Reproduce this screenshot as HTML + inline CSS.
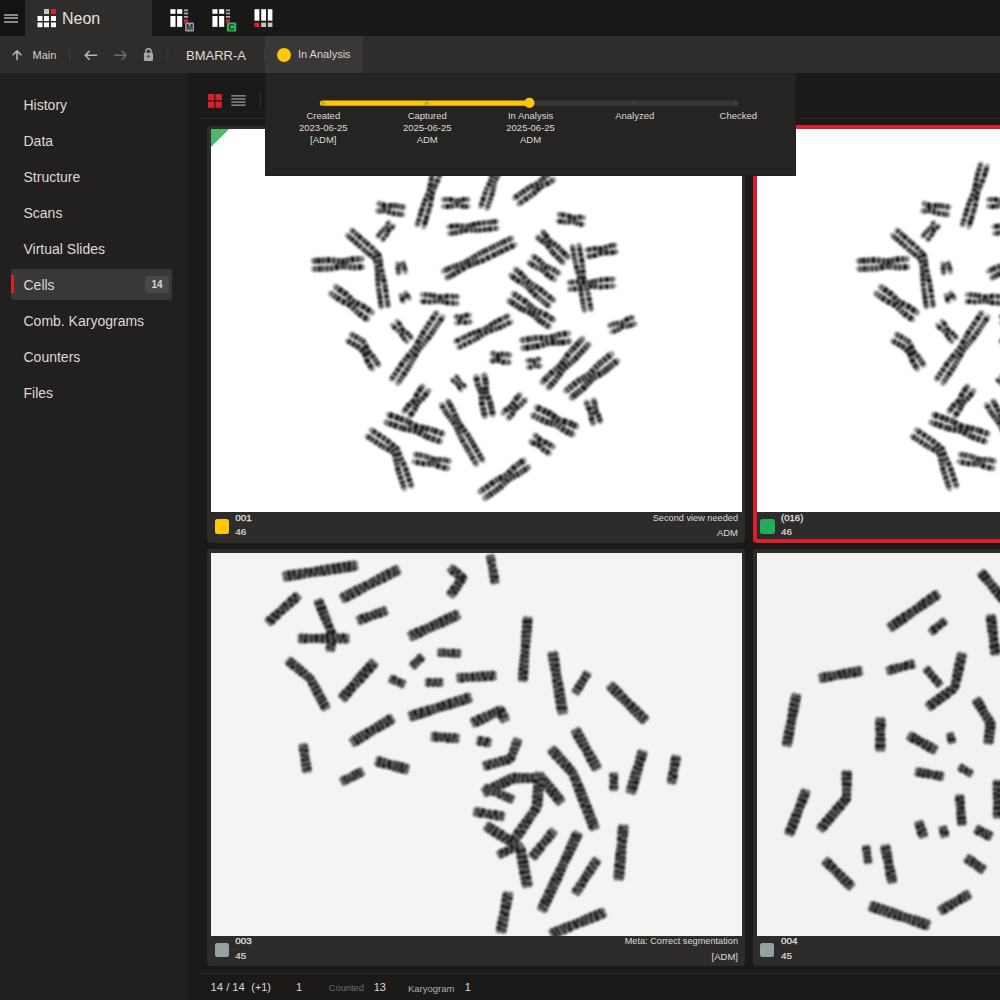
<!DOCTYPE html>
<html><head><meta charset="utf-8">
<style>
*{margin:0;padding:0;box-sizing:border-box}
html,body{width:1000px;height:1000px;overflow:hidden;background:#1b1a19;font-family:"Liberation Sans",sans-serif;color:#dedad6}
.a{position:absolute}
.t{position:absolute;white-space:nowrap;line-height:1}
</style></head><body>
<!-- top bar -->
<div class="a" style="left:0;top:0;width:1000px;height:36px;background:#1a1817"></div>
<div class="a" style="left:0;top:0;width:25px;height:36px;background:#151312"></div>
<div class="a" style="left:4px;top:13.6px;width:13.6px;height:2px;background:#8a8886"></div>
<div class="a" style="left:4px;top:17.4px;width:13.6px;height:2px;background:#8a8886"></div>
<div class="a" style="left:4px;top:21.1px;width:13.6px;height:2px;background:#8a8886"></div>
<div class="a" style="left:25px;top:0;width:127px;height:36px;background:#2e2d2c"></div>
<svg class="a" style="left:0;top:0" width="160" height="36">
<rect x="44" y="9" width="5" height="5" fill="#c8c6c4"/><rect x="51" y="9" width="5" height="5" fill="#d9202e"/>
<rect x="37.5" y="16" width="5" height="5" fill="#fff"/><rect x="44" y="16" width="5" height="5" fill="#fff"/><rect x="51" y="16" width="5" height="5" fill="#fff"/>
<rect x="37.5" y="22.5" width="5" height="4.7" fill="#fff"/><rect x="44" y="22.5" width="5" height="4.7" fill="#fff"/><rect x="51" y="22.5" width="5" height="4.7" fill="#fff"/>
</svg>
<div class="t" style="left:62px;top:10.9px;font-size:16px;color:#e6e2de">Neon</div>
<!-- app icons -->
<svg class="a" style="left:160px;top:0" width="130" height="36">
<g transform="translate(10,0)">
<rect x="0.4" y="9.2" width="5.1" height="4.6" fill="#fff"/><rect x="7.1" y="9.2" width="5.1" height="4.6" fill="#fff"/>
<rect x="0.4" y="16" width="5.1" height="10.9" fill="#fff"/><rect x="7.1" y="16" width="5.1" height="10.9" fill="#fff"/>
<rect x="13.9" y="9.4" width="4.2" height="1.8" fill="#aaa8a6"/><rect x="13.9" y="12.5" width="4.2" height="1.8" fill="#aaa8a6"/><rect x="13.9" y="16" width="4.2" height="1.8" fill="#aaa8a6"/>
<rect x="13.9" y="19.2" width="4.2" height="4.3" fill="#d9202e"/>
<rect x="14.6" y="22" width="10.4" height="10.4" rx="1.5" fill="#1a1817"/>
<rect x="15.1" y="22.5" width="8.9" height="8.9" rx="1.2" fill="#8ea3a6"/>
<text x="19.55" y="30" font-size="8.5" font-weight="bold" text-anchor="middle" fill="#1d2a30" font-family="Liberation Sans">M</text>
</g>
<g transform="translate(52,0)">
<rect x="0.4" y="9.2" width="5.1" height="4.6" fill="#fff"/><rect x="7.1" y="9.2" width="5.1" height="4.6" fill="#fff"/>
<rect x="0.4" y="16" width="5.1" height="10.9" fill="#fff"/><rect x="7.1" y="16" width="5.1" height="10.9" fill="#fff"/>
<rect x="13.9" y="9.4" width="4.2" height="1.8" fill="#aaa8a6"/><rect x="13.9" y="12.5" width="4.2" height="1.8" fill="#aaa8a6"/><rect x="13.9" y="16" width="4.2" height="1.8" fill="#aaa8a6"/>
<rect x="13.9" y="19.2" width="4.2" height="4.3" fill="#d9202e"/>
<rect x="14.4" y="22" width="10.4" height="10.4" rx="1.5" fill="#1a1817"/>
<rect x="14.9" y="22.5" width="9.4" height="9.1" rx="1.2" fill="#36b15a"/>
<text x="19.6" y="30" font-size="8.5" font-weight="bold" text-anchor="middle" fill="#12301d" font-family="Liberation Sans">C</text>
</g>
<g transform="translate(94,0)">
<rect x="0.5" y="9.2" width="4.9" height="11.5" fill="#fff"/><rect x="7.2" y="9.2" width="4.8" height="11.5" fill="#fff"/><rect x="13.8" y="9.2" width="4.6" height="11.5" fill="#fff"/>
<rect x="0.5" y="22.6" width="4.9" height="4.4" fill="#d9202e"/><rect x="7.2" y="22.6" width="4.8" height="4.4" fill="#c8c6c4"/><rect x="13.8" y="22.6" width="4.6" height="4.4" fill="#c8c6c4"/>
</g>
</svg>
<!-- sub bar -->
<div class="a" style="left:0;top:36px;width:1000px;height:37px;background:#2e2d2c"></div>
<div class="a" style="left:265px;top:36px;width:97.5px;height:37px;background:#393837"></div>
<svg class="a" style="left:0;top:36px" width="270" height="37">
<g stroke="#b8b5b2" stroke-width="1.6" fill="none" stroke-linecap="round" stroke-linejoin="round">
<path d="M17 23.6V14.9M13.1 18.8L17 14.9L20.9 18.8"/>
<path d="M85.2 19.3H96.6M89.1 15.4L85.2 19.3L89.1 23.2"/>
</g>
<g stroke="#6d6b69" stroke-width="1.6" fill="none" stroke-linecap="round" stroke-linejoin="round">
<path d="M114.8 19.3H126.2M122.3 15.4L126.2 19.3L122.3 23.2"/>
</g>
<path d="M145.9 17.5V15.2a2.55 2.55 0 0 1 5.1 0V17.5" stroke="#a9a6a3" stroke-width="1.5" fill="none"/>
<rect x="143.9" y="16.8" width="9.1" height="8.2" rx="0.9" fill="#a9a6a3"/>
<circle cx="148.45" cy="20.4" r="1.15" fill="#2e2d2c"/>
<rect x="69" y="11.5" width="1" height="14.5" fill="#3c3a39"/>
<rect x="167.2" y="11.5" width="1" height="14.5" fill="#3c3a39"/>
<rect x="264" y="11.5" width="1" height="14.5" fill="#3c3a39"/>
</svg>
<div class="t" style="left:32.6px;top:49.7px;font-size:11px;color:#d8d4d0">Main</div>
<div class="t" style="left:186px;top:48.7px;font-size:13px;color:#e0dcd8">BMARR-A</div>
<div class="a" style="left:276.8px;top:47.5px;width:14px;height:14px;border-radius:50%;background:#fcc609"></div>
<div class="t" style="left:298px;top:49.4px;font-size:11px;color:#d8d4d0">In Analysis</div>

<!-- sidebar -->
<div class="a" style="left:0;top:73px;width:188px;height:927px;background:#211f1f"></div>
<div class="a" style="left:11px;top:269px;width:161px;height:30.5px;border-radius:3px;background:#393837"></div>
<div class="a" style="left:11px;top:275px;width:3px;height:18px;background:#d9202e"></div>
<div class="a" style="left:145px;top:276px;width:24px;height:17px;border-radius:4px;background:#4a4948"></div>
<div class="t" style="left:145px;top:279.5px;width:24px;text-align:center;font-size:10px;font-weight:bold;color:#d8d4d0">14</div>
<div class="t" style="left:23.5px;top:97.85px;font-size:14px">History</div>
<div class="t" style="left:23.5px;top:133.85px;font-size:14px">Data</div>
<div class="t" style="left:23.5px;top:169.85px;font-size:14px">Structure</div>
<div class="t" style="left:23.5px;top:205.85px;font-size:14px">Scans</div>
<div class="t" style="left:23.5px;top:241.85px;font-size:14px">Virtual Slides</div>
<div class="t" style="left:23.5px;top:277.85px;font-size:14px">Cells</div>
<div class="t" style="left:23.5px;top:313.85px;font-size:14px">Comb. Karyograms</div>
<div class="t" style="left:23.5px;top:349.85px;font-size:14px">Counters</div>
<div class="t" style="left:23.5px;top:385.85px;font-size:14px">Files</div>

<!-- toolbar -->
<svg class="a" style="left:188px;top:73px" width="812" height="50">
<rect x="20" y="21" width="6.3" height="6.3" fill="#d9202e"/><rect x="27.5" y="21" width="6.3" height="6.3" fill="#d9202e"/>
<rect x="20" y="28.5" width="6.3" height="6.3" fill="#d9202e"/><rect x="27.5" y="28.5" width="6.3" height="6.3" fill="#d9202e"/>
<g fill="#9c9a98"><rect x="43.3" y="22.2" width="14.3" height="1.3"/><rect x="43.3" y="25.3" width="14.3" height="1.3"/><rect x="43.3" y="28.4" width="14.3" height="1.3"/><rect x="43.3" y="31.5" width="14.3" height="1.3"/></g>
<rect x="72" y="18" width="1" height="17.5" fill="#2e2c2b"/>
<rect x="12" y="45" width="800" height="1" fill="#2a2827"/>
</svg>

<!-- tiles -->
<div class="a" style="left:207px;top:125.5px;width:538px;height:417px;border-radius:4px;background:#2d2c2b"></div>
<div class="a" style="left:210.8px;top:129px;width:531px;height:383px;background:#fff;overflow:hidden" id="img1"></div>
<div class="a" style="left:752.8px;top:125.2px;width:300px;height:417.7px;border-radius:4px;background:#2d2c2b;border:4px solid #d9202e"></div>
<div class="a" style="left:756.7px;top:129px;width:300px;height:383px;background:#fff;overflow:hidden" id="img2"></div>
<div class="a" style="left:207px;top:549.2px;width:538px;height:417px;border-radius:4px;background:#2d2c2b"></div>
<div class="a" style="left:210.8px;top:552.5px;width:531px;height:383px;background:#f4f4f4;overflow:hidden" id="img3"></div>
<div class="a" style="left:753px;top:549.2px;width:300px;height:417px;border-radius:4px;background:#2d2c2b"></div>
<div class="a" style="left:756.7px;top:552.5px;width:300px;height:383px;background:#f2f2f2;overflow:hidden" id="img4"></div>

<!--CHROMO-->
<svg class="a" style="left:210.8px;top:129px" width="531" height="383" viewBox="210.8 129 531 383">
<defs><filter id="b1" x="-5%" y="-5%" width="110%" height="110%"><feGaussianBlur stdDeviation="0.8"/></filter>
<filter id="b2" x="-5%" y="-5%" width="110%" height="110%"><feGaussianBlur stdDeviation="0.9"/></filter>
<filter id="b3" x="-5%" y="-5%" width="110%" height="110%"><feGaussianBlur stdDeviation="0.85"/></filter></defs>
<path d="M210.8 129H229L210.8 147Z" fill="#4cb86c"/>
<g filter="url(#b1)"><g id="spA" stroke-linejoin="round">
<path d="M435.5 163.9 L435.0 165.5 L434.3 168.1 L433.5 170.6 L432.7 173.1 L432.0 175.6 L431.4 178.2 L430.9 180.8 L430.4 183.4 L429.9 186.0 L429.4 188.6 L428.8 191.2 L427.8 193.6 L426.8 196.1 L425.8 198.5 L424.7 200.9 L423.7 203.4 L422.9 205.9 L422.1 208.4 L421.3 210.9 L420.6 213.4 L419.8 215.9 L419.1 218.5 L418.3 221.0 L417.5 223.5 L417.0 225.1" fill="none" stroke="#9c9c9c" stroke-width="4.8" stroke-linecap="round"/>
<path d="M435.5 163.9 L435.0 165.5 L434.3 168.1 L433.5 170.6 L432.7 173.1 L432.0 175.6 L431.4 178.2 L430.9 180.8 L430.4 183.4 L429.9 186.0 L429.4 188.6 L428.8 191.2 L427.8 193.6 L426.8 196.1 L425.8 198.5 L424.7 200.9 L423.7 203.4 L422.9 205.9 L422.1 208.4 L421.3 210.9 L420.6 213.4 L419.8 215.9 L419.1 218.5 L418.3 221.0 L417.5 223.5 L417.0 225.1" fill="none" stroke="#121212" stroke-width="5.0" stroke-linecap="butt" stroke-dasharray="4.0 1.7 3.6 1.3 4.1 0.9 3.8 1.4 4.8 0.8" stroke-dashoffset="1.5"/>
<path d="M442.0 165.9 L441.5 167.5 L440.7 170.0 L439.9 172.5 L439.2 175.1 L438.4 177.6 L437.5 180.0 L436.5 182.5 L435.5 184.9 L434.4 187.4 L433.4 189.8 L432.4 192.3 L431.9 194.9 L431.4 197.5 L430.9 200.1 L430.5 202.7 L430.0 205.3 L429.3 207.8 L428.5 210.3 L427.8 212.9 L427.0 215.4 L426.3 217.9 L425.5 220.4 L424.7 222.9 L424.0 225.5 L423.5 227.1" fill="none" stroke="#9c9c9c" stroke-width="4.8" stroke-linecap="round"/>
<path d="M442.0 165.9 L441.5 167.5 L440.7 170.0 L439.9 172.5 L439.2 175.1 L438.4 177.6 L437.5 180.0 L436.5 182.5 L435.5 184.9 L434.4 187.4 L433.4 189.8 L432.4 192.3 L431.9 194.9 L431.4 197.5 L430.9 200.1 L430.5 202.7 L430.0 205.3 L429.3 207.8 L428.5 210.3 L427.8 212.9 L427.0 215.4 L426.3 217.9 L425.5 220.4 L424.7 222.9 L424.0 225.5 L423.5 227.1" fill="none" stroke="#121212" stroke-width="5.0" stroke-linecap="butt" stroke-dasharray="2.3 1.6 4.4 0.7 5.4 1.8 4.3 1.4 2.6 0.7" stroke-dashoffset="2.6"/>
<path d="M377.4 210.8 L379.2 211.0 L382.0 210.7 L384.8 210.3 L387.4 211.2 L390.0 212.4 L392.7 213.1 L395.4 213.5 L398.1 213.9 L400.8 214.3 L402.5 214.5" fill="none" stroke="#9c9c9c" stroke-width="5.3" stroke-linecap="round"/>
<path d="M377.4 210.8 L379.2 211.0 L382.0 210.7 L384.8 210.3 L387.4 211.2 L390.0 212.4 L392.7 213.1 L395.4 213.5 L398.1 213.9 L400.8 214.3 L402.5 214.5" fill="none" stroke="#121212" stroke-width="5.5" stroke-linecap="butt" stroke-dasharray="2.7 1.0 2.1 1.2 3.5 1.6 3.8 1.4 3.7 1.4" stroke-dashoffset="2.3"/>
<path d="M378.5 203.5 L380.2 203.8 L382.8 204.9 L385.4 206.1 L388.2 206.0 L391.0 205.6 L393.7 205.7 L396.4 206.1 L399.1 206.5 L401.8 206.9 L403.6 207.2" fill="none" stroke="#9c9c9c" stroke-width="5.3" stroke-linecap="round"/>
<path d="M378.5 203.5 L380.2 203.8 L382.8 204.9 L385.4 206.1 L388.2 206.0 L391.0 205.6 L393.7 205.7 L396.4 206.1 L399.1 206.5 L401.8 206.9 L403.6 207.2" fill="none" stroke="#121212" stroke-width="5.5" stroke-linecap="butt" stroke-dasharray="3.0 1.8 5.5 1.6 4.5 1.0 2.8 1.0 2.2 1.5" stroke-dashoffset="2.0"/>
<path d="M442.9 206.4 L444.7 206.4 L447.4 206.4 L450.1 206.4 L452.8 205.9 L455.5 205.2 L458.2 205.2 L460.9 205.9 L463.6 206.4 L466.3 206.4 L468.1 206.4" fill="none" stroke="#9c9c9c" stroke-width="4.8" stroke-linecap="round"/>
<path d="M442.9 206.4 L444.7 206.4 L447.4 206.4 L450.1 206.4 L452.8 205.9 L455.5 205.2 L458.2 205.2 L460.9 205.9 L463.6 206.4 L466.3 206.4 L468.1 206.4" fill="none" stroke="#121212" stroke-width="5.0" stroke-linecap="butt" stroke-dasharray="3.4 1.8 5.0 0.7 2.7 1.7 3.6 1.8 3.4 0.8" stroke-dashoffset="3.1"/>
<path d="M442.9 199.6 L444.7 199.6 L447.4 199.6 L450.1 199.6 L452.8 200.1 L455.5 200.8 L458.2 200.8 L460.9 200.1 L463.6 199.6 L466.3 199.6 L468.1 199.6" fill="none" stroke="#9c9c9c" stroke-width="4.8" stroke-linecap="round"/>
<path d="M442.9 199.6 L444.7 199.6 L447.4 199.6 L450.1 199.6 L452.8 200.1 L455.5 200.8 L458.2 200.8 L460.9 200.1 L463.6 199.6 L466.3 199.6 L468.1 199.6" fill="none" stroke="#121212" stroke-width="5.0" stroke-linecap="butt" stroke-dasharray="4.7 1.0 2.3 1.1 5.4 1.5 2.4 1.0 2.4 0.8" stroke-dashoffset="4.0"/>
<path d="M388.8 222.0 L387.7 223.5 L386.6 226.4 L384.7 228.6 L382.2 230.4 L380.4 232.7 L378.6 235.0 L377.4 236.5" fill="none" stroke="#9c9c9c" stroke-width="4.3" stroke-linecap="round"/>
<path d="M388.8 222.0 L387.7 223.5 L386.6 226.4 L384.7 228.6 L382.2 230.4 L380.4 232.7 L378.6 235.0 L377.4 236.5" fill="none" stroke="#121212" stroke-width="4.5" stroke-linecap="butt" stroke-dasharray="4.0 1.2 2.7 1.5 2.5 1.4 2.4 1.2 2.7 1.0" stroke-dashoffset="4.9"/>
<path d="M393.5 225.7 L392.3 227.1 L389.8 228.9 L388.1 231.2 L387.0 234.1 L385.2 236.4 L383.4 238.7 L382.2 240.2" fill="none" stroke="#9c9c9c" stroke-width="4.3" stroke-linecap="round"/>
<path d="M393.5 225.7 L392.3 227.1 L389.8 228.9 L388.1 231.2 L387.0 234.1 L385.2 236.4 L383.4 238.7 L382.2 240.2" fill="none" stroke="#121212" stroke-width="4.5" stroke-linecap="butt" stroke-dasharray="4.8 1.0 5.1 0.9 3.4 1.6 4.2 0.8 5.5 0.9" stroke-dashoffset="1.3"/>
<path d="M347.1 235.1 L348.4 236.3 L350.3 238.0 L352.3 239.7 L354.3 241.4 L356.3 243.2 L358.2 244.9 L360.2 246.6 L362.2 248.3 L364.2 250.1 L366.1 251.8 L368.2 253.5 L370.3 255.0 L372.4 256.6 L374.2 257.9 L375.2 259.1 L375.7 261.2 L376.2 263.8 L376.8 266.3 L377.0 268.9 L377.2 271.6 L377.4 274.2 L377.5 276.8 L377.7 279.4 L377.9 282.1 L378.0 284.7 L378.3 287.3 L378.7 289.9 L379.0 292.5 L379.4 295.1 L379.8 297.7 L380.2 300.3 L380.5 302.9 L380.9 305.5 L381.1 307.2" fill="none" stroke="#9c9c9c" stroke-width="4.8" stroke-linecap="round"/>
<path d="M347.1 235.1 L348.4 236.3 L350.3 238.0 L352.3 239.7 L354.3 241.4 L356.3 243.2 L358.2 244.9 L360.2 246.6 L362.2 248.3 L364.2 250.1 L366.1 251.8 L368.2 253.5 L370.3 255.0 L372.4 256.6 L374.2 257.9 L375.2 259.1 L375.7 261.2 L376.2 263.8 L376.8 266.3 L377.0 268.9 L377.2 271.6 L377.4 274.2 L377.5 276.8 L377.7 279.4 L377.9 282.1 L378.0 284.7 L378.3 287.3 L378.7 289.9 L379.0 292.5 L379.4 295.1 L379.8 297.7 L380.2 300.3 L380.5 302.9 L380.9 305.5 L381.1 307.2" fill="none" stroke="#121212" stroke-width="5.0" stroke-linecap="butt" stroke-dasharray="3.2 1.0 2.3 0.8 4.0 1.0 4.1 1.1 3.6 1.8" stroke-dashoffset="2.4"/>
<path d="M351.5 230.1 L352.8 231.2 L354.8 232.9 L356.7 234.7 L358.7 236.4 L360.7 238.1 L362.7 239.8 L364.6 241.6 L366.6 243.3 L368.6 245.0 L370.6 246.7 L372.5 248.5 L374.3 250.4 L376.2 252.3 L378.3 254.4 L379.9 257.4 L380.2 260.5 L380.3 263.2 L380.5 265.8 L381.0 268.4 L381.6 270.9 L382.2 273.5 L382.8 276.1 L383.3 278.6 L383.9 281.2 L384.5 283.8 L385.0 286.4 L385.3 288.9 L385.7 291.5 L386.1 294.1 L386.4 296.7 L386.8 299.3 L387.2 301.9 L387.6 304.5 L387.8 306.2" fill="none" stroke="#9c9c9c" stroke-width="4.8" stroke-linecap="round"/>
<path d="M351.5 230.1 L352.8 231.2 L354.8 232.9 L356.7 234.7 L358.7 236.4 L360.7 238.1 L362.7 239.8 L364.6 241.6 L366.6 243.3 L368.6 245.0 L370.6 246.7 L372.5 248.5 L374.3 250.4 L376.2 252.3 L378.3 254.4 L379.9 257.4 L380.2 260.5 L380.3 263.2 L380.5 265.8 L381.0 268.4 L381.6 270.9 L382.2 273.5 L382.8 276.1 L383.3 278.6 L383.9 281.2 L384.5 283.8 L385.0 286.4 L385.3 288.9 L385.7 291.5 L386.1 294.1 L386.4 296.7 L386.8 299.3 L387.2 301.9 L387.6 304.5 L387.8 306.2" fill="none" stroke="#121212" stroke-width="5.0" stroke-linecap="butt" stroke-dasharray="4.0 1.7 2.6 0.9 5.2 1.6 2.9 0.9 4.6 1.7" stroke-dashoffset="1.0"/>
<path d="M313.7 269.0 L315.4 268.9 L318.1 268.8 L320.7 268.7 L323.4 268.6 L326.0 268.5 L328.7 268.4 L331.3 268.3 L334.0 267.7 L336.6 267.2 L339.2 266.6 L341.9 266.1 L344.5 266.3 L347.2 266.7 L349.9 267.0 L352.5 267.3 L355.2 267.3 L357.9 267.2 L360.5 267.1 L362.2 267.1" fill="none" stroke="#9c9c9c" stroke-width="5.8" stroke-linecap="round"/>
<path d="M313.7 269.0 L315.4 268.9 L318.1 268.8 L320.7 268.7 L323.4 268.6 L326.0 268.5 L328.7 268.4 L331.3 268.3 L334.0 267.7 L336.6 267.2 L339.2 266.6 L341.9 266.1 L344.5 266.3 L347.2 266.7 L349.9 267.0 L352.5 267.3 L355.2 267.3 L357.9 267.2 L360.5 267.1 L362.2 267.1" fill="none" stroke="#121212" stroke-width="6.0" stroke-linecap="butt" stroke-dasharray="5.1 1.4 3.5 0.8 2.1 1.8 2.8 1.5 2.9 1.6" stroke-dashoffset="3.0"/>
<path d="M313.4 260.9 L315.1 260.9 L317.7 260.8 L320.4 260.7 L323.1 260.6 L325.7 260.4 L328.4 260.3 L331.0 260.3 L333.7 260.6 L336.3 260.9 L339.0 261.2 L341.7 261.6 L344.3 261.1 L347.0 260.6 L349.6 260.1 L352.2 259.5 L354.9 259.3 L357.5 259.2 L360.2 259.1 L361.9 259.0" fill="none" stroke="#9c9c9c" stroke-width="5.8" stroke-linecap="round"/>
<path d="M313.4 260.9 L315.1 260.9 L317.7 260.8 L320.4 260.7 L323.1 260.6 L325.7 260.4 L328.4 260.3 L331.0 260.3 L333.7 260.6 L336.3 260.9 L339.0 261.2 L341.7 261.6 L344.3 261.1 L347.0 260.6 L349.6 260.1 L352.2 259.5 L354.9 259.3 L357.5 259.2 L360.2 259.1 L361.9 259.0" fill="none" stroke="#121212" stroke-width="6.0" stroke-linecap="butt" stroke-dasharray="3.0 0.9 4.5 0.8 2.8 1.3 5.0 1.4 3.0 1.7" stroke-dashoffset="1.0"/>
<path d="M397.3 263.5 L398.3 265.4 L397.9 268.5 L398.2 271.6 L398.5 273.5" fill="none" stroke="#9c9c9c" stroke-width="4.8" stroke-linecap="round"/>
<path d="M397.3 263.5 L398.3 265.4 L397.9 268.5 L398.2 271.6 L398.5 273.5" fill="none" stroke="#121212" stroke-width="5.0" stroke-linecap="butt" stroke-dasharray="2.9 1.2 2.2 0.9 3.3 1.3 2.5 1.1 5.1 1.8" stroke-dashoffset="3.3"/>
<path d="M403.1 262.6 L402.7 264.6 L404.1 267.5 L404.8 270.4 L405.1 272.4" fill="none" stroke="#9c9c9c" stroke-width="4.8" stroke-linecap="round"/>
<path d="M403.1 262.6 L402.7 264.6 L404.1 267.5 L404.8 270.4 L405.1 272.4" fill="none" stroke="#121212" stroke-width="5.0" stroke-linecap="butt" stroke-dasharray="4.4 1.3 2.5 0.7 2.1 1.7 4.5 1.8 2.1 1.4" stroke-dashoffset="2.4"/>
<path d="M330.8 293.4 L332.3 294.5 L334.5 296.1 L336.7 297.6 L339.0 299.2 L341.2 300.8 L343.7 302.0 L346.2 303.2 L348.7 304.4 L351.1 305.8 L353.0 307.8 L355.0 309.7 L356.9 311.7 L359.0 313.5 L361.2 315.1 L363.4 316.7 L365.6 318.3 L367.1 319.3" fill="none" stroke="#9c9c9c" stroke-width="5.8" stroke-linecap="round"/>
<path d="M330.8 293.4 L332.3 294.5 L334.5 296.1 L336.7 297.6 L339.0 299.2 L341.2 300.8 L343.7 302.0 L346.2 303.2 L348.7 304.4 L351.1 305.8 L353.0 307.8 L355.0 309.7 L356.9 311.7 L359.0 313.5 L361.2 315.1 L363.4 316.7 L365.6 318.3 L367.1 319.3" fill="none" stroke="#121212" stroke-width="6.0" stroke-linecap="butt" stroke-dasharray="3.1 1.8 2.3 1.3 4.6 1.7 4.6 1.5 4.8 1.7" stroke-dashoffset="1.8"/>
<path d="M335.5 286.9 L337.0 287.9 L339.2 289.5 L341.4 291.1 L343.6 292.7 L345.9 294.3 L347.8 296.2 L349.8 298.2 L351.7 300.2 L353.7 302.0 L356.3 303.2 L358.8 304.4 L361.3 305.6 L363.6 307.0 L365.9 308.6 L368.1 310.1 L370.3 311.7 L371.8 312.8" fill="none" stroke="#9c9c9c" stroke-width="5.8" stroke-linecap="round"/>
<path d="M335.5 286.9 L337.0 287.9 L339.2 289.5 L341.4 291.1 L343.6 292.7 L345.9 294.3 L347.8 296.2 L349.8 298.2 L351.7 300.2 L353.7 302.0 L356.3 303.2 L358.8 304.4 L361.3 305.6 L363.6 307.0 L365.9 308.6 L368.1 310.1 L370.3 311.7 L371.8 312.8" fill="none" stroke="#121212" stroke-width="6.0" stroke-linecap="butt" stroke-dasharray="4.4 1.7 5.0 1.2 4.8 1.6 4.0 1.4 3.3 1.3" stroke-dashoffset="3.0"/>
<path d="M400.4 295.2 L402.1 296.5 L402.2 299.8 L403.0 301.6" fill="none" stroke="#9c9c9c" stroke-width="4.8" stroke-linecap="round"/>
<path d="M400.4 295.2 L402.1 296.5 L402.2 299.8 L403.0 301.6" fill="none" stroke="#121212" stroke-width="5.0" stroke-linecap="butt" stroke-dasharray="4.2 1.8 5.1 1.5 3.4 1.5 4.0 1.2 4.9 0.8" stroke-dashoffset="3.8"/>
<path d="M405.5 292.7 L405.5 294.8 L408.2 296.8 L409.0 298.6" fill="none" stroke="#9c9c9c" stroke-width="4.8" stroke-linecap="round"/>
<path d="M405.5 292.7 L405.5 294.8 L408.2 296.8 L409.0 298.6" fill="none" stroke="#121212" stroke-width="5.0" stroke-linecap="butt" stroke-dasharray="2.1 1.4 3.7 1.0 4.4 1.2 4.2 1.7 2.9 0.7" stroke-dashoffset="1.5"/>
<path d="M421.4 301.4 L423.1 301.5 L425.8 301.6 L428.5 301.8 L431.2 301.9 L433.9 301.6 L436.7 301.2 L439.4 300.9 L442.1 301.5 L444.8 302.1 L447.4 302.7 L450.1 302.9 L452.8 303.1 L455.5 303.2 L457.3 303.3" fill="none" stroke="#9c9c9c" stroke-width="4.8" stroke-linecap="round"/>
<path d="M421.4 301.4 L423.1 301.5 L425.8 301.6 L428.5 301.8 L431.2 301.9 L433.9 301.6 L436.7 301.2 L439.4 300.9 L442.1 301.5 L444.8 302.1 L447.4 302.7 L450.1 302.9 L452.8 303.1 L455.5 303.2 L457.3 303.3" fill="none" stroke="#121212" stroke-width="5.0" stroke-linecap="butt" stroke-dasharray="2.7 0.9 5.2 1.4 3.5 1.7 3.1 1.4 2.7 1.2" stroke-dashoffset="4.0"/>
<path d="M421.7 294.7 L423.5 294.8 L426.2 294.9 L428.9 295.1 L431.6 295.2 L434.3 295.9 L436.9 296.5 L439.6 297.1 L442.3 296.8 L445.0 296.5 L447.8 296.1 L450.5 296.2 L453.2 296.4 L455.9 296.5 L457.6 296.6" fill="none" stroke="#9c9c9c" stroke-width="4.8" stroke-linecap="round"/>
<path d="M421.7 294.7 L423.5 294.8 L426.2 294.9 L428.9 295.1 L431.6 295.2 L434.3 295.9 L436.9 296.5 L439.6 297.1 L442.3 296.8 L445.0 296.5 L447.8 296.1 L450.5 296.2 L453.2 296.4 L455.9 296.5 L457.6 296.6" fill="none" stroke="#121212" stroke-width="5.0" stroke-linecap="butt" stroke-dasharray="5.2 1.7 3.3 1.3 3.1 0.8 3.7 1.6 5.0 1.5" stroke-dashoffset="4.8"/>
<path d="M448.9 233.4 L450.6 233.3 L453.2 233.0 L455.9 232.7 L458.5 232.1 L461.1 231.4 L463.7 230.8 L466.3 230.1 L469.0 230.0 L471.6 230.1 L474.3 230.2 L477.0 230.2 L479.7 230.1 L482.3 229.8 L484.9 229.6 L487.6 229.3 L490.2 229.0 L492.9 228.7 L495.5 228.4 L497.2 228.2" fill="none" stroke="#9c9c9c" stroke-width="4.8" stroke-linecap="round"/>
<path d="M448.9 233.4 L450.6 233.3 L453.2 233.0 L455.9 232.7 L458.5 232.1 L461.1 231.4 L463.7 230.8 L466.3 230.1 L469.0 230.0 L471.6 230.1 L474.3 230.2 L477.0 230.2 L479.7 230.1 L482.3 229.8 L484.9 229.6 L487.6 229.3 L490.2 229.0 L492.9 228.7 L495.5 228.4 L497.2 228.2" fill="none" stroke="#121212" stroke-width="5.0" stroke-linecap="butt" stroke-dasharray="2.6 1.2 3.0 0.9 3.4 1.4 3.7 1.0 4.9 1.8" stroke-dashoffset="2.3"/>
<path d="M448.2 226.8 L449.9 226.6 L452.5 226.3 L455.2 226.0 L457.8 226.0 L460.5 226.1 L463.2 226.2 L465.9 226.3 L468.5 225.8 L471.1 225.2 L473.7 224.5 L476.3 223.9 L478.9 223.4 L481.6 223.2 L484.2 222.9 L486.9 222.6 L489.5 222.3 L492.2 222.0 L494.8 221.7 L496.5 221.6" fill="none" stroke="#9c9c9c" stroke-width="4.8" stroke-linecap="round"/>
<path d="M448.2 226.8 L449.9 226.6 L452.5 226.3 L455.2 226.0 L457.8 226.0 L460.5 226.1 L463.2 226.2 L465.9 226.3 L468.5 225.8 L471.1 225.2 L473.7 224.5 L476.3 223.9 L478.9 223.4 L481.6 223.2 L484.2 222.9 L486.9 222.6 L489.5 222.3 L492.2 222.0 L494.8 221.7 L496.5 221.6" fill="none" stroke="#121212" stroke-width="5.0" stroke-linecap="butt" stroke-dasharray="2.3 0.7 5.1 0.7 4.5 1.3 3.1 1.6 2.1 0.8" stroke-dashoffset="2.3"/>
<path d="M446.5 277.9 L448.0 277.2 L450.4 276.0 L452.8 274.7 L455.1 273.3 L457.4 271.9 L459.7 270.5 L462.0 269.1 L464.3 267.7 L466.6 266.3 L469.1 265.4 L471.7 264.4 L474.2 263.5 L476.7 262.5 L479.3 261.6 L481.8 260.7 L484.2 259.6 L486.6 258.4 L489.1 257.2 L491.5 256.0 L493.9 254.9 L496.3 253.7 L498.7 252.5 L501.1 251.4 L503.5 250.2 L506.0 249.0 L508.4 247.8 L510.8 246.7 L513.2 245.5 L514.8 244.7" fill="none" stroke="#9c9c9c" stroke-width="5.3" stroke-linecap="round"/>
<path d="M446.5 277.9 L448.0 277.2 L450.4 276.0 L452.8 274.7 L455.1 273.3 L457.4 271.9 L459.7 270.5 L462.0 269.1 L464.3 267.7 L466.6 266.3 L469.1 265.4 L471.7 264.4 L474.2 263.5 L476.7 262.5 L479.3 261.6 L481.8 260.7 L484.2 259.6 L486.6 258.4 L489.1 257.2 L491.5 256.0 L493.9 254.9 L496.3 253.7 L498.7 252.5 L501.1 251.4 L503.5 250.2 L506.0 249.0 L508.4 247.8 L510.8 246.7 L513.2 245.5 L514.8 244.7" fill="none" stroke="#121212" stroke-width="5.5" stroke-linecap="butt" stroke-dasharray="4.9 1.0 2.5 0.8 4.2 1.2 4.2 1.4 4.8 1.8" stroke-dashoffset="3.4"/>
<path d="M443.2 271.3 L444.8 270.5 L447.2 269.3 L449.7 268.3 L452.2 267.3 L454.7 266.4 L457.3 265.5 L459.8 264.5 L462.3 263.6 L464.8 262.6 L467.1 261.2 L469.4 259.8 L471.7 258.4 L474.0 257.0 L476.3 255.6 L478.6 254.2 L481.0 252.9 L483.4 251.7 L485.8 250.6 L488.2 249.4 L490.7 248.2 L493.1 247.1 L495.5 245.9 L497.9 244.7 L500.3 243.5 L502.7 242.4 L505.1 241.2 L507.6 240.0 L510.0 238.8 L511.5 238.1" fill="none" stroke="#9c9c9c" stroke-width="5.3" stroke-linecap="round"/>
<path d="M443.2 271.3 L444.8 270.5 L447.2 269.3 L449.7 268.3 L452.2 267.3 L454.7 266.4 L457.3 265.5 L459.8 264.5 L462.3 263.6 L464.8 262.6 L467.1 261.2 L469.4 259.8 L471.7 258.4 L474.0 257.0 L476.3 255.6 L478.6 254.2 L481.0 252.9 L483.4 251.7 L485.8 250.6 L488.2 249.4 L490.7 248.2 L493.1 247.1 L495.5 245.9 L497.9 244.7 L500.3 243.5 L502.7 242.4 L505.1 241.2 L507.6 240.0 L510.0 238.8 L511.5 238.1" fill="none" stroke="#121212" stroke-width="5.5" stroke-linecap="butt" stroke-dasharray="2.7 1.2 2.6 0.7 3.7 1.5 2.6 1.0 3.2 1.5" stroke-dashoffset="2.6"/>
<path d="M391.9 324.7 L393.1 326.1 L394.9 328.2 L397.0 330.0 L399.4 331.6 L401.0 333.8 L402.3 336.4 L403.9 338.6 L405.7 340.7 L406.9 342.0" fill="none" stroke="#9c9c9c" stroke-width="4.3" stroke-linecap="round"/>
<path d="M391.9 324.7 L393.1 326.1 L394.9 328.2 L397.0 330.0 L399.4 331.6 L401.0 333.8 L402.3 336.4 L403.9 338.6 L405.7 340.7 L406.9 342.0" fill="none" stroke="#121212" stroke-width="4.5" stroke-linecap="butt" stroke-dasharray="4.6 1.1 4.8 1.7 2.3 1.7 4.5 0.8 3.6 1.4" stroke-dashoffset="4.5"/>
<path d="M396.5 320.8 L397.7 322.1 L399.5 324.2 L401.0 326.6 L402.2 329.1 L404.2 331.1 L406.5 332.7 L408.5 334.6 L410.3 336.7 L411.5 338.1" fill="none" stroke="#9c9c9c" stroke-width="4.3" stroke-linecap="round"/>
<path d="M396.5 320.8 L397.7 322.1 L399.5 324.2 L401.0 326.6 L402.2 329.1 L404.2 331.1 L406.5 332.7 L408.5 334.6 L410.3 336.7 L411.5 338.1" fill="none" stroke="#121212" stroke-width="4.5" stroke-linecap="butt" stroke-dasharray="3.3 1.3 5.1 1.6 5.3 1.2 4.3 0.9 4.5 1.6" stroke-dashoffset="3.2"/>
<path d="M436.4 312.7 L435.5 314.1 L434.0 316.3 L432.5 318.5 L431.0 320.7 L429.5 322.9 L428.0 325.1 L426.6 327.3 L425.1 329.5 L423.6 331.7 L422.3 334.0 L421.0 336.3 L419.7 338.6 L418.4 341.0 L417.1 343.3 L415.9 345.6 L414.6 348.0 L412.9 350.0 L411.2 352.1 L409.5 354.1 L407.8 356.2 L406.1 358.2 L404.5 360.3 L402.8 362.4 L401.3 364.6 L399.8 366.8 L398.4 369.0 L396.9 371.2 L395.4 373.3 L393.9 375.5 L392.4 377.7 L391.5 379.2" fill="none" stroke="#9c9c9c" stroke-width="5.3" stroke-linecap="round"/>
<path d="M436.4 312.7 L435.5 314.1 L434.0 316.3 L432.5 318.5 L431.0 320.7 L429.5 322.9 L428.0 325.1 L426.6 327.3 L425.1 329.5 L423.6 331.7 L422.3 334.0 L421.0 336.3 L419.7 338.6 L418.4 341.0 L417.1 343.3 L415.9 345.6 L414.6 348.0 L412.9 350.0 L411.2 352.1 L409.5 354.1 L407.8 356.2 L406.1 358.2 L404.5 360.3 L402.8 362.4 L401.3 364.6 L399.8 366.8 L398.4 369.0 L396.9 371.2 L395.4 373.3 L393.9 375.5 L392.4 377.7 L391.5 379.2" fill="none" stroke="#121212" stroke-width="5.5" stroke-linecap="butt" stroke-dasharray="2.7 1.7 5.4 1.8 3.9 1.6 3.1 1.7 5.0 1.1" stroke-dashoffset="0.4"/>
<path d="M442.5 316.8 L441.6 318.3 L440.1 320.5 L438.6 322.7 L437.1 324.8 L435.6 327.0 L434.2 329.2 L432.7 331.4 L431.2 333.6 L429.7 335.8 L428.1 337.9 L426.4 339.9 L424.7 342.0 L423.0 344.1 L421.3 346.1 L419.6 348.2 L417.9 350.2 L416.7 352.6 L415.4 354.9 L414.1 357.2 L412.8 359.6 L411.5 361.9 L410.3 364.2 L408.9 366.5 L407.4 368.7 L406.0 370.9 L404.5 373.1 L403.0 375.3 L401.5 377.5 L400.0 379.7 L398.5 381.9 L397.6 383.3" fill="none" stroke="#9c9c9c" stroke-width="5.3" stroke-linecap="round"/>
<path d="M442.5 316.8 L441.6 318.3 L440.1 320.5 L438.6 322.7 L437.1 324.8 L435.6 327.0 L434.2 329.2 L432.7 331.4 L431.2 333.6 L429.7 335.8 L428.1 337.9 L426.4 339.9 L424.7 342.0 L423.0 344.1 L421.3 346.1 L419.6 348.2 L417.9 350.2 L416.7 352.6 L415.4 354.9 L414.1 357.2 L412.8 359.6 L411.5 361.9 L410.3 364.2 L408.9 366.5 L407.4 368.7 L406.0 370.9 L404.5 373.1 L403.0 375.3 L401.5 377.5 L400.0 379.7 L398.5 381.9 L397.6 383.3" fill="none" stroke="#121212" stroke-width="5.5" stroke-linecap="butt" stroke-dasharray="3.5 1.3 4.7 1.2 2.1 1.6 2.2 1.6 2.6 1.1" stroke-dashoffset="3.9"/>
<path d="M456.1 323.1 L457.8 322.8 L460.4 321.4 L463.2 322.1 L465.9 322.3 L468.6 322.0 L470.4 321.8" fill="none" stroke="#9c9c9c" stroke-width="4.8" stroke-linecap="round"/>
<path d="M456.1 323.1 L457.8 322.8 L460.4 321.4 L463.2 322.1 L465.9 322.3 L468.6 322.0 L470.4 321.8" fill="none" stroke="#121212" stroke-width="5.0" stroke-linecap="butt" stroke-dasharray="2.5 1.3 4.5 1.6 4.4 1.7 3.7 1.7 2.3 0.9" stroke-dashoffset="2.6"/>
<path d="M455.4 316.7 L457.2 316.7 L460.0 317.6 L462.6 316.3 L465.3 315.6 L468.0 315.3 L469.7 315.1" fill="none" stroke="#9c9c9c" stroke-width="4.8" stroke-linecap="round"/>
<path d="M455.4 316.7 L457.2 316.7 L460.0 317.6 L462.6 316.3 L465.3 315.6 L468.0 315.3 L469.7 315.1" fill="none" stroke="#121212" stroke-width="5.0" stroke-linecap="butt" stroke-dasharray="3.0 1.5 4.2 1.3 5.0 1.3 3.1 1.1 5.0 1.7" stroke-dashoffset="1.0"/>
<path d="M347.6 340.9 L349.0 341.7 L351.3 343.0 L353.6 344.3 L355.9 345.6 L357.8 346.7 L359.2 347.6 L360.7 349.2 L362.5 351.2 L364.2 353.2 L365.2 355.7 L366.1 358.2 L367.1 360.7 L368.3 363.0 L369.7 365.3 L371.1 367.5 L372.0 369.0" fill="none" stroke="#9c9c9c" stroke-width="5.3" stroke-linecap="round"/>
<path d="M347.6 340.9 L349.0 341.7 L351.3 343.0 L353.6 344.3 L355.9 345.6 L357.8 346.7 L359.2 347.6 L360.7 349.2 L362.5 351.2 L364.2 353.2 L365.2 355.7 L366.1 358.2 L367.1 360.7 L368.3 363.0 L369.7 365.3 L371.1 367.5 L372.0 369.0" fill="none" stroke="#121212" stroke-width="5.5" stroke-linecap="butt" stroke-dasharray="5.4 1.3 4.0 0.9 3.9 1.3 4.1 0.7 5.4 1.3" stroke-dashoffset="2.0"/>
<path d="M351.2 334.4 L352.7 335.3 L355.0 336.6 L357.3 337.9 L359.5 339.2 L362.2 340.7 L364.5 343.3 L365.7 346.2 L366.7 348.6 L367.8 351.1 L369.5 353.0 L371.3 355.0 L373.1 357.0 L374.6 359.2 L376.0 361.4 L377.4 363.6 L378.3 365.1" fill="none" stroke="#9c9c9c" stroke-width="5.3" stroke-linecap="round"/>
<path d="M351.2 334.4 L352.7 335.3 L355.0 336.6 L357.3 337.9 L359.5 339.2 L362.2 340.7 L364.5 343.3 L365.7 346.2 L366.7 348.6 L367.8 351.1 L369.5 353.0 L371.3 355.0 L373.1 357.0 L374.6 359.2 L376.0 361.4 L377.4 363.6 L378.3 365.1" fill="none" stroke="#121212" stroke-width="5.5" stroke-linecap="butt" stroke-dasharray="4.8 1.3 3.7 1.5 2.2 1.3 3.4 1.8 5.2 1.0" stroke-dashoffset="2.4"/>
<path d="M493.5 167.8 L493.0 169.5 L492.2 172.0 L491.7 174.7 L491.3 177.4 L490.8 180.0 L489.9 182.6 L488.6 185.0 L487.4 187.4 L486.2 189.8 L485.3 192.3 L484.5 194.8 L483.6 197.4 L482.8 199.9 L481.9 202.5 L481.1 205.0 L480.5 206.6" fill="none" stroke="#9c9c9c" stroke-width="4.8" stroke-linecap="round"/>
<path d="M493.5 167.8 L493.0 169.5 L492.2 172.0 L491.7 174.7 L491.3 177.4 L490.8 180.0 L489.9 182.6 L488.6 185.0 L487.4 187.4 L486.2 189.8 L485.3 192.3 L484.5 194.8 L483.6 197.4 L482.8 199.9 L481.9 202.5 L481.1 205.0 L480.5 206.6" fill="none" stroke="#121212" stroke-width="5.0" stroke-linecap="butt" stroke-dasharray="3.5 1.6 5.2 1.2 3.1 0.9 4.2 1.7 2.5 1.6" stroke-dashoffset="0.1"/>
<path d="M499.9 170.0 L499.3 171.6 L498.4 174.1 L497.2 176.5 L495.9 178.9 L494.7 181.3 L493.9 183.9 L493.5 186.6 L493.0 189.2 L492.5 191.9 L491.7 194.4 L490.8 197.0 L490.0 199.5 L489.1 202.1 L488.3 204.6 L487.4 207.1 L486.9 208.8" fill="none" stroke="#9c9c9c" stroke-width="4.8" stroke-linecap="round"/>
<path d="M499.9 170.0 L499.3 171.6 L498.4 174.1 L497.2 176.5 L495.9 178.9 L494.7 181.3 L493.9 183.9 L493.5 186.6 L493.0 189.2 L492.5 191.9 L491.7 194.4 L490.8 197.0 L490.0 199.5 L489.1 202.1 L488.3 204.6 L487.4 207.1 L486.9 208.8" fill="none" stroke="#121212" stroke-width="5.0" stroke-linecap="butt" stroke-dasharray="2.7 0.9 4.4 1.1 3.2 1.4 2.4 1.5 2.4 1.3" stroke-dashoffset="1.3"/>
<path d="M549.1 173.5 L547.7 174.5 L545.6 176.0 L543.7 177.7 L541.8 179.5 L539.9 181.4 L538.0 183.3 L535.7 184.5 L533.3 185.6 L530.9 186.7 L528.6 187.9 L526.5 189.4 L524.3 190.9 L522.2 192.4 L520.1 193.9 L517.9 195.4 L515.8 196.9 L514.4 197.9" fill="none" stroke="#9c9c9c" stroke-width="5.3" stroke-linecap="round"/>
<path d="M549.1 173.5 L547.7 174.5 L545.6 176.0 L543.7 177.7 L541.8 179.5 L539.9 181.4 L538.0 183.3 L535.7 184.5 L533.3 185.6 L530.9 186.7 L528.6 187.9 L526.5 189.4 L524.3 190.9 L522.2 192.4 L520.1 193.9 L517.9 195.4 L515.8 196.9 L514.4 197.9" fill="none" stroke="#121212" stroke-width="5.5" stroke-linecap="butt" stroke-dasharray="3.9 1.2 3.3 1.2 3.9 0.9 2.7 1.4 4.2 1.3" stroke-dashoffset="4.3"/>
<path d="M553.4 179.5 L552.0 180.5 L549.9 182.0 L547.6 183.3 L545.2 184.4 L542.8 185.5 L540.4 186.7 L538.5 188.4 L536.6 190.3 L534.7 192.2 L532.8 194.0 L530.7 195.5 L528.6 197.0 L526.4 198.4 L524.3 199.9 L522.2 201.4 L520.1 202.9 L518.7 203.9" fill="none" stroke="#9c9c9c" stroke-width="5.3" stroke-linecap="round"/>
<path d="M553.4 179.5 L552.0 180.5 L549.9 182.0 L547.6 183.3 L545.2 184.4 L542.8 185.5 L540.4 186.7 L538.5 188.4 L536.6 190.3 L534.7 192.2 L532.8 194.0 L530.7 195.5 L528.6 197.0 L526.4 198.4 L524.3 199.9 L522.2 201.4 L520.1 202.9 L518.7 203.9" fill="none" stroke="#121212" stroke-width="5.5" stroke-linecap="butt" stroke-dasharray="4.1 1.6 2.8 1.5 4.8 1.7 3.1 1.0 5.2 0.9" stroke-dashoffset="5.0"/>
<path d="M557.7 221.1 L559.5 221.3 L562.2 221.7 L564.9 222.0 L567.6 222.0 L570.4 221.7 L573.1 221.8 L575.7 222.9 L578.4 223.8 L581.1 224.2 L582.8 224.4" fill="none" stroke="#9c9c9c" stroke-width="4.8" stroke-linecap="round"/>
<path d="M557.7 221.1 L559.5 221.3 L562.2 221.7 L564.9 222.0 L567.6 222.0 L570.4 221.7 L573.1 221.8 L575.7 222.9 L578.4 223.8 L581.1 224.2 L582.8 224.4" fill="none" stroke="#121212" stroke-width="5.0" stroke-linecap="butt" stroke-dasharray="2.5 1.0 4.5 1.0 2.3 1.6 3.5 1.6 2.4 1.1" stroke-dashoffset="3.4"/>
<path d="M558.6 214.4 L560.3 214.6 L563.0 215.0 L565.7 215.3 L568.4 216.1 L571.0 217.1 L573.7 217.7 L576.5 217.4 L579.2 217.1 L581.9 217.5 L583.7 217.7" fill="none" stroke="#9c9c9c" stroke-width="4.8" stroke-linecap="round"/>
<path d="M558.6 214.4 L560.3 214.6 L563.0 215.0 L565.7 215.3 L568.4 216.1 L571.0 217.1 L573.7 217.7 L576.5 217.4 L579.2 217.1 L581.9 217.5 L583.7 217.7" fill="none" stroke="#121212" stroke-width="5.0" stroke-linecap="butt" stroke-dasharray="2.1 0.9 4.4 1.7 5.4 0.8 3.8 1.5 3.8 1.5" stroke-dashoffset="0.9"/>
<path d="M537.3 237.1 L538.5 238.3 L540.7 240.0 L543.0 241.6 L545.3 243.1 L547.2 245.1 L548.8 247.4 L550.3 249.7 L552.0 251.8 L553.9 253.8 L555.9 255.7 L557.8 257.6 L559.7 259.6 L561.7 261.5 L562.9 262.7" fill="none" stroke="#9c9c9c" stroke-width="5.3" stroke-linecap="round"/>
<path d="M537.3 237.1 L538.5 238.3 L540.7 240.0 L543.0 241.6 L545.3 243.1 L547.2 245.1 L548.8 247.4 L550.3 249.7 L552.0 251.8 L553.9 253.8 L555.9 255.7 L557.8 257.6 L559.7 259.6 L561.7 261.5 L562.9 262.7" fill="none" stroke="#121212" stroke-width="5.5" stroke-linecap="butt" stroke-dasharray="2.4 0.7 3.9 1.3 4.0 0.9 2.6 0.9 4.9 1.8" stroke-dashoffset="4.6"/>
<path d="M542.5 231.9 L543.7 233.1 L545.4 235.3 L547.0 237.6 L548.5 239.9 L550.5 241.8 L552.8 243.4 L555.1 244.9 L557.2 246.6 L559.2 248.5 L561.1 250.5 L563.0 252.4 L565.0 254.3 L566.9 256.3 L568.1 257.5" fill="none" stroke="#9c9c9c" stroke-width="5.3" stroke-linecap="round"/>
<path d="M542.5 231.9 L543.7 233.1 L545.4 235.3 L547.0 237.6 L548.5 239.9 L550.5 241.8 L552.8 243.4 L555.1 244.9 L557.2 246.6 L559.2 248.5 L561.1 250.5 L563.0 252.4 L565.0 254.3 L566.9 256.3 L568.1 257.5" fill="none" stroke="#121212" stroke-width="5.5" stroke-linecap="butt" stroke-dasharray="2.3 0.8 5.3 1.2 4.7 1.1 3.6 1.3 3.5 1.4" stroke-dashoffset="0.1"/>
<path d="M572.1 246.1 L572.4 247.8 L572.9 250.3 L573.4 252.9 L573.8 255.5 L574.3 258.0 L574.8 260.6 L575.3 263.2 L575.9 265.7 L576.6 268.2 L577.4 270.7 L578.1 273.2 L578.9 275.7 L579.6 278.3 L580.0 280.8 L580.2 283.5 L580.4 286.1 L580.7 288.7 L580.9 291.3 L581.1 293.9 L581.6 296.5 L582.1 299.0 L582.6 301.6 L583.0 304.1 L583.5 306.7 L584.0 309.3 L584.3 310.9" fill="none" stroke="#9c9c9c" stroke-width="4.8" stroke-linecap="round"/>
<path d="M572.1 246.1 L572.4 247.8 L572.9 250.3 L573.4 252.9 L573.8 255.5 L574.3 258.0 L574.8 260.6 L575.3 263.2 L575.9 265.7 L576.6 268.2 L577.4 270.7 L578.1 273.2 L578.9 275.7 L579.6 278.3 L580.0 280.8 L580.2 283.5 L580.4 286.1 L580.7 288.7 L580.9 291.3 L581.1 293.9 L581.6 296.5 L582.1 299.0 L582.6 301.6 L583.0 304.1 L583.5 306.7 L584.0 309.3 L584.3 310.9" fill="none" stroke="#121212" stroke-width="5.0" stroke-linecap="butt" stroke-dasharray="5.0 0.9 3.6 1.5 3.4 0.9 2.6 1.3 2.1 1.7" stroke-dashoffset="4.0"/>
<path d="M578.7 244.9 L579.0 246.5 L579.5 249.1 L580.0 251.7 L580.4 254.2 L580.9 256.8 L581.4 259.3 L581.9 261.9 L582.3 264.5 L582.5 267.1 L582.7 269.7 L582.9 272.3 L583.2 274.9 L583.4 277.5 L584.0 280.1 L584.7 282.6 L585.5 285.1 L586.2 287.6 L587.0 290.1 L587.7 292.6 L588.2 295.2 L588.7 297.8 L589.2 300.3 L589.6 302.9 L590.1 305.5 L590.6 308.0 L590.9 309.7" fill="none" stroke="#9c9c9c" stroke-width="4.8" stroke-linecap="round"/>
<path d="M578.7 244.9 L579.0 246.5 L579.5 249.1 L580.0 251.7 L580.4 254.2 L580.9 256.8 L581.4 259.3 L581.9 261.9 L582.3 264.5 L582.5 267.1 L582.7 269.7 L582.9 272.3 L583.2 274.9 L583.4 277.5 L584.0 280.1 L584.7 282.6 L585.5 285.1 L586.2 287.6 L587.0 290.1 L587.7 292.6 L588.2 295.2 L588.7 297.8 L589.2 300.3 L589.6 302.9 L590.1 305.5 L590.6 308.0 L590.9 309.7" fill="none" stroke="#121212" stroke-width="5.0" stroke-linecap="butt" stroke-dasharray="4.5 1.6 4.2 1.1 4.1 1.3 5.4 1.6 2.9 1.7" stroke-dashoffset="3.7"/>
<path d="M587.6 256.7 L589.4 256.4 L592.1 255.9 L594.9 255.4 L597.7 254.6 L600.3 253.5 L603.0 252.6 L605.9 252.7 L608.8 252.8 L611.6 252.5 L614.4 252.0 L616.2 251.7" fill="none" stroke="#9c9c9c" stroke-width="4.8" stroke-linecap="round"/>
<path d="M587.6 256.7 L589.4 256.4 L592.1 255.9 L594.9 255.4 L597.7 254.6 L600.3 253.5 L603.0 252.6 L605.9 252.7 L608.8 252.8 L611.6 252.5 L614.4 252.0 L616.2 251.7" fill="none" stroke="#121212" stroke-width="5.0" stroke-linecap="butt" stroke-dasharray="4.9 1.1 5.1 1.7 4.4 1.5 4.7 1.1 4.5 0.8" stroke-dashoffset="1.7"/>
<path d="M586.4 250.1 L588.2 249.8 L591.0 249.3 L593.8 248.8 L596.6 248.7 L599.5 248.8 L602.4 248.8 L605.0 247.6 L607.7 246.5 L610.5 245.9 L613.2 245.4 L615.0 245.1" fill="none" stroke="#9c9c9c" stroke-width="4.8" stroke-linecap="round"/>
<path d="M586.4 250.1 L588.2 249.8 L591.0 249.3 L593.8 248.8 L596.6 248.7 L599.5 248.8 L602.4 248.8 L605.0 247.6 L607.7 246.5 L610.5 245.9 L613.2 245.4 L615.0 245.1" fill="none" stroke="#121212" stroke-width="5.0" stroke-linecap="butt" stroke-dasharray="3.6 0.7 3.2 1.4 4.2 1.0 5.3 1.4 3.2 1.4" stroke-dashoffset="2.8"/>
<path d="M569.2 289.3 L570.9 289.2 L573.5 289.0 L576.1 288.8 L578.7 288.6 L581.2 288.1 L583.8 287.5 L586.4 286.9 L588.9 286.3 L591.6 286.3 L594.2 286.5 L596.8 286.7 L599.5 286.9 L602.1 286.8 L604.7 286.6 L607.3 286.4 L609.9 286.2 L612.5 286.0 L614.1 285.8" fill="none" stroke="#9c9c9c" stroke-width="4.8" stroke-linecap="round"/>
<path d="M569.2 289.3 L570.9 289.2 L573.5 289.0 L576.1 288.8 L578.7 288.6 L581.2 288.1 L583.8 287.5 L586.4 286.9 L588.9 286.3 L591.6 286.3 L594.2 286.5 L596.8 286.7 L599.5 286.9 L602.1 286.8 L604.7 286.6 L607.3 286.4 L609.9 286.2 L612.5 286.0 L614.1 285.8" fill="none" stroke="#121212" stroke-width="5.0" stroke-linecap="butt" stroke-dasharray="3.4 1.8 4.2 1.5 4.7 1.8 2.1 1.4 4.6 1.0" stroke-dashoffset="2.0"/>
<path d="M568.7 282.6 L570.3 282.4 L572.9 282.2 L575.5 282.0 L578.1 281.8 L580.8 281.9 L583.4 282.1 L586.0 282.3 L588.7 282.5 L591.2 282.1 L593.8 281.5 L596.4 280.9 L598.9 280.3 L601.5 280.0 L604.1 279.8 L606.7 279.6 L609.3 279.4 L611.9 279.2 L613.6 279.1" fill="none" stroke="#9c9c9c" stroke-width="4.8" stroke-linecap="round"/>
<path d="M568.7 282.6 L570.3 282.4 L572.9 282.2 L575.5 282.0 L578.1 281.8 L580.8 281.9 L583.4 282.1 L586.0 282.3 L588.7 282.5 L591.2 282.1 L593.8 281.5 L596.4 280.9 L598.9 280.3 L601.5 280.0 L604.1 279.8 L606.7 279.6 L609.3 279.4 L611.9 279.2 L613.6 279.1" fill="none" stroke="#121212" stroke-width="5.0" stroke-linecap="butt" stroke-dasharray="2.2 0.9 3.3 0.8 2.9 1.7 3.9 1.3 5.4 1.3" stroke-dashoffset="5.0"/>
<path d="M528.9 262.6 L530.4 263.6 L532.6 265.1 L534.9 266.6 L537.4 267.7 L540.0 268.7 L542.5 269.7 L544.4 271.8 L546.3 273.8 L548.4 275.6 L550.6 277.1 L552.9 278.6 L554.4 279.6" fill="none" stroke="#9c9c9c" stroke-width="5.3" stroke-linecap="round"/>
<path d="M528.9 262.6 L530.4 263.6 L532.6 265.1 L534.9 266.6 L537.4 267.7 L540.0 268.7 L542.5 269.7 L544.4 271.8 L546.3 273.8 L548.4 275.6 L550.6 277.1 L552.9 278.6 L554.4 279.6" fill="none" stroke="#121212" stroke-width="5.5" stroke-linecap="butt" stroke-dasharray="4.8 0.8 4.1 1.5 2.2 1.7 2.6 1.2 2.6 1.2" stroke-dashoffset="3.1"/>
<path d="M533.0 256.4 L534.5 257.4 L536.8 258.9 L539.0 260.4 L541.0 262.3 L542.9 264.3 L544.9 266.3 L547.5 267.2 L550.1 268.2 L552.5 269.4 L554.8 270.9 L557.0 272.4 L558.5 273.4" fill="none" stroke="#9c9c9c" stroke-width="5.3" stroke-linecap="round"/>
<path d="M533.0 256.4 L534.5 257.4 L536.8 258.9 L539.0 260.4 L541.0 262.3 L542.9 264.3 L544.9 266.3 L547.5 267.2 L550.1 268.2 L552.5 269.4 L554.8 270.9 L557.0 272.4 L558.5 273.4" fill="none" stroke="#121212" stroke-width="5.5" stroke-linecap="butt" stroke-dasharray="2.2 1.7 3.5 1.3 4.1 1.1 3.0 1.4 4.0 1.0" stroke-dashoffset="3.6"/>
<path d="M510.6 275.1 L511.9 276.2 L514.0 277.9 L516.1 279.6 L518.4 281.0 L520.7 282.4 L523.1 283.8 L525.4 285.2 L527.4 287.0 L529.3 289.0 L531.1 291.0 L532.9 293.0 L534.9 294.9 L537.0 296.6 L539.0 298.3 L541.1 300.0 L543.2 301.7 L545.3 303.5 L547.4 305.2 L548.7 306.3" fill="none" stroke="#9c9c9c" stroke-width="5.3" stroke-linecap="round"/>
<path d="M510.6 275.1 L511.9 276.2 L514.0 277.9 L516.1 279.6 L518.4 281.0 L520.7 282.4 L523.1 283.8 L525.4 285.2 L527.4 287.0 L529.3 289.0 L531.1 291.0 L532.9 293.0 L534.9 294.9 L537.0 296.6 L539.0 298.3 L541.1 300.0 L543.2 301.7 L545.3 303.5 L547.4 305.2 L548.7 306.3" fill="none" stroke="#121212" stroke-width="5.5" stroke-linecap="butt" stroke-dasharray="2.0 1.0 2.1 0.9 4.6 1.1 5.1 1.5 2.2 1.8" stroke-dashoffset="4.7"/>
<path d="M515.3 269.3 L516.6 270.4 L518.7 272.1 L520.8 273.9 L522.7 275.8 L524.5 277.8 L526.3 279.8 L528.2 281.8 L530.3 283.5 L532.7 284.9 L535.0 286.3 L537.3 287.7 L539.6 289.2 L541.6 290.9 L543.7 292.6 L545.8 294.3 L547.9 296.0 L550.0 297.7 L552.1 299.4 L553.4 300.5" fill="none" stroke="#9c9c9c" stroke-width="5.3" stroke-linecap="round"/>
<path d="M515.3 269.3 L516.6 270.4 L518.7 272.1 L520.8 273.9 L522.7 275.8 L524.5 277.8 L526.3 279.8 L528.2 281.8 L530.3 283.5 L532.7 284.9 L535.0 286.3 L537.3 287.7 L539.6 289.2 L541.6 290.9 L543.7 292.6 L545.8 294.3 L547.9 296.0 L550.0 297.7 L552.1 299.4 L553.4 300.5" fill="none" stroke="#121212" stroke-width="5.5" stroke-linecap="butt" stroke-dasharray="2.3 1.7 3.5 1.2 5.4 1.0 3.8 1.7 4.5 1.2" stroke-dashoffset="4.9"/>
<path d="M509.0 300.7 L510.4 301.6 L512.6 303.0 L514.7 304.4 L516.9 305.9 L519.1 307.3 L521.3 308.7 L523.6 309.8 L526.1 310.9 L528.5 311.9 L530.9 313.0 L533.0 314.5 L534.9 316.3 L536.9 318.1 L538.8 319.9 L540.9 321.5 L543.1 322.9 L545.2 324.3 L547.4 325.8 L548.8 326.7" fill="none" stroke="#9c9c9c" stroke-width="5.8" stroke-linecap="round"/>
<path d="M509.0 300.7 L510.4 301.6 L512.6 303.0 L514.7 304.4 L516.9 305.9 L519.1 307.3 L521.3 308.7 L523.6 309.8 L526.1 310.9 L528.5 311.9 L530.9 313.0 L533.0 314.5 L534.9 316.3 L536.9 318.1 L538.8 319.9 L540.9 321.5 L543.1 322.9 L545.2 324.3 L547.4 325.8 L548.8 326.7" fill="none" stroke="#121212" stroke-width="6.0" stroke-linecap="butt" stroke-dasharray="4.1 0.8 4.2 1.2 2.7 0.8 3.8 0.8 3.6 1.4" stroke-dashoffset="2.3"/>
<path d="M513.4 293.9 L514.8 294.8 L517.0 296.3 L519.1 297.7 L521.3 299.1 L523.5 300.5 L525.7 301.9 L527.7 303.7 L529.6 305.5 L531.5 307.2 L533.5 309.0 L535.7 310.3 L538.1 311.4 L540.6 312.5 L543.0 313.5 L545.3 314.7 L547.5 316.2 L549.6 317.6 L551.8 319.0 L553.2 319.9" fill="none" stroke="#9c9c9c" stroke-width="5.8" stroke-linecap="round"/>
<path d="M513.4 293.9 L514.8 294.8 L517.0 296.3 L519.1 297.7 L521.3 299.1 L523.5 300.5 L525.7 301.9 L527.7 303.7 L529.6 305.5 L531.5 307.2 L533.5 309.0 L535.7 310.3 L538.1 311.4 L540.6 312.5 L543.0 313.5 L545.3 314.7 L547.5 316.2 L549.6 317.6 L551.8 319.0 L553.2 319.9" fill="none" stroke="#121212" stroke-width="6.0" stroke-linecap="butt" stroke-dasharray="2.9 1.3 3.5 1.6 3.9 1.8 5.3 1.5 2.8 0.8" stroke-dashoffset="4.5"/>
<path d="M458.3 347.6 L459.8 346.9 L462.2 345.7 L464.6 344.5 L466.9 343.4 L469.3 342.2 L471.7 341.1 L474.0 339.9 L476.3 338.6 L478.5 337.1 L480.8 335.7 L483.0 334.3 L485.2 332.9 L487.6 331.8 L490.1 330.9 L492.6 330.0 L495.1 329.1 L497.6 328.3 L500.0 327.2 L502.4 326.0 L504.8 324.9 L507.1 323.7 L509.5 322.6 L511.0 321.8" fill="none" stroke="#9c9c9c" stroke-width="4.8" stroke-linecap="round"/>
<path d="M458.3 347.6 L459.8 346.9 L462.2 345.7 L464.6 344.5 L466.9 343.4 L469.3 342.2 L471.7 341.1 L474.0 339.9 L476.3 338.6 L478.5 337.1 L480.8 335.7 L483.0 334.3 L485.2 332.9 L487.6 331.8 L490.1 330.9 L492.6 330.0 L495.1 329.1 L497.6 328.3 L500.0 327.2 L502.4 326.0 L504.8 324.9 L507.1 323.7 L509.5 322.6 L511.0 321.8" fill="none" stroke="#121212" stroke-width="5.0" stroke-linecap="butt" stroke-dasharray="4.2 1.1 3.0 1.5 4.0 1.4 4.2 1.5 2.7 1.0" stroke-dashoffset="4.9"/>
<path d="M455.4 341.6 L456.9 340.8 L459.3 339.7 L461.6 338.5 L464.0 337.4 L466.4 336.2 L468.7 335.0 L471.1 333.9 L473.5 332.9 L476.0 332.0 L478.5 331.2 L481.0 330.3 L483.5 329.4 L485.8 328.1 L488.1 326.7 L490.3 325.3 L492.5 323.8 L494.8 322.4 L497.1 321.2 L499.5 320.0 L501.8 318.9 L504.2 317.7 L506.6 316.5 L508.1 315.8" fill="none" stroke="#9c9c9c" stroke-width="4.8" stroke-linecap="round"/>
<path d="M455.4 341.6 L456.9 340.8 L459.3 339.7 L461.6 338.5 L464.0 337.4 L466.4 336.2 L468.7 335.0 L471.1 333.9 L473.5 332.9 L476.0 332.0 L478.5 331.2 L481.0 330.3 L483.5 329.4 L485.8 328.1 L488.1 326.7 L490.3 325.3 L492.5 323.8 L494.8 322.4 L497.1 321.2 L499.5 320.0 L501.8 318.9 L504.2 317.7 L506.6 316.5 L508.1 315.8" fill="none" stroke="#121212" stroke-width="5.0" stroke-linecap="butt" stroke-dasharray="5.2 1.7 2.1 0.8 2.9 1.2 4.2 0.8 3.9 0.8" stroke-dashoffset="0.4"/>
<path d="M611.4 332.0 L613.1 331.5 L615.6 330.6 L618.1 329.6 L620.3 328.0 L622.6 326.5 L625.4 326.2 L628.1 325.9 L630.7 325.2 L633.2 324.3 L634.8 323.7" fill="none" stroke="#9c9c9c" stroke-width="4.8" stroke-linecap="round"/>
<path d="M611.4 332.0 L613.1 331.5 L615.6 330.6 L618.1 329.6 L620.3 328.0 L622.6 326.5 L625.4 326.2 L628.1 325.9 L630.7 325.2 L633.2 324.3 L634.8 323.7" fill="none" stroke="#121212" stroke-width="5.0" stroke-linecap="butt" stroke-dasharray="3.9 1.4 3.3 1.2 2.7 1.1 4.6 1.6 2.3 0.8" stroke-dashoffset="4.0"/>
<path d="M609.2 325.7 L610.8 325.1 L613.3 324.2 L615.9 323.4 L618.6 323.2 L621.4 322.9 L623.7 321.4 L626.0 319.9 L628.4 318.8 L630.9 317.9 L632.6 317.4" fill="none" stroke="#9c9c9c" stroke-width="4.8" stroke-linecap="round"/>
<path d="M609.2 325.7 L610.8 325.1 L613.3 324.2 L615.9 323.4 L618.6 323.2 L621.4 322.9 L623.7 321.4 L626.0 319.9 L628.4 318.8 L630.9 317.9 L632.6 317.4" fill="none" stroke="#121212" stroke-width="5.0" stroke-linecap="butt" stroke-dasharray="4.2 1.5 2.7 1.2 2.9 1.6 3.3 1.4 5.5 1.1" stroke-dashoffset="2.7"/>
<path d="M451.6 379.3 L452.8 380.6 L454.7 382.6 L457.2 384.1 L458.5 386.7 L460.0 389.0 L461.1 390.4" fill="none" stroke="#9c9c9c" stroke-width="3.8" stroke-linecap="round"/>
<path d="M451.6 379.3 L452.8 380.6 L454.7 382.6 L457.2 384.1 L458.5 386.7 L460.0 389.0 L461.1 390.4" fill="none" stroke="#121212" stroke-width="4.0" stroke-linecap="butt" stroke-dasharray="5.2 1.2 3.3 0.8 5.1 0.8 2.3 1.3 3.7 1.5" stroke-dashoffset="1.5"/>
<path d="M455.7 375.8 L456.8 377.2 L458.5 379.4 L459.6 382.1 L461.9 383.7 L464.0 385.6 L465.2 386.9" fill="none" stroke="#9c9c9c" stroke-width="3.8" stroke-linecap="round"/>
<path d="M455.7 375.8 L456.8 377.2 L458.5 379.4 L459.6 382.1 L461.9 383.7 L464.0 385.6 L465.2 386.9" fill="none" stroke="#121212" stroke-width="4.0" stroke-linecap="butt" stroke-dasharray="4.7 0.8 2.7 1.4 2.3 1.0 4.5 1.5 3.0 0.9" stroke-dashoffset="1.8"/>
<path d="M422.4 386.2 L421.4 387.7 L419.7 389.9 L418.1 392.2 L416.6 394.6 L415.5 397.2 L414.4 399.8 L412.4 401.9 L410.3 403.7 L408.2 405.7 L406.5 407.9 L404.9 410.2 L403.8 411.6" fill="none" stroke="#9c9c9c" stroke-width="5.3" stroke-linecap="round"/>
<path d="M422.4 386.2 L421.4 387.7 L419.7 389.9 L418.1 392.2 L416.6 394.6 L415.5 397.2 L414.4 399.8 L412.4 401.9 L410.3 403.7 L408.2 405.7 L406.5 407.9 L404.9 410.2 L403.8 411.6" fill="none" stroke="#121212" stroke-width="5.5" stroke-linecap="butt" stroke-dasharray="3.3 0.8 4.5 1.3 5.2 1.7 5.2 1.2 4.8 1.0" stroke-dashoffset="1.6"/>
<path d="M428.4 390.6 L427.3 392.0 L425.7 394.3 L424.0 396.5 L422.2 398.6 L420.0 400.5 L417.8 402.4 L416.5 404.8 L415.3 407.5 L414.1 410.0 L412.5 412.3 L410.8 414.5 L409.8 416.0" fill="none" stroke="#9c9c9c" stroke-width="5.3" stroke-linecap="round"/>
<path d="M428.4 390.6 L427.3 392.0 L425.7 394.3 L424.0 396.5 L422.2 398.6 L420.0 400.5 L417.8 402.4 L416.5 404.8 L415.3 407.5 L414.1 410.0 L412.5 412.3 L410.8 414.5 L409.8 416.0" fill="none" stroke="#121212" stroke-width="5.5" stroke-linecap="butt" stroke-dasharray="3.4 1.7 5.1 1.0 3.3 1.1 3.3 1.1 3.4 0.9" stroke-dashoffset="2.8"/>
<path d="M385.9 422.3 L387.6 422.9 L390.1 423.8 L392.7 424.7 L395.2 425.6 L397.7 426.5 L400.3 427.4 L402.8 428.3 L405.5 428.9 L408.1 429.4 L410.8 429.9 L413.5 430.5 L416.1 431.1 L418.5 432.4 L420.9 433.6 L423.3 434.9 L425.7 436.2 L428.2 437.3 L430.7 438.2 L433.2 439.1 L435.8 440.0 L438.3 440.9 L440.0 441.5" fill="none" stroke="#9c9c9c" stroke-width="5.8" stroke-linecap="round"/>
<path d="M385.9 422.3 L387.6 422.9 L390.1 423.8 L392.7 424.7 L395.2 425.6 L397.7 426.5 L400.3 427.4 L402.8 428.3 L405.5 428.9 L408.1 429.4 L410.8 429.9 L413.5 430.5 L416.1 431.1 L418.5 432.4 L420.9 433.6 L423.3 434.9 L425.7 436.2 L428.2 437.3 L430.7 438.2 L433.2 439.1 L435.8 440.0 L438.3 440.9 L440.0 441.5" fill="none" stroke="#121212" stroke-width="6.0" stroke-linecap="butt" stroke-dasharray="3.9 1.6 4.0 0.9 4.7 1.7 3.0 0.7 3.8 1.3" stroke-dashoffset="2.8"/>
<path d="M388.6 414.7 L390.3 415.3 L392.8 416.2 L395.4 417.1 L397.9 418.0 L400.4 418.9 L403.0 419.8 L405.5 420.7 L407.9 421.9 L410.3 423.2 L412.7 424.5 L415.1 425.7 L417.6 426.9 L420.3 427.4 L422.9 428.0 L425.6 428.5 L428.2 429.0 L430.9 429.7 L433.4 430.6 L435.9 431.5 L438.5 432.4 L441.0 433.3 L442.7 433.9" fill="none" stroke="#9c9c9c" stroke-width="5.8" stroke-linecap="round"/>
<path d="M388.6 414.7 L390.3 415.3 L392.8 416.2 L395.4 417.1 L397.9 418.0 L400.4 418.9 L403.0 419.8 L405.5 420.7 L407.9 421.9 L410.3 423.2 L412.7 424.5 L415.1 425.7 L417.6 426.9 L420.3 427.4 L422.9 428.0 L425.6 428.5 L428.2 429.0 L430.9 429.7 L433.4 430.6 L435.9 431.5 L438.5 432.4 L441.0 433.3 L442.7 433.9" fill="none" stroke="#121212" stroke-width="6.0" stroke-linecap="butt" stroke-dasharray="5.4 1.4 4.8 0.8 3.9 1.6 2.3 0.8 4.6 1.7" stroke-dashoffset="0.4"/>
<path d="M367.1 436.2 L368.6 437.2 L370.8 438.6 L373.0 440.1 L375.3 441.6 L377.5 443.1 L379.7 444.6 L381.9 446.1 L384.3 447.4 L386.7 448.6 L389.0 449.9 L391.4 451.2 L393.3 451.9 L394.2 453.6 L394.9 456.1 L395.4 458.7 L396.0 461.3 L396.6 464.0 L397.2 466.6 L397.8 469.2 L398.6 471.8 L399.4 474.3 L400.3 476.9 L401.1 479.4 L402.0 481.9 L402.8 484.5 L403.6 487.0 L404.2 488.7" fill="none" stroke="#9c9c9c" stroke-width="5.3" stroke-linecap="round"/>
<path d="M367.1 436.2 L368.6 437.2 L370.8 438.6 L373.0 440.1 L375.3 441.6 L377.5 443.1 L379.7 444.6 L381.9 446.1 L384.3 447.4 L386.7 448.6 L389.0 449.9 L391.4 451.2 L393.3 451.9 L394.2 453.6 L394.9 456.1 L395.4 458.7 L396.0 461.3 L396.6 464.0 L397.2 466.6 L397.8 469.2 L398.6 471.8 L399.4 474.3 L400.3 476.9 L401.1 479.4 L402.0 481.9 L402.8 484.5 L403.6 487.0 L404.2 488.7" fill="none" stroke="#121212" stroke-width="5.5" stroke-linecap="butt" stroke-dasharray="2.5 1.5 4.3 1.0 2.8 1.5 3.8 1.5 3.4 1.1" stroke-dashoffset="4.8"/>
<path d="M371.2 430.0 L372.7 431.0 L374.9 432.5 L377.1 434.0 L379.4 435.5 L381.6 437.0 L383.8 438.4 L386.0 439.9 L388.2 441.6 L390.2 443.3 L392.3 445.0 L394.4 446.7 L397.0 448.9 L398.1 452.1 L399.1 454.7 L400.2 457.1 L401.3 459.6 L402.5 462.0 L403.6 464.5 L404.7 466.9 L405.6 469.4 L406.4 472.0 L407.3 474.5 L408.1 477.1 L409.0 479.6 L409.8 482.2 L410.7 484.7 L411.2 486.3" fill="none" stroke="#9c9c9c" stroke-width="5.3" stroke-linecap="round"/>
<path d="M371.2 430.0 L372.7 431.0 L374.9 432.5 L377.1 434.0 L379.4 435.5 L381.6 437.0 L383.8 438.4 L386.0 439.9 L388.2 441.6 L390.2 443.3 L392.3 445.0 L394.4 446.7 L397.0 448.9 L398.1 452.1 L399.1 454.7 L400.2 457.1 L401.3 459.6 L402.5 462.0 L403.6 464.5 L404.7 466.9 L405.6 469.4 L406.4 472.0 L407.3 474.5 L408.1 477.1 L409.0 479.6 L409.8 482.2 L410.7 484.7 L411.2 486.3" fill="none" stroke="#121212" stroke-width="5.5" stroke-linecap="butt" stroke-dasharray="4.4 1.2 3.9 1.5 4.5 1.7 3.4 1.6 4.3 1.6" stroke-dashoffset="4.0"/>
<path d="M413.6 461.6 L415.2 461.9 L417.8 462.5 L420.4 463.0 L423.0 463.5 L425.6 463.8 L428.2 463.8 L430.9 463.8 L433.5 464.1 L436.0 465.1 L438.5 466.2 L441.0 467.1 L443.5 467.6 L446.1 468.1 L447.8 468.4" fill="none" stroke="#9c9c9c" stroke-width="5.3" stroke-linecap="round"/>
<path d="M413.6 461.6 L415.2 461.9 L417.8 462.5 L420.4 463.0 L423.0 463.5 L425.6 463.8 L428.2 463.8 L430.9 463.8 L433.5 464.1 L436.0 465.1 L438.5 466.2 L441.0 467.1 L443.5 467.6 L446.1 468.1 L447.8 468.4" fill="none" stroke="#121212" stroke-width="5.5" stroke-linecap="butt" stroke-dasharray="5.1 1.8 4.2 1.3 4.5 1.6 3.5 1.2 2.5 1.5" stroke-dashoffset="5.0"/>
<path d="M415.0 454.4 L416.7 454.7 L419.3 455.2 L421.8 455.7 L424.4 456.2 L426.9 456.9 L429.4 458.0 L431.9 459.0 L434.4 459.8 L437.1 459.7 L439.8 459.7 L442.4 459.8 L445.0 460.3 L447.6 460.9 L449.2 461.2" fill="none" stroke="#9c9c9c" stroke-width="5.3" stroke-linecap="round"/>
<path d="M415.0 454.4 L416.7 454.7 L419.3 455.2 L421.8 455.7 L424.4 456.2 L426.9 456.9 L429.4 458.0 L431.9 459.0 L434.4 459.8 L437.1 459.7 L439.8 459.7 L442.4 459.8 L445.0 460.3 L447.6 460.9 L449.2 461.2" fill="none" stroke="#121212" stroke-width="5.5" stroke-linecap="butt" stroke-dasharray="3.3 0.9 2.7 1.2 3.0 1.8 2.2 1.0 2.4 1.4" stroke-dashoffset="3.9"/>
<path d="M441.3 404.7 L442.1 406.1 L443.5 408.4 L444.8 410.7 L446.2 412.9 L447.8 415.0 L449.3 417.1 L450.9 419.3 L452.5 421.4 L454.0 423.5 L455.4 425.8 L456.5 428.2 L457.6 430.6 L458.6 433.0 L459.7 435.4 L460.8 437.8 L462.0 440.1 L463.4 442.4 L464.7 444.7 L466.0 446.9 L467.3 449.2 L468.7 451.5 L470.0 453.7 L471.3 456.0 L472.6 458.3 L474.0 460.5 L475.3 462.8 L476.1 464.3" fill="none" stroke="#9c9c9c" stroke-width="5.3" stroke-linecap="round"/>
<path d="M441.3 404.7 L442.1 406.1 L443.5 408.4 L444.8 410.7 L446.2 412.9 L447.8 415.0 L449.3 417.1 L450.9 419.3 L452.5 421.4 L454.0 423.5 L455.4 425.8 L456.5 428.2 L457.6 430.6 L458.6 433.0 L459.7 435.4 L460.8 437.8 L462.0 440.1 L463.4 442.4 L464.7 444.7 L466.0 446.9 L467.3 449.2 L468.7 451.5 L470.0 453.7 L471.3 456.0 L472.6 458.3 L474.0 460.5 L475.3 462.8 L476.1 464.3" fill="none" stroke="#121212" stroke-width="5.5" stroke-linecap="butt" stroke-dasharray="2.2 1.2 4.0 1.7 2.1 0.8 2.6 0.9 2.8 1.5" stroke-dashoffset="3.0"/>
<path d="M447.7 400.9 L448.5 402.4 L449.8 404.7 L451.2 406.9 L452.4 409.3 L453.5 411.7 L454.6 414.1 L455.7 416.5 L456.7 418.9 L457.8 421.3 L459.1 423.6 L460.7 425.7 L462.3 427.8 L463.8 430.0 L465.4 432.1 L467.0 434.2 L468.4 436.4 L469.7 438.7 L471.1 440.9 L472.4 443.2 L473.7 445.5 L475.0 447.7 L476.4 450.0 L477.7 452.3 L479.0 454.5 L480.3 456.8 L481.7 459.1 L482.5 460.5" fill="none" stroke="#9c9c9c" stroke-width="5.3" stroke-linecap="round"/>
<path d="M447.7 400.9 L448.5 402.4 L449.8 404.7 L451.2 406.9 L452.4 409.3 L453.5 411.7 L454.6 414.1 L455.7 416.5 L456.7 418.9 L457.8 421.3 L459.1 423.6 L460.7 425.7 L462.3 427.8 L463.8 430.0 L465.4 432.1 L467.0 434.2 L468.4 436.4 L469.7 438.7 L471.1 440.9 L472.4 443.2 L473.7 445.5 L475.0 447.7 L476.4 450.0 L477.7 452.3 L479.0 454.5 L480.3 456.8 L481.7 459.1 L482.5 460.5" fill="none" stroke="#121212" stroke-width="5.5" stroke-linecap="butt" stroke-dasharray="2.8 0.9 3.0 0.9 4.7 1.0 3.9 1.6 3.7 1.0" stroke-dashoffset="4.4"/>
<path d="M522.7 348.2 L524.5 348.0 L527.2 347.6 L529.9 347.2 L532.6 346.8 L535.3 346.4 L538.0 346.0 L540.6 345.3 L543.3 344.5 L545.9 343.6 L548.5 342.7 L551.3 342.5 L554.0 342.5 L556.8 342.6 L559.6 342.7 L562.3 342.4 L565.0 342.0 L567.7 341.6 L569.4 341.3" fill="none" stroke="#9c9c9c" stroke-width="5.8" stroke-linecap="round"/>
<path d="M522.7 348.2 L524.5 348.0 L527.2 347.6 L529.9 347.2 L532.6 346.8 L535.3 346.4 L538.0 346.0 L540.6 345.3 L543.3 344.5 L545.9 343.6 L548.5 342.7 L551.3 342.5 L554.0 342.5 L556.8 342.6 L559.6 342.7 L562.3 342.4 L565.0 342.0 L567.7 341.6 L569.4 341.3" fill="none" stroke="#121212" stroke-width="6.0" stroke-linecap="butt" stroke-dasharray="3.2 1.3 5.3 1.2 2.8 0.8 5.3 1.6 3.3 1.3" stroke-dashoffset="2.6"/>
<path d="M521.6 340.3 L523.3 340.0 L526.0 339.6 L528.7 339.2 L531.4 338.8 L534.1 338.4 L536.8 338.0 L539.6 337.9 L542.3 337.9 L545.1 338.0 L547.9 338.1 L550.5 337.5 L553.2 336.7 L555.8 335.8 L558.4 334.9 L561.1 334.4 L563.8 334.0 L566.5 333.6 L568.3 333.4" fill="none" stroke="#9c9c9c" stroke-width="5.8" stroke-linecap="round"/>
<path d="M521.6 340.3 L523.3 340.0 L526.0 339.6 L528.7 339.2 L531.4 338.8 L534.1 338.4 L536.8 338.0 L539.6 337.9 L542.3 337.9 L545.1 338.0 L547.9 338.1 L550.5 337.5 L553.2 336.7 L555.8 335.8 L558.4 334.9 L561.1 334.4 L563.8 334.0 L566.5 333.6 L568.3 333.4" fill="none" stroke="#121212" stroke-width="6.0" stroke-linecap="butt" stroke-dasharray="3.0 1.8 4.3 1.0 2.0 1.2 3.3 1.6 4.5 1.4" stroke-dashoffset="0.8"/>
<path d="M491.3 360.7 L493.1 360.8 L496.0 360.0 L498.8 360.4 L501.6 361.7 L504.4 362.0 L507.2 362.2 L509.1 362.4" fill="none" stroke="#9c9c9c" stroke-width="5.3" stroke-linecap="round"/>
<path d="M491.3 360.7 L493.1 360.8 L496.0 360.0 L498.8 360.4 L501.6 361.7 L504.4 362.0 L507.2 362.2 L509.1 362.4" fill="none" stroke="#121212" stroke-width="5.5" stroke-linecap="butt" stroke-dasharray="3.1 1.0 5.0 1.3 4.2 1.8 2.9 1.3 2.5 1.5" stroke-dashoffset="0.0"/>
<path d="M491.9 353.5 L493.8 353.7 L496.5 355.0 L499.3 355.1 L502.2 354.3 L505.1 354.6 L507.9 354.9 L509.7 355.0" fill="none" stroke="#9c9c9c" stroke-width="5.3" stroke-linecap="round"/>
<path d="M491.9 353.5 L493.8 353.7 L496.5 355.0 L499.3 355.1 L502.2 354.3 L505.1 354.6 L507.9 354.9 L509.7 355.0" fill="none" stroke="#121212" stroke-width="5.5" stroke-linecap="butt" stroke-dasharray="4.9 1.6 4.9 0.8 2.9 1.5 2.3 1.2 3.6 1.8" stroke-dashoffset="2.9"/>
<path d="M528.0 367.4 L529.9 367.2 L532.7 366.4 L535.5 365.2 L538.5 366.1 L540.4 365.9" fill="none" stroke="#9c9c9c" stroke-width="4.8" stroke-linecap="round"/>
<path d="M528.0 367.4 L529.9 367.2 L532.7 366.4 L535.5 365.2 L538.5 366.1 L540.4 365.9" fill="none" stroke="#121212" stroke-width="5.0" stroke-linecap="butt" stroke-dasharray="3.1 1.6 3.5 1.7 2.3 1.6 2.7 1.3 3.8 0.9" stroke-dashoffset="4.2"/>
<path d="M527.2 360.7 L529.1 360.5 L532.0 360.6 L535.0 361.0 L537.7 359.4 L539.6 359.2" fill="none" stroke="#9c9c9c" stroke-width="4.8" stroke-linecap="round"/>
<path d="M527.2 360.7 L529.1 360.5 L532.0 360.6 L535.0 361.0 L537.7 359.4 L539.6 359.2" fill="none" stroke="#121212" stroke-width="5.0" stroke-linecap="butt" stroke-dasharray="3.1 1.0 2.3 1.0 3.6 1.5 3.3 1.5 2.4 1.1" stroke-dashoffset="2.3"/>
<path d="M582.4 338.8 L581.2 340.0 L579.4 342.0 L577.6 343.9 L575.8 345.9 L574.0 347.9 L572.2 349.8 L570.4 351.8 L568.6 353.7 L567.0 355.8 L565.4 358.0 L563.9 360.2 L562.4 362.4 L560.8 364.6 L559.1 366.6 L557.0 368.3 L554.9 370.0 L552.9 371.7 L550.8 373.4 L548.8 375.2 L547.0 377.2 L545.2 379.2 L543.4 381.1 L542.3 382.4" fill="none" stroke="#9c9c9c" stroke-width="5.8" stroke-linecap="round"/>
<path d="M582.4 338.8 L581.2 340.0 L579.4 342.0 L577.6 343.9 L575.8 345.9 L574.0 347.9 L572.2 349.8 L570.4 351.8 L568.6 353.7 L567.0 355.8 L565.4 358.0 L563.9 360.2 L562.4 362.4 L560.8 364.6 L559.1 366.6 L557.0 368.3 L554.9 370.0 L552.9 371.7 L550.8 373.4 L548.8 375.2 L547.0 377.2 L545.2 379.2 L543.4 381.1 L542.3 382.4" fill="none" stroke="#121212" stroke-width="6.0" stroke-linecap="butt" stroke-dasharray="4.9 1.4 2.0 1.1 4.5 1.0 4.0 1.2 2.0 1.8" stroke-dashoffset="4.0"/>
<path d="M588.3 344.2 L587.2 345.5 L585.4 347.4 L583.6 349.4 L581.8 351.4 L580.0 353.3 L578.2 355.3 L576.4 357.2 L574.6 359.2 L572.6 361.0 L570.6 362.7 L568.5 364.4 L566.4 366.2 L564.4 367.9 L562.5 369.8 L561.0 372.0 L559.5 374.2 L557.9 376.4 L556.4 378.6 L554.8 380.7 L553.0 382.7 L551.2 384.6 L549.4 386.6 L548.2 387.8" fill="none" stroke="#9c9c9c" stroke-width="5.8" stroke-linecap="round"/>
<path d="M588.3 344.2 L587.2 345.5 L585.4 347.4 L583.6 349.4 L581.8 351.4 L580.0 353.3 L578.2 355.3 L576.4 357.2 L574.6 359.2 L572.6 361.0 L570.6 362.7 L568.5 364.4 L566.4 366.2 L564.4 367.9 L562.5 369.8 L561.0 372.0 L559.5 374.2 L557.9 376.4 L556.4 378.6 L554.8 380.7 L553.0 382.7 L551.2 384.6 L549.4 386.6 L548.2 387.8" fill="none" stroke="#121212" stroke-width="6.0" stroke-linecap="butt" stroke-dasharray="2.7 1.4 3.0 1.1 3.9 1.0 3.2 1.1 4.3 1.0" stroke-dashoffset="1.0"/>
<path d="M611.3 354.2 L610.0 355.2 L608.0 356.9 L606.0 358.5 L603.9 360.2 L601.9 361.8 L599.8 363.5 L597.8 365.1 L596.0 367.1 L594.3 369.0 L592.5 371.0 L590.7 372.9 L588.9 374.8 L586.6 376.2 L584.3 377.5 L582.0 378.9 L579.7 380.2 L577.5 381.5 L575.4 383.2 L573.4 384.8 L571.4 386.5 L569.3 388.1 L567.3 389.8 L566.0 390.8" fill="none" stroke="#9c9c9c" stroke-width="6.2" stroke-linecap="round"/>
<path d="M611.3 354.2 L610.0 355.2 L608.0 356.9 L606.0 358.5 L603.9 360.2 L601.9 361.8 L599.8 363.5 L597.8 365.1 L596.0 367.1 L594.3 369.0 L592.5 371.0 L590.7 372.9 L588.9 374.8 L586.6 376.2 L584.3 377.5 L582.0 378.9 L579.7 380.2 L577.5 381.5 L575.4 383.2 L573.4 384.8 L571.4 386.5 L569.3 388.1 L567.3 389.8 L566.0 390.8" fill="none" stroke="#121212" stroke-width="6.6" stroke-linecap="butt" stroke-dasharray="3.2 1.7 4.0 1.5 3.2 1.6 2.3 0.9 2.3 1.4" stroke-dashoffset="3.5"/>
<path d="M616.8 361.0 L615.5 362.0 L613.5 363.7 L611.4 365.3 L609.4 367.0 L607.4 368.6 L605.3 370.3 L603.3 371.9 L601.0 373.2 L598.7 374.6 L596.4 375.9 L594.2 377.2 L591.9 378.6 L590.1 380.6 L588.3 382.5 L586.5 384.4 L584.7 386.4 L583.0 388.3 L580.9 390.0 L578.9 391.6 L576.8 393.3 L574.8 394.9 L572.8 396.6 L571.5 397.6" fill="none" stroke="#9c9c9c" stroke-width="6.2" stroke-linecap="round"/>
<path d="M616.8 361.0 L615.5 362.0 L613.5 363.7 L611.4 365.3 L609.4 367.0 L607.4 368.6 L605.3 370.3 L603.3 371.9 L601.0 373.2 L598.7 374.6 L596.4 375.9 L594.2 377.2 L591.9 378.6 L590.1 380.6 L588.3 382.5 L586.5 384.4 L584.7 386.4 L583.0 388.3 L580.9 390.0 L578.9 391.6 L576.8 393.3 L574.8 394.9 L572.8 396.6 L571.5 397.6" fill="none" stroke="#121212" stroke-width="6.6" stroke-linecap="butt" stroke-dasharray="2.6 1.1 4.9 1.4 2.3 0.9 2.5 0.8 3.4 0.8" stroke-dashoffset="4.6"/>
<path d="M476.1 376.8 L476.4 378.4 L477.0 381.0 L477.5 383.6 L478.4 386.1 L479.5 388.6 L480.6 391.1 L481.5 393.6 L481.6 396.3 L481.6 399.0 L481.7 401.7 L482.0 404.3 L482.6 406.9 L483.2 409.5 L483.7 412.1 L484.3 414.7 L484.7 416.4" fill="none" stroke="#9c9c9c" stroke-width="5.8" stroke-linecap="round"/>
<path d="M476.1 376.8 L476.4 378.4 L477.0 381.0 L477.5 383.6 L478.4 386.1 L479.5 388.6 L480.6 391.1 L481.5 393.6 L481.6 396.3 L481.6 399.0 L481.7 401.7 L482.0 404.3 L482.6 406.9 L483.2 409.5 L483.7 412.1 L484.3 414.7 L484.7 416.4" fill="none" stroke="#121212" stroke-width="6.0" stroke-linecap="butt" stroke-dasharray="3.8 1.4 4.7 1.6 3.4 1.1 3.4 0.7 3.4 1.5" stroke-dashoffset="4.9"/>
<path d="M483.9 375.0 L484.3 376.7 L484.9 379.3 L485.4 381.9 L485.7 384.6 L485.7 387.3 L485.8 390.0 L486.0 392.6 L487.0 395.1 L488.1 397.6 L489.2 400.1 L489.9 402.6 L490.5 405.2 L491.1 407.8 L491.6 410.4 L492.2 413.0 L492.5 414.6" fill="none" stroke="#9c9c9c" stroke-width="5.8" stroke-linecap="round"/>
<path d="M483.9 375.0 L484.3 376.7 L484.9 379.3 L485.4 381.9 L485.7 384.6 L485.7 387.3 L485.8 390.0 L486.0 392.6 L487.0 395.1 L488.1 397.6 L489.2 400.1 L489.9 402.6 L490.5 405.2 L491.1 407.8 L491.6 410.4 L492.2 413.0 L492.5 414.6" fill="none" stroke="#121212" stroke-width="6.0" stroke-linecap="butt" stroke-dasharray="4.8 1.4 4.1 0.7 3.2 1.1 4.3 0.8 3.3 1.3" stroke-dashoffset="3.9"/>
<path d="M519.6 394.8 L518.5 396.1 L516.7 398.1 L514.9 400.1 L513.5 402.4 L512.2 404.9 L510.4 406.8 L508.0 408.3 L505.9 410.0 L504.1 411.9 L502.9 413.2" fill="none" stroke="#9c9c9c" stroke-width="5.3" stroke-linecap="round"/>
<path d="M519.6 394.8 L518.5 396.1 L516.7 398.1 L514.9 400.1 L513.5 402.4 L512.2 404.9 L510.4 406.8 L508.0 408.3 L505.9 410.0 L504.1 411.9 L502.9 413.2" fill="none" stroke="#121212" stroke-width="5.5" stroke-linecap="butt" stroke-dasharray="4.1 0.9 4.7 1.7 3.9 1.1 3.8 0.9 4.5 1.8" stroke-dashoffset="2.6"/>
<path d="M525.1 399.8 L523.9 401.1 L522.1 403.0 L520.3 405.0 L518.1 406.6 L515.8 408.1 L514.0 410.1 L512.8 412.6 L511.3 414.9 L509.5 416.9 L508.4 418.2" fill="none" stroke="#9c9c9c" stroke-width="5.3" stroke-linecap="round"/>
<path d="M525.1 399.8 L523.9 401.1 L522.1 403.0 L520.3 405.0 L518.1 406.6 L515.8 408.1 L514.0 410.1 L512.8 412.6 L511.3 414.9 L509.5 416.9 L508.4 418.2" fill="none" stroke="#121212" stroke-width="5.5" stroke-linecap="butt" stroke-dasharray="4.5 1.6 2.7 1.7 4.2 0.9 2.3 1.0 4.0 1.5" stroke-dashoffset="1.6"/>
<path d="M532.8 415.3 L534.4 416.1 L536.8 417.3 L539.2 418.4 L541.7 419.6 L544.1 420.8 L546.5 421.9 L549.2 422.7 L551.8 423.4 L554.5 424.0 L557.1 424.9 L559.3 426.5 L561.5 428.2 L563.7 429.8 L566.0 431.2 L568.4 432.4 L570.9 433.6 L572.5 434.3" fill="none" stroke="#9c9c9c" stroke-width="6.2" stroke-linecap="round"/>
<path d="M532.8 415.3 L534.4 416.1 L536.8 417.3 L539.2 418.4 L541.7 419.6 L544.1 420.8 L546.5 421.9 L549.2 422.7 L551.8 423.4 L554.5 424.0 L557.1 424.9 L559.3 426.5 L561.5 428.2 L563.7 429.8 L566.0 431.2 L568.4 432.4 L570.9 433.6 L572.5 434.3" fill="none" stroke="#121212" stroke-width="6.6" stroke-linecap="butt" stroke-dasharray="3.3 1.2 2.4 1.8 2.5 1.7 3.9 1.3 4.0 1.0" stroke-dashoffset="4.5"/>
<path d="M536.5 407.5 L538.1 408.2 L540.6 409.4 L543.0 410.6 L545.4 411.7 L547.9 412.9 L550.3 414.0 L552.5 415.6 L554.7 417.3 L556.9 418.9 L559.2 420.4 L561.9 421.1 L564.6 421.8 L567.2 422.5 L569.8 423.4 L572.2 424.5 L574.6 425.7 L576.2 426.5" fill="none" stroke="#9c9c9c" stroke-width="6.2" stroke-linecap="round"/>
<path d="M536.5 407.5 L538.1 408.2 L540.6 409.4 L543.0 410.6 L545.4 411.7 L547.9 412.9 L550.3 414.0 L552.5 415.6 L554.7 417.3 L556.9 418.9 L559.2 420.4 L561.9 421.1 L564.6 421.8 L567.2 422.5 L569.8 423.4 L572.2 424.5 L574.6 425.7 L576.2 426.5" fill="none" stroke="#121212" stroke-width="6.6" stroke-linecap="butt" stroke-dasharray="5.5 1.6 4.1 0.8 4.9 1.0 5.1 1.0 4.0 1.6" stroke-dashoffset="0.9"/>
<path d="M586.3 402.2 L586.9 403.9 L587.7 406.5 L589.1 408.9 L590.7 411.2 L591.0 414.0 L591.0 416.8 L591.7 419.5 L592.5 422.1 L593.0 423.8" fill="none" stroke="#9c9c9c" stroke-width="5.3" stroke-linecap="round"/>
<path d="M586.3 402.2 L586.9 403.9 L587.7 406.5 L589.1 408.9 L590.7 411.2 L591.0 414.0 L591.0 416.8 L591.7 419.5 L592.5 422.1 L593.0 423.8" fill="none" stroke="#121212" stroke-width="5.5" stroke-linecap="butt" stroke-dasharray="2.3 0.7 2.6 1.8 5.3 1.4 3.1 1.4 4.6 1.1" stroke-dashoffset="3.0"/>
<path d="M593.4 400.0 L593.9 401.7 L594.7 404.3 L594.9 407.1 L594.9 410.0 L596.2 412.4 L597.8 414.8 L598.7 417.3 L599.5 419.9 L600.1 421.6" fill="none" stroke="#9c9c9c" stroke-width="5.3" stroke-linecap="round"/>
<path d="M593.4 400.0 L593.9 401.7 L594.7 404.3 L594.9 407.1 L594.9 410.0 L596.2 412.4 L597.8 414.8 L598.7 417.3 L599.5 419.9 L600.1 421.6" fill="none" stroke="#121212" stroke-width="5.5" stroke-linecap="butt" stroke-dasharray="4.8 0.7 2.7 1.2 2.5 1.1 4.0 0.9 3.8 1.0" stroke-dashoffset="2.8"/>
<path d="M530.8 441.6 L532.2 442.5 L534.6 443.6 L537.2 444.3 L539.5 445.6 L541.3 447.7 L543.2 449.5 L545.4 450.9 L547.6 452.3 L549.0 453.2" fill="none" stroke="#9c9c9c" stroke-width="5.3" stroke-linecap="round"/>
<path d="M530.8 441.6 L532.2 442.5 L534.6 443.6 L537.2 444.3 L539.5 445.6 L541.3 447.7 L543.2 449.5 L545.4 450.9 L547.6 452.3 L549.0 453.2" fill="none" stroke="#121212" stroke-width="5.5" stroke-linecap="butt" stroke-dasharray="4.2 0.7 4.3 0.9 5.4 1.4 3.6 1.2 4.2 1.5" stroke-dashoffset="3.8"/>
<path d="M534.8 435.4 L536.2 436.3 L538.2 438.0 L540.0 440.1 L542.1 441.6 L544.7 442.3 L547.2 443.3 L549.4 444.7 L551.6 446.1 L553.0 447.0" fill="none" stroke="#9c9c9c" stroke-width="5.3" stroke-linecap="round"/>
<path d="M534.8 435.4 L536.2 436.3 L538.2 438.0 L540.0 440.1 L542.1 441.6 L544.7 442.3 L547.2 443.3 L549.4 444.7 L551.6 446.1 L553.0 447.0" fill="none" stroke="#121212" stroke-width="5.5" stroke-linecap="butt" stroke-dasharray="4.6 1.2 5.5 1.6 5.0 1.1 3.5 1.3 5.2 1.3" stroke-dashoffset="2.6"/>
<path d="M523.5 460.5 L522.1 461.5 L520.0 463.0 L517.8 464.6 L515.7 466.1 L513.7 467.8 L511.8 469.7 L509.8 471.6 L507.9 473.4 L506.0 475.3 L503.7 476.5 L501.3 477.7 L498.9 479.0 L496.5 480.2 L494.2 481.5 L492.1 483.1 L490.0 484.6 L487.8 486.2 L485.7 487.7 L483.5 489.2 L481.4 490.8 L480.0 491.8" fill="none" stroke="#9c9c9c" stroke-width="5.8" stroke-linecap="round"/>
<path d="M523.5 460.5 L522.1 461.5 L520.0 463.0 L517.8 464.6 L515.7 466.1 L513.7 467.8 L511.8 469.7 L509.8 471.6 L507.9 473.4 L506.0 475.3 L503.7 476.5 L501.3 477.7 L498.9 479.0 L496.5 480.2 L494.2 481.5 L492.1 483.1 L490.0 484.6 L487.8 486.2 L485.7 487.7 L483.5 489.2 L481.4 490.8 L480.0 491.8" fill="none" stroke="#121212" stroke-width="6.0" stroke-linecap="butt" stroke-dasharray="5.2 1.1 2.2 1.5 5.2 1.5 4.1 1.5 3.1 1.4" stroke-dashoffset="0.3"/>
<path d="M528.2 467.0 L526.8 468.0 L524.7 469.6 L522.5 471.1 L520.4 472.6 L518.1 474.0 L515.7 475.2 L513.4 476.4 L511.0 477.7 L508.6 478.9 L506.7 480.7 L504.8 482.6 L502.9 484.5 L501.0 486.3 L499.0 488.1 L496.8 489.6 L494.7 491.2 L492.5 492.7 L490.4 494.2 L488.2 495.8 L486.1 497.3 L484.7 498.3" fill="none" stroke="#9c9c9c" stroke-width="5.8" stroke-linecap="round"/>
<path d="M528.2 467.0 L526.8 468.0 L524.7 469.6 L522.5 471.1 L520.4 472.6 L518.1 474.0 L515.7 475.2 L513.4 476.4 L511.0 477.7 L508.6 478.9 L506.7 480.7 L504.8 482.6 L502.9 484.5 L501.0 486.3 L499.0 488.1 L496.8 489.6 L494.7 491.2 L492.5 492.7 L490.4 494.2 L488.2 495.8 L486.1 497.3 L484.7 498.3" fill="none" stroke="#121212" stroke-width="6.0" stroke-linecap="butt" stroke-dasharray="2.4 1.2 3.8 1.1 2.2 1.5 3.8 1.0 3.1 1.1" stroke-dashoffset="1.2"/>
</g></g>
</svg>
<svg class="a" style="left:756.7px;top:129px" width="243.3" height="383" viewBox="211.7 129 243.3 383">
<use href="#spA" filter="url(#b2)"/>
</svg>
<svg class="a" style="left:210.8px;top:552.5px" width="531" height="383" viewBox="210.8 552.5 531 383">
<g filter="url(#b3)"><g id="spC" stroke-linejoin="round">
<path d="M285.3 578.2 L286.9 578.0 L289.5 577.6 L292.1 577.2 L294.6 576.8 L297.2 576.3 L299.8 575.8 L302.3 575.3 L304.9 574.8 L307.4 574.3 L310.0 573.8 L312.5 573.4 L315.1 573.1 L317.7 572.8 L320.3 572.6 L322.9 572.3 L325.5 572.0 L328.1 571.7 L330.6 571.3 L333.2 570.9 L335.8 570.5 L338.4 570.1 L340.9 569.7 L343.5 569.3 L346.1 568.9 L348.6 568.5 L351.2 568.2 L353.8 567.8 L355.5 567.5" fill="none" stroke="#6a6a6a" stroke-width="5.7" stroke-linecap="round"/>
<path d="M285.3 578.2 L286.9 578.0 L289.5 577.6 L292.1 577.2 L294.6 576.8 L297.2 576.3 L299.8 575.8 L302.3 575.3 L304.9 574.8 L307.4 574.3 L310.0 573.8 L312.5 573.4 L315.1 573.1 L317.7 572.8 L320.3 572.6 L322.9 572.3 L325.5 572.0 L328.1 571.7 L330.6 571.3 L333.2 570.9 L335.8 570.5 L338.4 570.1 L340.9 569.7 L343.5 569.3 L346.1 568.9 L348.6 568.5 L351.2 568.2 L353.8 567.8 L355.5 567.5" fill="none" stroke="#161616" stroke-width="6.0" stroke-linecap="butt" stroke-dasharray="3.3 1.9 3.4 2.3 2.0 1.2 4.1 1.7 2.4 3.0" stroke-dashoffset="2.4"/>
<path d="M284.5 573.5 L286.2 573.2 L288.8 572.8 L291.4 572.5 L293.9 572.1 L296.5 571.8 L299.1 571.5 L301.7 571.2 L304.3 570.9 L306.9 570.6 L309.5 570.4 L312.0 570.0 L314.6 569.4 L317.1 568.9 L319.7 568.4 L322.2 567.9 L324.8 567.4 L327.4 567.0 L329.9 566.6 L332.5 566.2 L335.1 565.8 L337.6 565.4 L340.2 565.0 L342.8 564.6 L345.4 564.2 L347.9 563.8 L350.5 563.4 L353.1 563.0 L354.7 562.8" fill="none" stroke="#6a6a6a" stroke-width="5.7" stroke-linecap="round"/>
<path d="M284.5 573.5 L286.2 573.2 L288.8 572.8 L291.4 572.5 L293.9 572.1 L296.5 571.8 L299.1 571.5 L301.7 571.2 L304.3 570.9 L306.9 570.6 L309.5 570.4 L312.0 570.0 L314.6 569.4 L317.1 568.9 L319.7 568.4 L322.2 567.9 L324.8 567.4 L327.4 567.0 L329.9 566.6 L332.5 566.2 L335.1 565.8 L337.6 565.4 L340.2 565.0 L342.8 564.6 L345.4 564.2 L347.9 563.8 L350.5 563.4 L353.1 563.0 L354.7 562.8" fill="none" stroke="#161616" stroke-width="6.0" stroke-linecap="butt" stroke-dasharray="4.1 2.1 3.5 1.5 3.5 2.8 3.2 2.5 3.6 1.3" stroke-dashoffset="3.8"/>
<path d="M343.9 599.7 L345.4 598.9 L347.8 597.7 L350.1 596.5 L352.4 595.3 L354.8 594.1 L357.1 592.9 L359.4 591.6 L361.7 590.2 L363.9 588.9 L366.2 587.6 L368.5 586.3 L370.8 585.1 L373.2 584.0 L375.6 582.9 L378.0 581.8 L380.4 580.7 L382.8 579.6 L385.1 578.4 L387.4 577.2 L389.8 576.0 L392.1 574.8 L394.4 573.5 L396.8 572.3 L398.3 571.5" fill="none" stroke="#6a6a6a" stroke-width="5.7" stroke-linecap="round"/>
<path d="M343.9 599.7 L345.4 598.9 L347.8 597.7 L350.1 596.5 L352.4 595.3 L354.8 594.1 L357.1 592.9 L359.4 591.6 L361.7 590.2 L363.9 588.9 L366.2 587.6 L368.5 586.3 L370.8 585.1 L373.2 584.0 L375.6 582.9 L378.0 581.8 L380.4 580.7 L382.8 579.6 L385.1 578.4 L387.4 577.2 L389.8 576.0 L392.1 574.8 L394.4 573.5 L396.8 572.3 L398.3 571.5" fill="none" stroke="#161616" stroke-width="6.0" stroke-linecap="butt" stroke-dasharray="2.6 1.3 4.1 2.1 3.7 2.8 3.7 2.9 2.9 2.6" stroke-dashoffset="2.2"/>
<path d="M341.7 595.5 L343.2 594.7 L345.6 593.5 L347.9 592.2 L350.2 591.0 L352.6 589.8 L354.9 588.6 L357.3 587.5 L359.7 586.4 L362.1 585.3 L364.5 584.3 L366.9 583.2 L369.2 581.9 L371.5 580.6 L373.7 579.3 L376.0 578.0 L378.3 576.6 L380.6 575.3 L382.9 574.1 L385.2 572.9 L387.6 571.7 L389.9 570.5 L392.2 569.3 L394.6 568.1 L396.1 567.3" fill="none" stroke="#6a6a6a" stroke-width="5.7" stroke-linecap="round"/>
<path d="M341.7 595.5 L343.2 594.7 L345.6 593.5 L347.9 592.2 L350.2 591.0 L352.6 589.8 L354.9 588.6 L357.3 587.5 L359.7 586.4 L362.1 585.3 L364.5 584.3 L366.9 583.2 L369.2 581.9 L371.5 580.6 L373.7 579.3 L376.0 578.0 L378.3 576.6 L380.6 575.3 L382.9 574.1 L385.2 572.9 L387.6 571.7 L389.9 570.5 L392.2 569.3 L394.6 568.1 L396.1 567.3" fill="none" stroke="#161616" stroke-width="6.0" stroke-linecap="butt" stroke-dasharray="4.3 2.8 2.1 1.4 2.4 2.9 3.0 2.3 2.6 2.1" stroke-dashoffset="1.9"/>
<path d="M270.2 623.0 L271.5 621.8 L273.5 620.0 L275.4 618.2 L277.3 616.3 L279.2 614.3 L281.0 612.4 L283.2 610.7 L285.3 609.0 L287.4 607.4 L289.5 605.6 L291.5 603.8 L293.5 602.0 L295.5 600.2 L297.5 598.4 L298.8 597.3" fill="none" stroke="#6a6a6a" stroke-width="5.2" stroke-linecap="round"/>
<path d="M270.2 623.0 L271.5 621.8 L273.5 620.0 L275.4 618.2 L277.3 616.3 L279.2 614.3 L281.0 612.4 L283.2 610.7 L285.3 609.0 L287.4 607.4 L289.5 605.6 L291.5 603.8 L293.5 602.0 L295.5 600.2 L297.5 598.4 L298.8 597.3" fill="none" stroke="#161616" stroke-width="5.5" stroke-linecap="butt" stroke-dasharray="3.4 2.3 4.2 2.4 4.3 2.7 4.5 2.4 2.2 2.7" stroke-dashoffset="4.8"/>
<path d="M267.2 619.7 L268.5 618.6 L270.5 616.8 L272.6 615.0 L274.7 613.3 L276.8 611.7 L279.0 610.0 L280.8 608.1 L282.7 606.2 L284.6 604.2 L286.5 602.4 L288.5 600.6 L290.5 598.8 L292.5 597.0 L294.5 595.2 L295.8 594.0" fill="none" stroke="#6a6a6a" stroke-width="5.2" stroke-linecap="round"/>
<path d="M267.2 619.7 L268.5 618.6 L270.5 616.8 L272.6 615.0 L274.7 613.3 L276.8 611.7 L279.0 610.0 L280.8 608.1 L282.7 606.2 L284.6 604.2 L286.5 602.4 L288.5 600.6 L290.5 598.8 L292.5 597.0 L294.5 595.2 L295.8 594.0" fill="none" stroke="#161616" stroke-width="5.5" stroke-linecap="butt" stroke-dasharray="4.2 2.2 3.7 1.6 4.0 2.2 2.6 1.3 4.1 3.0" stroke-dashoffset="0.4"/>
<path d="M316.3 601.7 L317.0 603.3 L318.0 605.7 L319.0 608.2 L320.0 610.6 L321.0 613.1 L322.0 615.5 L323.1 617.9 L324.2 620.3 L325.4 622.7 L326.5 625.1 L327.6 627.5 L328.5 630.0 L329.3 632.5 L330.0 634.5 L329.5 636.6 L329.1 639.2 L328.8 641.9 L328.5 644.5 L328.2 647.1 L327.9 648.8" fill="none" stroke="#6a6a6a" stroke-width="5.2" stroke-linecap="round"/>
<path d="M316.3 601.7 L317.0 603.3 L318.0 605.7 L319.0 608.2 L320.0 610.6 L321.0 613.1 L322.0 615.5 L323.1 617.9 L324.2 620.3 L325.4 622.7 L326.5 625.1 L327.6 627.5 L328.5 630.0 L329.3 632.5 L330.0 634.5 L329.5 636.6 L329.1 639.2 L328.8 641.9 L328.5 644.5 L328.2 647.1 L327.9 648.8" fill="none" stroke="#161616" stroke-width="5.5" stroke-linecap="butt" stroke-dasharray="2.9 1.5 2.6 2.6 4.2 1.3 3.5 1.3 3.7 1.8" stroke-dashoffset="4.4"/>
<path d="M320.4 600.0 L321.0 601.6 L322.0 604.1 L323.1 606.5 L324.1 608.9 L325.1 611.4 L326.1 613.8 L327.0 616.3 L327.9 618.8 L328.7 621.3 L329.6 623.8 L330.5 626.3 L331.7 628.7 L332.8 631.1 L334.0 634.0 L333.8 637.1 L333.5 639.8 L333.2 642.4 L332.8 645.0 L332.5 647.6 L332.3 649.4" fill="none" stroke="#6a6a6a" stroke-width="5.2" stroke-linecap="round"/>
<path d="M320.4 600.0 L321.0 601.6 L322.0 604.1 L323.1 606.5 L324.1 608.9 L325.1 611.4 L326.1 613.8 L327.0 616.3 L327.9 618.8 L328.7 621.3 L329.6 623.8 L330.5 626.3 L331.7 628.7 L332.8 631.1 L334.0 634.0 L333.8 637.1 L333.5 639.8 L333.2 642.4 L332.8 645.0 L332.5 647.6 L332.3 649.4" fill="none" stroke="#161616" stroke-width="5.5" stroke-linecap="butt" stroke-dasharray="4.4 2.1 4.5 1.8 2.0 2.3 1.9 1.6 2.9 2.3" stroke-dashoffset="0.8"/>
<path d="M300.0 640.2 L301.7 640.2 L304.4 640.1 L307.2 640.0 L309.9 639.8 L312.6 639.6 L315.3 639.6 L318.1 639.8 L320.8 639.9 L323.5 640.1 L326.2 640.2 L328.9 640.2 L331.7 640.2 L334.4 640.2 L337.1 640.2 L339.8 640.2 L342.6 640.2 L345.3 640.2 L347.0 640.2" fill="none" stroke="#6a6a6a" stroke-width="5.2" stroke-linecap="round"/>
<path d="M300.0 640.2 L301.7 640.2 L304.4 640.1 L307.2 640.0 L309.9 639.8 L312.6 639.6 L315.3 639.6 L318.1 639.8 L320.8 639.9 L323.5 640.1 L326.2 640.2 L328.9 640.2 L331.7 640.2 L334.4 640.2 L337.1 640.2 L339.8 640.2 L342.6 640.2 L345.3 640.2 L347.0 640.2" fill="none" stroke="#161616" stroke-width="5.5" stroke-linecap="butt" stroke-dasharray="4.1 1.8 4.4 2.8 2.8 2.0 3.2 2.4 3.4 2.2" stroke-dashoffset="3.1"/>
<path d="M300.0 635.8 L301.7 635.8 L304.4 635.9 L307.2 636.0 L309.9 636.2 L312.6 636.4 L315.3 636.4 L318.1 636.2 L320.8 636.1 L323.5 635.9 L326.2 635.8 L328.9 635.8 L331.7 635.8 L334.4 635.8 L337.1 635.8 L339.8 635.8 L342.6 635.8 L345.3 635.8 L347.0 635.8" fill="none" stroke="#6a6a6a" stroke-width="5.2" stroke-linecap="round"/>
<path d="M300.0 635.8 L301.7 635.8 L304.4 635.9 L307.2 636.0 L309.9 636.2 L312.6 636.4 L315.3 636.4 L318.1 636.2 L320.8 636.1 L323.5 635.9 L326.2 635.8 L328.9 635.8 L331.7 635.8 L334.4 635.8 L337.1 635.8 L339.8 635.8 L342.6 635.8 L345.3 635.8 L347.0 635.8" fill="none" stroke="#161616" stroke-width="5.5" stroke-linecap="butt" stroke-dasharray="4.3 2.1 3.0 2.5 2.4 1.7 4.4 2.1 3.3 1.2" stroke-dashoffset="2.1"/>
<path d="M359.6 621.7 L361.3 621.2 L363.8 620.2 L366.4 619.3 L368.8 618.1 L371.3 617.0 L373.9 616.2 L376.5 615.5 L379.1 614.8 L381.6 613.9 L384.2 613.0 L385.8 612.4" fill="none" stroke="#6a6a6a" stroke-width="5.2" stroke-linecap="round"/>
<path d="M359.6 621.7 L361.3 621.2 L363.8 620.2 L366.4 619.3 L368.8 618.1 L371.3 617.0 L373.9 616.2 L376.5 615.5 L379.1 614.8 L381.6 613.9 L384.2 613.0 L385.8 612.4" fill="none" stroke="#161616" stroke-width="5.5" stroke-linecap="butt" stroke-dasharray="1.9 2.3 3.5 1.3 3.5 2.0 3.6 1.8 3.7 2.5" stroke-dashoffset="0.1"/>
<path d="M358.2 617.6 L359.8 617.0 L362.4 616.1 L364.9 615.3 L367.6 614.6 L370.2 614.0 L372.7 612.9 L375.1 611.7 L377.6 610.7 L380.2 609.8 L382.7 608.8 L384.4 608.3" fill="none" stroke="#6a6a6a" stroke-width="5.2" stroke-linecap="round"/>
<path d="M358.2 617.6 L359.8 617.0 L362.4 616.1 L364.9 615.3 L367.6 614.6 L370.2 614.0 L372.7 612.9 L375.1 611.7 L377.6 610.7 L380.2 609.8 L382.7 608.8 L384.4 608.3" fill="none" stroke="#161616" stroke-width="5.5" stroke-linecap="butt" stroke-dasharray="2.0 2.4 4.4 1.7 3.0 2.3 2.7 1.9 2.6 1.9" stroke-dashoffset="3.0"/>
<path d="M411.8 637.8 L413.4 637.1 L415.8 636.0 L418.2 634.9 L420.6 633.7 L422.9 632.4 L425.2 631.2 L427.6 629.9 L429.9 628.8 L432.4 627.8 L434.8 626.8 L437.3 625.9 L439.8 624.9 L442.2 623.9 L444.6 622.8 L447.0 621.7 L449.4 620.6 L451.8 619.5 L454.2 618.4 L456.6 617.3 L458.2 616.6" fill="none" stroke="#6a6a6a" stroke-width="5.7" stroke-linecap="round"/>
<path d="M411.8 637.8 L413.4 637.1 L415.8 636.0 L418.2 634.9 L420.6 633.7 L422.9 632.4 L425.2 631.2 L427.6 629.9 L429.9 628.8 L432.4 627.8 L434.8 626.8 L437.3 625.9 L439.8 624.9 L442.2 623.9 L444.6 622.8 L447.0 621.7 L449.4 620.6 L451.8 619.5 L454.2 618.4 L456.6 617.3 L458.2 616.6" fill="none" stroke="#161616" stroke-width="6.0" stroke-linecap="butt" stroke-dasharray="2.8 2.6 1.9 2.2 3.8 1.8 2.4 2.6 2.4 1.5" stroke-dashoffset="2.2"/>
<path d="M409.8 633.4 L411.4 632.7 L413.8 631.6 L416.2 630.5 L418.6 629.5 L421.1 628.6 L423.6 627.6 L426.0 626.7 L428.5 625.6 L430.8 624.4 L433.2 623.2 L435.5 621.9 L437.8 620.7 L440.2 619.5 L442.6 618.4 L445.0 617.3 L447.4 616.2 L449.8 615.1 L452.2 614.0 L454.6 612.9 L456.2 612.2" fill="none" stroke="#6a6a6a" stroke-width="5.7" stroke-linecap="round"/>
<path d="M409.8 633.4 L411.4 632.7 L413.8 631.6 L416.2 630.5 L418.6 629.5 L421.1 628.6 L423.6 627.6 L426.0 626.7 L428.5 625.6 L430.8 624.4 L433.2 623.2 L435.5 621.9 L437.8 620.7 L440.2 619.5 L442.6 618.4 L445.0 617.3 L447.4 616.2 L449.8 615.1 L452.2 614.0 L454.6 612.9 L456.2 612.2" fill="none" stroke="#161616" stroke-width="6.0" stroke-linecap="butt" stroke-dasharray="3.7 1.4 2.7 1.8 4.1 2.0 4.1 1.5 2.7 2.4" stroke-dashoffset="4.4"/>
<path d="M287.3 662.3 L288.6 663.3 L290.6 665.0 L292.6 666.6 L294.7 668.3 L296.7 669.9 L298.8 671.5 L300.8 673.1 L302.9 674.6 L305.0 676.2 L307.1 677.7 L308.8 679.2 L309.8 681.3 L310.9 683.6 L312.0 686.0 L313.1 688.3 L314.3 690.7 L315.5 693.0 L316.7 695.3 L317.9 697.6 L319.2 699.9 L320.4 702.1 L321.6 704.4 L322.8 706.7 L323.6 708.2" fill="none" stroke="#6a6a6a" stroke-width="5.2" stroke-linecap="round"/>
<path d="M287.3 662.3 L288.6 663.3 L290.6 665.0 L292.6 666.6 L294.7 668.3 L296.7 669.9 L298.8 671.5 L300.8 673.1 L302.9 674.6 L305.0 676.2 L307.1 677.7 L308.8 679.2 L309.8 681.3 L310.9 683.6 L312.0 686.0 L313.1 688.3 L314.3 690.7 L315.5 693.0 L316.7 695.3 L317.9 697.6 L319.2 699.9 L320.4 702.1 L321.6 704.4 L322.8 706.7 L323.6 708.2" fill="none" stroke="#161616" stroke-width="5.5" stroke-linecap="butt" stroke-dasharray="2.4 1.4 3.2 1.5 4.0 2.7 2.3 1.7 4.0 2.4" stroke-dashoffset="4.0"/>
<path d="M290.1 658.9 L291.4 659.9 L293.4 661.6 L295.4 663.2 L297.4 664.9 L299.5 666.5 L301.4 668.3 L303.3 670.0 L305.3 671.8 L307.2 673.5 L309.2 675.3 L311.3 677.2 L312.8 679.6 L314.2 681.9 L315.5 684.1 L316.8 686.4 L318.1 688.6 L319.4 690.9 L320.6 693.2 L321.8 695.5 L323.0 697.8 L324.3 700.1 L325.5 702.4 L326.7 704.7 L327.5 706.2" fill="none" stroke="#6a6a6a" stroke-width="5.2" stroke-linecap="round"/>
<path d="M290.1 658.9 L291.4 659.9 L293.4 661.6 L295.4 663.2 L297.4 664.9 L299.5 666.5 L301.4 668.3 L303.3 670.0 L305.3 671.8 L307.2 673.5 L309.2 675.3 L311.3 677.2 L312.8 679.6 L314.2 681.9 L315.5 684.1 L316.8 686.4 L318.1 688.6 L319.4 690.9 L320.6 693.2 L321.8 695.5 L323.0 697.8 L324.3 700.1 L325.5 702.4 L326.7 704.7 L327.5 706.2" fill="none" stroke="#161616" stroke-width="5.5" stroke-linecap="butt" stroke-dasharray="2.7 1.4 2.6 2.6 2.5 1.8 2.9 2.0 2.9 2.9" stroke-dashoffset="0.8"/>
<path d="M344.4 698.9 L345.6 697.6 L347.3 695.5 L348.9 693.4 L350.6 691.3 L352.2 689.2 L354.0 687.2 L355.9 685.3 L357.8 683.4 L359.7 681.5 L361.6 679.6 L363.3 677.6 L365.1 675.6 L366.9 673.6 L368.7 671.6 L370.5 669.6 L372.2 667.6 L374.0 665.6 L375.2 664.3" fill="none" stroke="#6a6a6a" stroke-width="5.7" stroke-linecap="round"/>
<path d="M344.4 698.9 L345.6 697.6 L347.3 695.5 L348.9 693.4 L350.6 691.3 L352.2 689.2 L354.0 687.2 L355.9 685.3 L357.8 683.4 L359.7 681.5 L361.6 679.6 L363.3 677.6 L365.1 675.6 L366.9 673.6 L368.7 671.6 L370.5 669.6 L372.2 667.6 L374.0 665.6 L375.2 664.3" fill="none" stroke="#161616" stroke-width="6.0" stroke-linecap="butt" stroke-dasharray="4.3 2.8 4.5 2.0 4.4 2.9 2.4 2.5 4.1 2.4" stroke-dashoffset="2.6"/>
<path d="M340.8 695.7 L342.0 694.4 L343.8 692.5 L345.8 690.6 L347.7 688.7 L349.6 686.8 L351.3 684.8 L353.0 682.7 L354.6 680.6 L356.3 678.5 L358.0 676.4 L359.8 674.4 L361.5 672.4 L363.3 670.4 L365.1 668.4 L366.9 666.4 L368.7 664.4 L370.4 662.4 L371.6 661.1" fill="none" stroke="#6a6a6a" stroke-width="5.7" stroke-linecap="round"/>
<path d="M340.8 695.7 L342.0 694.4 L343.8 692.5 L345.8 690.6 L347.7 688.7 L349.6 686.8 L351.3 684.8 L353.0 682.7 L354.6 680.6 L356.3 678.5 L358.0 676.4 L359.8 674.4 L361.5 672.4 L363.3 670.4 L365.1 668.4 L366.9 666.4 L368.7 664.4 L370.4 662.4 L371.6 661.1" fill="none" stroke="#161616" stroke-width="6.0" stroke-linecap="butt" stroke-dasharray="2.6 1.8 2.4 1.3 3.4 1.7 4.0 1.3 4.2 2.4" stroke-dashoffset="4.6"/>
<path d="M390.2 680.3 L392.0 681.0 L394.9 682.1 L397.8 683.0 L400.4 684.6 L402.2 685.4" fill="none" stroke="#6a6a6a" stroke-width="4.8" stroke-linecap="round"/>
<path d="M390.2 680.3 L392.0 681.0 L394.9 682.1 L397.8 683.0 L400.4 684.6 L402.2 685.4" fill="none" stroke="#161616" stroke-width="5.0" stroke-linecap="butt" stroke-dasharray="4.2 2.2 1.8 2.5 2.3 1.7 3.6 2.1 2.9 2.9" stroke-dashoffset="3.1"/>
<path d="M391.8 676.6 L393.6 677.4 L396.3 678.7 L399.0 680.2 L402.0 681.0 L403.8 681.7" fill="none" stroke="#6a6a6a" stroke-width="4.8" stroke-linecap="round"/>
<path d="M391.8 676.6 L393.6 677.4 L396.3 678.7 L399.0 680.2 L402.0 681.0 L403.8 681.7" fill="none" stroke="#161616" stroke-width="5.0" stroke-linecap="butt" stroke-dasharray="2.7 1.7 4.1 2.1 3.9 1.8 2.3 2.2 4.0 1.5" stroke-dashoffset="4.0"/>
<path d="M414.1 666.7 L415.4 665.4 L417.3 663.3 L419.0 661.0 L421.4 659.4 L422.7 658.1" fill="none" stroke="#6a6a6a" stroke-width="4.8" stroke-linecap="round"/>
<path d="M414.1 666.7 L415.4 665.4 L417.3 663.3 L419.0 661.0 L421.4 659.4 L422.7 658.1" fill="none" stroke="#161616" stroke-width="5.0" stroke-linecap="butt" stroke-dasharray="4.0 2.7 1.8 2.3 4.1 1.3 2.5 1.7 3.2 2.0" stroke-dashoffset="2.4"/>
<path d="M411.3 663.9 L412.6 662.6 L414.7 660.7 L417.0 659.0 L418.6 656.6 L419.9 655.3" fill="none" stroke="#6a6a6a" stroke-width="4.8" stroke-linecap="round"/>
<path d="M411.3 663.9 L412.6 662.6 L414.7 660.7 L417.0 659.0 L418.6 656.6 L419.9 655.3" fill="none" stroke="#161616" stroke-width="5.0" stroke-linecap="butt" stroke-dasharray="3.9 1.2 1.9 1.4 2.1 1.3 4.4 2.7 2.0 2.1" stroke-dashoffset="1.6"/>
<path d="M426.9 684.0 L428.7 684.0 L431.3 683.6 L434.0 683.7 L436.7 684.0 L439.3 684.0 L441.1 684.0" fill="none" stroke="#6a6a6a" stroke-width="4.8" stroke-linecap="round"/>
<path d="M426.9 684.0 L428.7 684.0 L431.3 683.6 L434.0 683.7 L436.7 684.0 L439.3 684.0 L441.1 684.0" fill="none" stroke="#161616" stroke-width="5.0" stroke-linecap="butt" stroke-dasharray="2.7 2.4 3.4 1.8 2.3 1.8 2.1 2.2 3.7 1.9" stroke-dashoffset="0.4"/>
<path d="M426.9 680.0 L428.7 680.0 L431.3 680.4 L434.0 680.3 L436.7 680.0 L439.3 680.0 L441.1 680.0" fill="none" stroke="#6a6a6a" stroke-width="4.8" stroke-linecap="round"/>
<path d="M426.9 680.0 L428.7 680.0 L431.3 680.4 L434.0 680.3 L436.7 680.0 L439.3 680.0 L441.1 680.0" fill="none" stroke="#161616" stroke-width="5.0" stroke-linecap="butt" stroke-dasharray="2.3 1.9 3.4 2.6 2.8 2.6 3.5 2.0 2.8 2.1" stroke-dashoffset="3.5"/>
<path d="M438.9 654.0 L440.7 654.1 L443.4 654.1 L446.2 653.9 L448.9 654.1 L451.7 654.6 L454.4 654.7 L457.2 654.9 L458.9 654.9" fill="none" stroke="#6a6a6a" stroke-width="4.8" stroke-linecap="round"/>
<path d="M438.9 654.0 L440.7 654.1 L443.4 654.1 L446.2 653.9 L448.9 654.1 L451.7 654.6 L454.4 654.7 L457.2 654.9 L458.9 654.9" fill="none" stroke="#161616" stroke-width="5.0" stroke-linecap="butt" stroke-dasharray="3.7 2.0 2.5 2.2 3.7 1.3 2.9 2.0 4.2 2.9" stroke-dashoffset="1.9"/>
<path d="M439.1 650.1 L440.8 650.1 L443.6 650.4 L446.3 650.8 L449.1 650.9 L451.8 650.7 L454.6 650.8 L457.3 650.9 L459.1 651.0" fill="none" stroke="#6a6a6a" stroke-width="4.8" stroke-linecap="round"/>
<path d="M439.1 650.1 L440.8 650.1 L443.6 650.4 L446.3 650.8 L449.1 650.9 L451.8 650.7 L454.6 650.8 L457.3 650.9 L459.1 651.0" fill="none" stroke="#161616" stroke-width="5.0" stroke-linecap="butt" stroke-dasharray="4.2 2.6 2.5 2.0 2.1 2.7 3.6 2.8 3.9 2.4" stroke-dashoffset="3.7"/>
<path d="M411.6 718.0 L413.2 717.5 L415.7 716.7 L418.2 715.9 L420.7 715.1 L423.2 714.3 L425.7 713.5 L428.2 712.6 L430.6 711.7 L433.1 710.8 L435.6 709.8 L438.0 708.9 L440.5 708.2 L443.1 707.5 L445.6 706.9 L448.2 706.2 L450.7 705.5 L453.2 704.8 L455.7 704.0 L458.2 703.2 L460.7 702.4 L463.2 701.7 L465.7 700.9 L468.2 700.1 L469.8 699.6" fill="none" stroke="#6a6a6a" stroke-width="5.7" stroke-linecap="round"/>
<path d="M411.6 718.0 L413.2 717.5 L415.7 716.7 L418.2 715.9 L420.7 715.1 L423.2 714.3 L425.7 713.5 L428.2 712.6 L430.6 711.7 L433.1 710.8 L435.6 709.8 L438.0 708.9 L440.5 708.2 L443.1 707.5 L445.6 706.9 L448.2 706.2 L450.7 705.5 L453.2 704.8 L455.7 704.0 L458.2 703.2 L460.7 702.4 L463.2 701.7 L465.7 700.9 L468.2 700.1 L469.8 699.6" fill="none" stroke="#161616" stroke-width="6.0" stroke-linecap="butt" stroke-dasharray="2.1 2.3 1.8 1.5 3.9 1.3 2.0 1.4 4.2 1.5" stroke-dashoffset="0.1"/>
<path d="M410.2 713.4 L411.8 712.9 L414.3 712.1 L416.8 711.3 L419.3 710.6 L421.8 709.8 L424.3 709.0 L426.8 708.3 L429.4 707.6 L431.9 707.0 L434.4 706.3 L437.0 705.7 L439.5 704.8 L441.9 703.9 L444.4 703.0 L446.8 702.0 L449.3 701.1 L451.8 700.3 L454.3 699.5 L456.8 698.7 L459.3 697.9 L461.8 697.1 L464.3 696.3 L466.8 695.5 L468.4 695.0" fill="none" stroke="#6a6a6a" stroke-width="5.7" stroke-linecap="round"/>
<path d="M410.2 713.4 L411.8 712.9 L414.3 712.1 L416.8 711.3 L419.3 710.6 L421.8 709.8 L424.3 709.0 L426.8 708.3 L429.4 707.6 L431.9 707.0 L434.4 706.3 L437.0 705.7 L439.5 704.8 L441.9 703.9 L444.4 703.0 L446.8 702.0 L449.3 701.1 L451.8 700.3 L454.3 699.5 L456.8 698.7 L459.3 697.9 L461.8 697.1 L464.3 696.3 L466.8 695.5 L468.4 695.0" fill="none" stroke="#161616" stroke-width="6.0" stroke-linecap="butt" stroke-dasharray="4.1 1.4 4.1 2.4 4.1 2.9 3.4 2.6 1.9 2.6" stroke-dashoffset="2.6"/>
<path d="M354.1 743.6 L355.6 742.6 L357.9 741.2 L360.3 739.8 L362.6 738.4 L365.0 737.0 L367.3 735.4 L369.5 733.8 L371.8 732.3 L374.1 730.8 L376.5 729.5 L379.0 728.3 L381.4 727.0 L383.8 725.7 L386.2 724.3 L388.5 722.9 L390.9 721.5 L392.4 720.5" fill="none" stroke="#6a6a6a" stroke-width="5.7" stroke-linecap="round"/>
<path d="M354.1 743.6 L355.6 742.6 L357.9 741.2 L360.3 739.8 L362.6 738.4 L365.0 737.0 L367.3 735.4 L369.5 733.8 L371.8 732.3 L374.1 730.8 L376.5 729.5 L379.0 728.3 L381.4 727.0 L383.8 725.7 L386.2 724.3 L388.5 722.9 L390.9 721.5 L392.4 720.5" fill="none" stroke="#161616" stroke-width="6.0" stroke-linecap="butt" stroke-dasharray="2.1 2.5 4.3 1.3 2.7 2.2 4.0 1.6 2.3 1.6" stroke-dashoffset="3.1"/>
<path d="M351.6 739.5 L353.1 738.5 L355.5 737.1 L357.8 735.7 L360.2 734.3 L362.5 732.9 L365.0 731.6 L367.4 730.4 L369.9 729.1 L372.3 727.8 L374.5 726.2 L376.8 724.7 L379.1 723.1 L381.4 721.6 L383.7 720.2 L386.1 718.8 L388.4 717.4 L389.9 716.4" fill="none" stroke="#6a6a6a" stroke-width="5.7" stroke-linecap="round"/>
<path d="M351.6 739.5 L353.1 738.5 L355.5 737.1 L357.8 735.7 L360.2 734.3 L362.5 732.9 L365.0 731.6 L367.4 730.4 L369.9 729.1 L372.3 727.8 L374.5 726.2 L376.8 724.7 L379.1 723.1 L381.4 721.6 L383.7 720.2 L386.1 718.8 L388.4 717.4 L389.9 716.4" fill="none" stroke="#161616" stroke-width="6.0" stroke-linecap="butt" stroke-dasharray="3.8 1.9 2.8 1.9 2.7 2.0 2.0 2.1 4.4 1.9" stroke-dashoffset="3.7"/>
<path d="M432.7 738.3 L434.4 738.4 L437.0 738.4 L439.7 738.3 L442.3 738.5 L444.8 739.0 L447.4 739.4 L450.0 739.6 L452.6 739.8 L455.2 740.0 L456.9 740.1" fill="none" stroke="#6a6a6a" stroke-width="5.2" stroke-linecap="round"/>
<path d="M432.7 738.3 L434.4 738.4 L437.0 738.4 L439.7 738.3 L442.3 738.5 L444.8 739.0 L447.4 739.4 L450.0 739.6 L452.6 739.8 L455.2 740.0 L456.9 740.1" fill="none" stroke="#161616" stroke-width="5.5" stroke-linecap="butt" stroke-dasharray="3.7 2.6 3.6 2.1 3.1 2.4 4.2 1.5 2.1 2.5" stroke-dashoffset="4.6"/>
<path d="M433.1 733.9 L434.8 734.0 L437.4 734.4 L439.9 734.9 L442.5 735.1 L445.2 735.0 L447.8 735.0 L450.4 735.2 L453.0 735.4 L455.6 735.6 L457.3 735.7" fill="none" stroke="#6a6a6a" stroke-width="5.2" stroke-linecap="round"/>
<path d="M433.1 733.9 L434.8 734.0 L437.4 734.4 L439.9 734.9 L442.5 735.1 L445.2 735.0 L447.8 735.0 L450.4 735.2 L453.0 735.4 L455.6 735.6 L457.3 735.7" fill="none" stroke="#161616" stroke-width="5.5" stroke-linecap="butt" stroke-dasharray="3.2 2.0 3.7 1.5 2.5 1.6 3.4 1.8 2.4 2.4" stroke-dashoffset="4.8"/>
<path d="M488.2 556.3 L488.5 558.1 L489.1 560.8 L489.9 563.5 L490.6 566.3 L490.8 569.1 L491.1 571.9 L491.5 574.6 L492.0 577.4 L492.5 580.1 L492.9 581.9" fill="none" stroke="#6a6a6a" stroke-width="4.8" stroke-linecap="round"/>
<path d="M488.2 556.3 L488.5 558.1 L489.1 560.8 L489.9 563.5 L490.6 566.3 L490.8 569.1 L491.1 571.9 L491.5 574.6 L492.0 577.4 L492.5 580.1 L492.9 581.9" fill="none" stroke="#161616" stroke-width="5.0" stroke-linecap="butt" stroke-dasharray="3.7 1.9 4.1 2.3 2.5 1.6 1.9 2.1 2.8 1.5" stroke-dashoffset="1.8"/>
<path d="M492.1 555.6 L492.5 557.4 L492.9 560.2 L493.1 563.0 L493.4 565.7 L494.2 568.4 L494.9 571.1 L495.5 573.9 L496.0 576.6 L496.5 579.4 L496.8 581.2" fill="none" stroke="#6a6a6a" stroke-width="4.8" stroke-linecap="round"/>
<path d="M492.1 555.6 L492.5 557.4 L492.9 560.2 L493.1 563.0 L493.4 565.7 L494.2 568.4 L494.9 571.1 L495.5 573.9 L496.0 576.6 L496.5 579.4 L496.8 581.2" fill="none" stroke="#161616" stroke-width="5.0" stroke-linecap="butt" stroke-dasharray="2.7 2.6 2.2 3.0 3.1 2.3 3.1 2.7 4.0 2.2" stroke-dashoffset="2.4"/>
<path d="M449.4 569.8 L450.7 570.9 L452.8 572.6 L454.9 574.2 L457.0 575.9 L459.2 577.4 L460.7 577.8 L459.6 578.8 L458.0 580.9 L456.2 583.0 L454.5 585.0 L452.9 587.2 L451.3 589.4 L449.8 591.5 L448.8 593.0" fill="none" stroke="#6a6a6a" stroke-width="5.2" stroke-linecap="round"/>
<path d="M449.4 569.8 L450.7 570.9 L452.8 572.6 L454.9 574.2 L457.0 575.9 L459.2 577.4 L460.7 577.8 L459.6 578.8 L458.0 580.9 L456.2 583.0 L454.5 585.0 L452.9 587.2 L451.3 589.4 L449.8 591.5 L448.8 593.0" fill="none" stroke="#161616" stroke-width="5.5" stroke-linecap="butt" stroke-dasharray="4.1 1.9 3.8 2.9 3.1 1.6 2.4 2.5 3.6 2.9" stroke-dashoffset="4.3"/>
<path d="M452.1 566.4 L453.5 567.5 L455.6 569.1 L457.6 570.8 L459.7 572.5 L461.7 574.3 L464.2 577.4 L462.2 580.7 L460.7 582.9 L459.3 585.2 L458.0 587.5 L456.5 589.7 L454.9 591.9 L453.3 594.1 L452.3 595.5" fill="none" stroke="#6a6a6a" stroke-width="5.2" stroke-linecap="round"/>
<path d="M452.1 566.4 L453.5 567.5 L455.6 569.1 L457.6 570.8 L459.7 572.5 L461.7 574.3 L464.2 577.4 L462.2 580.7 L460.7 582.9 L459.3 585.2 L458.0 587.5 L456.5 589.7 L454.9 591.9 L453.3 594.1 L452.3 595.5" fill="none" stroke="#161616" stroke-width="5.5" stroke-linecap="butt" stroke-dasharray="2.5 1.5 2.5 1.5 3.7 2.7 4.2 1.7 4.1 1.8" stroke-dashoffset="2.1"/>
<path d="M525.2 618.2 L525.1 619.9 L524.9 622.5 L524.7 625.1 L524.5 627.7 L524.3 630.3 L524.1 632.9 L523.9 635.6 L523.7 638.2 L523.7 640.8 L523.6 643.4 L523.5 646.0 L523.4 648.6 L523.2 651.2 L522.9 653.8 L522.5 656.4 L522.2 659.0 L521.9 661.6 L521.6 664.2 L521.4 666.8 L521.1 669.4 L520.9 672.0 L520.7 674.6 L520.5 677.2 L520.4 678.9" fill="none" stroke="#6a6a6a" stroke-width="5.2" stroke-linecap="round"/>
<path d="M525.2 618.2 L525.1 619.9 L524.9 622.5 L524.7 625.1 L524.5 627.7 L524.3 630.3 L524.1 632.9 L523.9 635.6 L523.7 638.2 L523.7 640.8 L523.6 643.4 L523.5 646.0 L523.4 648.6 L523.2 651.2 L522.9 653.8 L522.5 656.4 L522.2 659.0 L521.9 661.6 L521.6 664.2 L521.4 666.8 L521.1 669.4 L520.9 672.0 L520.7 674.6 L520.5 677.2 L520.4 678.9" fill="none" stroke="#161616" stroke-width="5.5" stroke-linecap="butt" stroke-dasharray="2.0 1.4 4.1 1.7 2.8 2.2 3.6 1.2 2.7 2.0" stroke-dashoffset="2.4"/>
<path d="M529.6 618.6 L529.5 620.3 L529.3 622.9 L529.1 625.5 L528.9 628.1 L528.6 630.7 L528.4 633.3 L528.2 635.9 L527.9 638.5 L527.6 641.1 L527.3 643.7 L526.9 646.3 L526.6 648.9 L526.4 651.5 L526.3 654.1 L526.2 656.7 L526.1 659.3 L526.1 661.9 L525.9 664.6 L525.7 667.2 L525.5 669.8 L525.3 672.4 L525.1 675.0 L524.9 677.6 L524.8 679.3" fill="none" stroke="#6a6a6a" stroke-width="5.2" stroke-linecap="round"/>
<path d="M529.6 618.6 L529.5 620.3 L529.3 622.9 L529.1 625.5 L528.9 628.1 L528.6 630.7 L528.4 633.3 L528.2 635.9 L527.9 638.5 L527.6 641.1 L527.3 643.7 L526.9 646.3 L526.6 648.9 L526.4 651.5 L526.3 654.1 L526.2 656.7 L526.1 659.3 L526.1 661.9 L525.9 664.6 L525.7 667.2 L525.5 669.8 L525.3 672.4 L525.1 675.0 L524.9 677.6 L524.8 679.3" fill="none" stroke="#161616" stroke-width="5.5" stroke-linecap="butt" stroke-dasharray="2.4 2.3 4.4 1.9 3.3 1.4 2.5 2.4 2.1 2.8" stroke-dashoffset="4.5"/>
<path d="M458.6 679.6 L460.3 679.5 L463.0 679.2 L465.7 678.8 L468.3 678.4 L471.0 678.2 L473.7 678.3 L476.4 678.3 L479.1 678.3 L481.8 678.1 L484.4 677.9 L487.1 677.7 L489.8 677.5 L492.5 677.4 L494.2 677.3" fill="none" stroke="#6a6a6a" stroke-width="5.2" stroke-linecap="round"/>
<path d="M458.6 679.6 L460.3 679.5 L463.0 679.2 L465.7 678.8 L468.3 678.4 L471.0 678.2 L473.7 678.3 L476.4 678.3 L479.1 678.3 L481.8 678.1 L484.4 677.9 L487.1 677.7 L489.8 677.5 L492.5 677.4 L494.2 677.3" fill="none" stroke="#161616" stroke-width="5.5" stroke-linecap="butt" stroke-dasharray="4.3 1.9 3.9 2.6 2.6 2.4 3.6 2.7 2.5 2.6" stroke-dashoffset="4.8"/>
<path d="M458.3 675.2 L460.0 675.1 L462.7 675.1 L465.4 675.1 L468.1 675.1 L470.8 675.0 L473.4 674.6 L476.1 674.2 L478.8 673.9 L481.5 673.7 L484.1 673.5 L486.8 673.3 L489.5 673.2 L492.2 673.0 L493.9 672.9" fill="none" stroke="#6a6a6a" stroke-width="5.2" stroke-linecap="round"/>
<path d="M458.3 675.2 L460.0 675.1 L462.7 675.1 L465.4 675.1 L468.1 675.1 L470.8 675.0 L473.4 674.6 L476.1 674.2 L478.8 673.9 L481.5 673.7 L484.1 673.5 L486.8 673.3 L489.5 673.2 L492.2 673.0 L493.9 672.9" fill="none" stroke="#161616" stroke-width="5.5" stroke-linecap="butt" stroke-dasharray="3.6 2.2 2.1 2.1 2.8 2.5 3.6 2.2 2.3 2.4" stroke-dashoffset="3.2"/>
<path d="M550.3 653.8 L550.6 655.5 L551.0 658.1 L551.4 660.7 L552.0 663.3 L552.6 665.9 L553.2 668.5 L553.7 671.1 L554.3 673.6 L554.6 676.3 L554.9 678.9 L555.2 681.5 L555.5 684.2 L555.8 686.8 L556.2 689.4 L556.7 692.0 L557.1 694.6 L557.5 697.2 L558.0 699.9 L558.4 702.5 L558.8 705.1 L559.3 707.7 L559.7 710.3 L560.0 712.0" fill="none" stroke="#6a6a6a" stroke-width="5.7" stroke-linecap="round"/>
<path d="M550.3 653.8 L550.6 655.5 L551.0 658.1 L551.4 660.7 L552.0 663.3 L552.6 665.9 L553.2 668.5 L553.7 671.1 L554.3 673.6 L554.6 676.3 L554.9 678.9 L555.2 681.5 L555.5 684.2 L555.8 686.8 L556.2 689.4 L556.7 692.0 L557.1 694.6 L557.5 697.2 L558.0 699.9 L558.4 702.5 L558.8 705.1 L559.3 707.7 L559.7 710.3 L560.0 712.0" fill="none" stroke="#161616" stroke-width="6.0" stroke-linecap="butt" stroke-dasharray="4.2 2.4 2.1 2.9 2.2 1.8 3.7 2.3 3.3 2.4" stroke-dashoffset="2.3"/>
<path d="M555.0 653.0 L555.3 654.7 L555.7 657.3 L556.2 659.9 L556.5 662.6 L556.8 665.2 L557.1 667.8 L557.4 670.5 L557.7 673.1 L558.2 675.7 L558.8 678.3 L559.3 680.9 L559.9 683.4 L560.5 686.0 L560.9 688.6 L561.4 691.2 L561.8 693.8 L562.3 696.5 L562.7 699.1 L563.1 701.7 L563.6 704.3 L564.0 706.9 L564.4 709.5 L564.7 711.2" fill="none" stroke="#6a6a6a" stroke-width="5.7" stroke-linecap="round"/>
<path d="M555.0 653.0 L555.3 654.7 L555.7 657.3 L556.2 659.9 L556.5 662.6 L556.8 665.2 L557.1 667.8 L557.4 670.5 L557.7 673.1 L558.2 675.7 L558.8 678.3 L559.3 680.9 L559.9 683.4 L560.5 686.0 L560.9 688.6 L561.4 691.2 L561.8 693.8 L562.3 696.5 L562.7 699.1 L563.1 701.7 L563.6 704.3 L564.0 706.9 L564.4 709.5 L564.7 711.2" fill="none" stroke="#161616" stroke-width="6.0" stroke-linecap="butt" stroke-dasharray="2.6 1.5 2.0 2.5 3.8 2.2 3.8 1.8 2.5 1.9" stroke-dashoffset="4.4"/>
<path d="M585.3 672.2 L584.5 673.7 L583.3 676.1 L582.1 678.4 L580.5 680.5 L578.9 682.6 L577.5 684.8 L576.1 687.0 L574.7 689.2 L573.8 690.7" fill="none" stroke="#6a6a6a" stroke-width="4.8" stroke-linecap="round"/>
<path d="M585.3 672.2 L584.5 673.7 L583.3 676.1 L582.1 678.4 L580.5 680.5 L578.9 682.6 L577.5 684.8 L576.1 687.0 L574.7 689.2 L573.8 690.7" fill="none" stroke="#161616" stroke-width="5.0" stroke-linecap="butt" stroke-dasharray="3.2 1.6 3.9 1.8 2.7 1.9 3.3 2.6 2.8 2.7" stroke-dashoffset="0.6"/>
<path d="M588.7 674.3 L587.8 675.8 L586.1 677.8 L584.6 679.9 L583.4 682.3 L582.2 684.7 L580.9 686.9 L579.5 689.1 L578.1 691.3 L577.2 692.8" fill="none" stroke="#6a6a6a" stroke-width="4.8" stroke-linecap="round"/>
<path d="M588.7 674.3 L587.8 675.8 L586.1 677.8 L584.6 679.9 L583.4 682.3 L582.2 684.7 L580.9 686.9 L579.5 689.1 L578.1 691.3 L577.2 692.8" fill="none" stroke="#161616" stroke-width="5.0" stroke-linecap="butt" stroke-dasharray="2.5 1.4 2.1 2.6 3.8 1.5 2.3 1.9 3.8 2.7" stroke-dashoffset="3.7"/>
<path d="M609.0 687.3 L610.1 688.5 L612.0 690.4 L613.8 692.2 L615.7 694.1 L617.5 695.9 L619.5 697.6 L621.5 699.3 L623.4 701.1 L625.4 702.8 L627.1 704.7 L628.8 706.7 L630.6 708.6 L632.3 710.6 L634.1 712.5 L635.9 714.3 L637.8 716.2 L639.6 718.0 L641.5 719.9 L642.7 721.0" fill="none" stroke="#6a6a6a" stroke-width="5.7" stroke-linecap="round"/>
<path d="M609.0 687.3 L610.1 688.5 L612.0 690.4 L613.8 692.2 L615.7 694.1 L617.5 695.9 L619.5 697.6 L621.5 699.3 L623.4 701.1 L625.4 702.8 L627.1 704.7 L628.8 706.7 L630.6 708.6 L632.3 710.6 L634.1 712.5 L635.9 714.3 L637.8 716.2 L639.6 718.0 L641.5 719.9 L642.7 721.0" fill="none" stroke="#161616" stroke-width="6.0" stroke-linecap="butt" stroke-dasharray="2.2 1.9 2.3 2.1 3.3 1.6 2.5 2.6 1.9 2.6" stroke-dashoffset="4.5"/>
<path d="M612.3 684.0 L613.5 685.1 L615.4 687.0 L617.2 688.8 L619.1 690.7 L620.9 692.5 L622.6 694.5 L624.3 696.5 L626.1 698.4 L627.8 700.4 L629.7 702.1 L631.7 703.8 L633.6 705.6 L635.6 707.3 L637.5 709.1 L639.3 710.9 L641.2 712.8 L643.0 714.6 L644.9 716.5 L646.0 717.7" fill="none" stroke="#6a6a6a" stroke-width="5.7" stroke-linecap="round"/>
<path d="M612.3 684.0 L613.5 685.1 L615.4 687.0 L617.2 688.8 L619.1 690.7 L620.9 692.5 L622.6 694.5 L624.3 696.5 L626.1 698.4 L627.8 700.4 L629.7 702.1 L631.7 703.8 L633.6 705.6 L635.6 707.3 L637.5 709.1 L639.3 710.9 L641.2 712.8 L643.0 714.6 L644.9 716.5 L646.0 717.7" fill="none" stroke="#161616" stroke-width="6.0" stroke-linecap="butt" stroke-dasharray="4.4 1.9 3.3 2.2 3.5 3.0 3.7 1.7 4.1 2.1" stroke-dashoffset="3.0"/>
<path d="M474.4 724.3 L476.0 723.5 L478.5 722.4 L481.0 721.3 L483.5 720.1 L486.0 718.9 L488.4 717.5 L490.8 716.2 L493.3 714.9 L495.9 714.0 L498.5 713.1 L499.2 712.3 L499.2 713.7 L500.4 716.1 L501.6 718.6 L502.4 720.2" fill="none" stroke="#6a6a6a" stroke-width="5.7" stroke-linecap="round"/>
<path d="M474.4 724.3 L476.0 723.5 L478.5 722.4 L481.0 721.3 L483.5 720.1 L486.0 718.9 L488.4 717.5 L490.8 716.2 L493.3 714.9 L495.9 714.0 L498.5 713.1 L499.2 712.3 L499.2 713.7 L500.4 716.1 L501.6 718.6 L502.4 720.2" fill="none" stroke="#161616" stroke-width="6.0" stroke-linecap="butt" stroke-dasharray="1.8 2.6 3.6 2.1 3.2 2.0 2.3 2.2 1.9 2.1" stroke-dashoffset="3.2"/>
<path d="M472.4 719.9 L474.0 719.2 L476.5 718.0 L479.0 716.9 L481.6 715.8 L484.1 714.7 L486.7 713.8 L489.3 712.8 L491.9 711.8 L494.3 710.5 L496.8 709.1 L501.0 707.9 L503.4 711.5 L504.7 714.0 L505.9 716.5 L506.7 718.1" fill="none" stroke="#6a6a6a" stroke-width="5.7" stroke-linecap="round"/>
<path d="M472.4 719.9 L474.0 719.2 L476.5 718.0 L479.0 716.9 L481.6 715.8 L484.1 714.7 L486.7 713.8 L489.3 712.8 L491.9 711.8 L494.3 710.5 L496.8 709.1 L501.0 707.9 L503.4 711.5 L504.7 714.0 L505.9 716.5 L506.7 718.1" fill="none" stroke="#161616" stroke-width="6.0" stroke-linecap="butt" stroke-dasharray="3.0 2.2 4.4 2.8 2.2 2.6 3.5 1.3 2.8 1.6" stroke-dashoffset="0.4"/>
<path d="M478.2 742.4 L480.2 742.8 L483.4 742.9 L486.4 744.0 L488.5 744.4" fill="none" stroke="#6a6a6a" stroke-width="5.2" stroke-linecap="round"/>
<path d="M478.2 742.4 L480.2 742.8 L483.4 742.9 L486.4 744.0 L488.5 744.4" fill="none" stroke="#161616" stroke-width="5.5" stroke-linecap="butt" stroke-dasharray="4.3 1.8 4.2 2.5 2.2 2.7 3.4 2.9 3.7 2.5" stroke-dashoffset="1.7"/>
<path d="M479.0 738.1 L481.1 738.5 L484.1 739.6 L487.3 739.7 L489.3 740.1" fill="none" stroke="#6a6a6a" stroke-width="5.2" stroke-linecap="round"/>
<path d="M479.0 738.1 L481.1 738.5 L484.1 739.6 L487.3 739.7 L489.3 740.1" fill="none" stroke="#161616" stroke-width="5.5" stroke-linecap="butt" stroke-dasharray="4.0 2.9 4.1 2.0 3.8 2.1 2.1 1.3 2.0 1.6" stroke-dashoffset="0.8"/>
<path d="M300.8 745.6 L301.0 747.3 L301.5 750.0 L302.1 752.6 L302.8 755.2 L303.2 757.9 L303.3 760.6 L303.5 763.3 L303.9 766.0 L304.3 768.7 L304.6 770.4" fill="none" stroke="#6a6a6a" stroke-width="5.2" stroke-linecap="round"/>
<path d="M300.8 745.6 L301.0 747.3 L301.5 750.0 L302.1 752.6 L302.8 755.2 L303.2 757.9 L303.3 760.6 L303.5 763.3 L303.9 766.0 L304.3 768.7 L304.6 770.4" fill="none" stroke="#161616" stroke-width="5.5" stroke-linecap="butt" stroke-dasharray="3.7 2.2 2.9 2.4 2.6 2.0 3.8 1.9 2.3 2.8" stroke-dashoffset="3.6"/>
<path d="M305.1 744.9 L305.4 746.6 L305.8 749.3 L306.0 752.0 L306.1 754.7 L306.5 757.4 L307.2 760.0 L307.8 762.7 L308.2 765.3 L308.7 768.0 L308.9 769.7" fill="none" stroke="#6a6a6a" stroke-width="5.2" stroke-linecap="round"/>
<path d="M305.1 744.9 L305.4 746.6 L305.8 749.3 L306.0 752.0 L306.1 754.7 L306.5 757.4 L307.2 760.0 L307.8 762.7 L308.2 765.3 L308.7 768.0 L308.9 769.7" fill="none" stroke="#161616" stroke-width="5.5" stroke-linecap="butt" stroke-dasharray="2.8 1.9 3.2 2.3 2.4 1.2 2.4 2.6 2.2 2.0" stroke-dashoffset="1.0"/>
<path d="M343.6 782.7 L345.2 781.9 L347.7 780.3 L350.1 778.8 L352.8 777.8 L355.5 776.8 L358.1 775.5 L360.6 774.2 L362.3 773.4" fill="none" stroke="#6a6a6a" stroke-width="5.2" stroke-linecap="round"/>
<path d="M343.6 782.7 L345.2 781.9 L347.7 780.3 L350.1 778.8 L352.8 777.8 L355.5 776.8 L358.1 775.5 L360.6 774.2 L362.3 773.4" fill="none" stroke="#161616" stroke-width="5.5" stroke-linecap="butt" stroke-dasharray="2.3 1.9 2.3 1.2 2.1 1.5 3.1 1.3 1.9 2.0" stroke-dashoffset="2.0"/>
<path d="M341.6 778.8 L343.3 778.0 L346.0 777.0 L348.7 776.0 L351.1 774.4 L353.5 772.9 L356.1 771.6 L358.7 770.3 L360.3 769.5" fill="none" stroke="#6a6a6a" stroke-width="5.2" stroke-linecap="round"/>
<path d="M341.6 778.8 L343.3 778.0 L346.0 777.0 L348.7 776.0 L351.1 774.4 L353.5 772.9 L356.1 771.6 L358.7 770.3 L360.3 769.5" fill="none" stroke="#161616" stroke-width="5.5" stroke-linecap="butt" stroke-dasharray="3.7 1.3 2.9 1.9 1.9 2.9 2.4 1.4 3.1 1.5" stroke-dashoffset="3.1"/>
<path d="M376.9 763.3 L378.5 763.7 L381.1 764.4 L383.7 764.9 L386.3 765.3 L388.9 765.8 L391.4 766.7 L393.9 767.7 L396.4 768.5 L399.0 769.2 L401.6 769.8 L404.1 770.5 L405.8 771.0" fill="none" stroke="#6a6a6a" stroke-width="5.7" stroke-linecap="round"/>
<path d="M376.9 763.3 L378.5 763.7 L381.1 764.4 L383.7 764.9 L386.3 765.3 L388.9 765.8 L391.4 766.7 L393.9 767.7 L396.4 768.5 L399.0 769.2 L401.6 769.8 L404.1 770.5 L405.8 771.0" fill="none" stroke="#161616" stroke-width="6.0" stroke-linecap="butt" stroke-dasharray="2.1 1.3 3.8 1.7 3.9 2.0 4.3 1.7 2.5 1.7" stroke-dashoffset="4.1"/>
<path d="M378.1 758.6 L379.8 759.1 L382.3 759.8 L384.8 760.6 L387.3 761.6 L389.8 762.5 L392.5 762.9 L395.1 763.3 L397.7 763.9 L400.2 764.5 L402.8 765.2 L405.4 765.9 L407.0 766.3" fill="none" stroke="#6a6a6a" stroke-width="5.7" stroke-linecap="round"/>
<path d="M378.1 758.6 L379.8 759.1 L382.3 759.8 L384.8 760.6 L387.3 761.6 L389.8 762.5 L392.5 762.9 L395.1 763.3 L397.7 763.9 L400.2 764.5 L402.8 765.2 L405.4 765.9 L407.0 766.3" fill="none" stroke="#161616" stroke-width="6.0" stroke-linecap="butt" stroke-dasharray="3.5 1.8 2.1 2.4 4.4 2.3 1.8 1.3 2.0 1.5" stroke-dashoffset="0.2"/>
<path d="M515.2 739.3 L514.6 740.9 L513.7 743.4 L512.9 746.0 L512.2 748.5 L511.4 751.1 L510.5 753.6 L509.5 755.8 L508.6 757.0 L506.5 757.3 L503.9 757.9 L501.4 758.6 L498.8 759.3 L496.3 760.0 L493.7 760.7 L491.1 761.4 L488.6 762.1 L486.0 762.8 L484.3 763.2" fill="none" stroke="#6a6a6a" stroke-width="5.2" stroke-linecap="round"/>
<path d="M515.2 739.3 L514.6 740.9 L513.7 743.4 L512.9 746.0 L512.2 748.5 L511.4 751.1 L510.5 753.6 L509.5 755.8 L508.6 757.0 L506.5 757.3 L503.9 757.9 L501.4 758.6 L498.8 759.3 L496.3 760.0 L493.7 760.7 L491.1 761.4 L488.6 762.1 L486.0 762.8 L484.3 763.2" fill="none" stroke="#161616" stroke-width="5.5" stroke-linecap="butt" stroke-dasharray="3.6 2.8 2.3 3.0 3.1 2.6 4.3 2.9 1.9 1.7" stroke-dashoffset="3.0"/>
<path d="M519.3 740.8 L518.7 742.5 L517.7 744.9 L516.7 747.4 L515.6 749.8 L514.5 752.2 L513.5 754.7 L512.6 757.4 L510.7 760.2 L507.6 761.3 L505.1 762.1 L502.5 762.8 L500.0 763.5 L497.4 764.2 L494.8 764.9 L492.3 765.6 L489.7 766.3 L487.1 767.0 L485.5 767.5" fill="none" stroke="#6a6a6a" stroke-width="5.2" stroke-linecap="round"/>
<path d="M519.3 740.8 L518.7 742.5 L517.7 744.9 L516.7 747.4 L515.6 749.8 L514.5 752.2 L513.5 754.7 L512.6 757.4 L510.7 760.2 L507.6 761.3 L505.1 762.1 L502.5 762.8 L500.0 763.5 L497.4 764.2 L494.8 764.9 L492.3 765.6 L489.7 766.3 L487.1 767.0 L485.5 767.5" fill="none" stroke="#161616" stroke-width="5.5" stroke-linecap="butt" stroke-dasharray="4.4 1.4 2.6 2.7 2.1 1.9 2.7 2.4 4.3 1.5" stroke-dashoffset="3.7"/>
<path d="M573.6 731.6 L574.5 733.2 L575.8 735.6 L577.2 738.0 L578.5 740.4 L579.9 742.8 L581.4 745.1 L583.0 747.4 L584.5 749.7 L585.8 752.1 L586.9 754.6 L588.1 757.1 L589.3 759.6 L590.7 762.0 L592.0 764.4 L593.4 766.8 L594.2 768.3" fill="none" stroke="#6a6a6a" stroke-width="5.7" stroke-linecap="round"/>
<path d="M573.6 731.6 L574.5 733.2 L575.8 735.6 L577.2 738.0 L578.5 740.4 L579.9 742.8 L581.4 745.1 L583.0 747.4 L584.5 749.7 L585.8 752.1 L586.9 754.6 L588.1 757.1 L589.3 759.6 L590.7 762.0 L592.0 764.4 L593.4 766.8 L594.2 768.3" fill="none" stroke="#161616" stroke-width="6.0" stroke-linecap="butt" stroke-dasharray="4.1 2.2 4.3 1.9 2.9 1.6 3.9 2.1 2.5 1.5" stroke-dashoffset="3.6"/>
<path d="M577.8 729.3 L578.6 730.8 L580.0 733.2 L581.3 735.6 L582.7 738.0 L584.0 740.4 L585.2 742.9 L586.3 745.4 L587.5 747.9 L588.9 750.3 L590.5 752.6 L592.0 754.9 L593.5 757.2 L594.8 759.6 L596.2 762.0 L597.5 764.4 L598.4 766.0" fill="none" stroke="#6a6a6a" stroke-width="5.7" stroke-linecap="round"/>
<path d="M577.8 729.3 L578.6 730.8 L580.0 733.2 L581.3 735.6 L582.7 738.0 L584.0 740.4 L585.2 742.9 L586.3 745.4 L587.5 747.9 L588.9 750.3 L590.5 752.6 L592.0 754.9 L593.5 757.2 L594.8 759.6 L596.2 762.0 L597.5 764.4 L598.4 766.0" fill="none" stroke="#161616" stroke-width="6.0" stroke-linecap="butt" stroke-dasharray="3.4 2.5 2.8 2.1 2.2 2.5 1.9 2.0 3.8 2.4" stroke-dashoffset="0.5"/>
<path d="M550.0 751.1 L551.2 752.3 L552.9 754.3 L554.7 756.2 L556.4 758.2 L558.2 760.1 L560.0 762.0 L561.8 763.9 L563.6 765.8 L565.4 767.7 L567.2 769.6 L569.1 771.4 L570.8 773.2 L571.9 775.1 L572.7 777.5 L573.6 780.0 L574.5 782.4 L575.3 784.9 L576.2 787.4 L577.1 789.8 L577.9 792.3 L578.8 794.8 L579.8 797.2 L580.7 799.6 L581.7 802.1 L582.6 804.5 L583.6 806.9 L584.5 809.4 L585.5 811.8 L586.5 814.3 L587.4 816.7 L588.4 819.1 L589.3 821.6 L590.3 824.0 L591.2 826.4 L591.8 828.0" fill="none" stroke="#6a6a6a" stroke-width="5.7" stroke-linecap="round"/>
<path d="M550.0 751.1 L551.2 752.3 L552.9 754.3 L554.7 756.2 L556.4 758.2 L558.2 760.1 L560.0 762.0 L561.8 763.9 L563.6 765.8 L565.4 767.7 L567.2 769.6 L569.1 771.4 L570.8 773.2 L571.9 775.1 L572.7 777.5 L573.6 780.0 L574.5 782.4 L575.3 784.9 L576.2 787.4 L577.1 789.8 L577.9 792.3 L578.8 794.8 L579.8 797.2 L580.7 799.6 L581.7 802.1 L582.6 804.5 L583.6 806.9 L584.5 809.4 L585.5 811.8 L586.5 814.3 L587.4 816.7 L588.4 819.1 L589.3 821.6 L590.3 824.0 L591.2 826.4 L591.8 828.0" fill="none" stroke="#161616" stroke-width="6.0" stroke-linecap="butt" stroke-dasharray="4.1 2.4 4.2 2.8 3.0 2.8 3.8 1.8 2.8 1.3" stroke-dashoffset="2.0"/>
<path d="M553.6 747.9 L554.7 749.1 L556.5 751.1 L558.2 753.0 L560.0 755.0 L561.7 756.9 L563.4 758.9 L565.1 760.9 L566.8 762.9 L568.5 764.9 L570.2 766.9 L571.8 768.9 L573.6 771.1 L574.9 773.7 L576.0 776.2 L577.1 778.6 L578.1 781.0 L579.1 783.4 L580.2 785.8 L581.2 788.2 L582.3 790.6 L583.3 793.0 L584.2 795.5 L585.2 797.9 L586.1 800.3 L587.1 802.8 L588.0 805.2 L589.0 807.6 L590.0 810.1 L590.9 812.5 L591.9 814.9 L592.8 817.4 L593.8 819.8 L594.7 822.3 L595.7 824.7 L596.3 826.3" fill="none" stroke="#6a6a6a" stroke-width="5.7" stroke-linecap="round"/>
<path d="M553.6 747.9 L554.7 749.1 L556.5 751.1 L558.2 753.0 L560.0 755.0 L561.7 756.9 L563.4 758.9 L565.1 760.9 L566.8 762.9 L568.5 764.9 L570.2 766.9 L571.8 768.9 L573.6 771.1 L574.9 773.7 L576.0 776.2 L577.1 778.6 L578.1 781.0 L579.1 783.4 L580.2 785.8 L581.2 788.2 L582.3 790.6 L583.3 793.0 L584.2 795.5 L585.2 797.9 L586.1 800.3 L587.1 802.8 L588.0 805.2 L589.0 807.6 L590.0 810.1 L590.9 812.5 L591.9 814.9 L592.8 817.4 L593.8 819.8 L594.7 822.3 L595.7 824.7 L596.3 826.3" fill="none" stroke="#161616" stroke-width="6.0" stroke-linecap="butt" stroke-dasharray="4.4 1.4 3.3 1.4 2.0 2.4 2.4 1.3 2.2 2.4" stroke-dashoffset="2.9"/>
<path d="M639.8 751.4 L639.4 753.1 L638.7 755.7 L638.2 758.3 L637.6 760.9 L637.0 763.5 L636.1 766.0 L635.1 768.5 L634.2 770.9 L633.4 773.5 L632.6 776.0 L631.9 778.6 L631.1 781.1 L630.4 783.7 L629.6 786.2 L628.9 788.8 L628.4 790.4" fill="none" stroke="#6a6a6a" stroke-width="5.7" stroke-linecap="round"/>
<path d="M639.8 751.4 L639.4 753.1 L638.7 755.7 L638.2 758.3 L637.6 760.9 L637.0 763.5 L636.1 766.0 L635.1 768.5 L634.2 770.9 L633.4 773.5 L632.6 776.0 L631.9 778.6 L631.1 781.1 L630.4 783.7 L629.6 786.2 L628.9 788.8 L628.4 790.4" fill="none" stroke="#161616" stroke-width="6.0" stroke-linecap="butt" stroke-dasharray="2.4 2.9 2.4 2.2 2.9 2.6 3.4 2.6 3.2 1.5" stroke-dashoffset="0.9"/>
<path d="M644.4 752.8 L643.9 754.4 L643.1 756.9 L642.1 759.4 L641.2 761.9 L640.3 764.4 L639.7 767.0 L639.2 769.6 L638.6 772.3 L637.9 774.8 L637.2 777.4 L636.4 779.9 L635.7 782.5 L634.9 785.0 L634.2 787.6 L633.4 790.1 L633.0 791.8" fill="none" stroke="#6a6a6a" stroke-width="5.7" stroke-linecap="round"/>
<path d="M644.4 752.8 L643.9 754.4 L643.1 756.9 L642.1 759.4 L641.2 761.9 L640.3 764.4 L639.7 767.0 L639.2 769.6 L638.6 772.3 L637.9 774.8 L637.2 777.4 L636.4 779.9 L635.7 782.5 L634.9 785.0 L634.2 787.6 L633.4 790.1 L633.0 791.8" fill="none" stroke="#161616" stroke-width="6.0" stroke-linecap="butt" stroke-dasharray="2.0 2.7 2.1 1.2 4.4 1.6 4.2 1.4 3.1 1.6" stroke-dashoffset="4.1"/>
<path d="M611.6 773.8 L611.6 775.6 L611.8 778.4 L612.2 781.2 L611.7 784.0 L611.6 786.8 L611.6 788.6" fill="none" stroke="#6a6a6a" stroke-width="4.8" stroke-linecap="round"/>
<path d="M611.6 773.8 L611.6 775.6 L611.8 778.4 L612.2 781.2 L611.7 784.0 L611.6 786.8 L611.6 788.6" fill="none" stroke="#161616" stroke-width="5.0" stroke-linecap="butt" stroke-dasharray="3.5 2.6 4.2 1.8 3.4 2.0 2.1 2.7 3.4 2.7" stroke-dashoffset="1.0"/>
<path d="M615.6 773.8 L615.6 775.6 L615.4 778.4 L615.0 781.2 L615.5 784.0 L615.6 786.8 L615.6 788.6" fill="none" stroke="#6a6a6a" stroke-width="4.8" stroke-linecap="round"/>
<path d="M615.6 773.8 L615.6 775.6 L615.4 778.4 L615.0 781.2 L615.5 784.0 L615.6 786.8 L615.6 788.6" fill="none" stroke="#161616" stroke-width="5.0" stroke-linecap="butt" stroke-dasharray="3.3 2.0 3.8 1.3 2.7 2.1 2.0 2.2 3.8 2.0" stroke-dashoffset="3.2"/>
<path d="M673.7 756.5 L673.4 758.2 L672.9 760.9 L672.5 763.5 L672.3 766.2 L672.0 768.9 L671.3 771.5 L670.5 774.1 L670.0 776.7 L669.5 779.4 L669.2 781.1" fill="none" stroke="#6a6a6a" stroke-width="5.2" stroke-linecap="round"/>
<path d="M673.7 756.5 L673.4 758.2 L672.9 760.9 L672.5 763.5 L672.3 766.2 L672.0 768.9 L671.3 771.5 L670.5 774.1 L670.0 776.7 L669.5 779.4 L669.2 781.1" fill="none" stroke="#161616" stroke-width="5.5" stroke-linecap="butt" stroke-dasharray="2.4 1.8 4.5 1.8 3.0 1.4 2.4 1.5 4.3 2.5" stroke-dashoffset="4.4"/>
<path d="M678.0 757.3 L677.7 759.0 L677.2 761.7 L676.6 764.3 L675.8 766.9 L675.2 769.5 L675.0 772.2 L674.8 774.9 L674.3 777.5 L673.8 780.2 L673.5 781.9" fill="none" stroke="#6a6a6a" stroke-width="5.2" stroke-linecap="round"/>
<path d="M678.0 757.3 L677.7 759.0 L677.2 761.7 L676.6 764.3 L675.8 766.9 L675.2 769.5 L675.0 772.2 L674.8 774.9 L674.3 777.5 L673.8 780.2 L673.5 781.9" fill="none" stroke="#161616" stroke-width="5.5" stroke-linecap="butt" stroke-dasharray="4.5 2.3 4.3 2.2 2.9 2.9 4.2 2.9 3.1 2.6" stroke-dashoffset="2.0"/>
<path d="M485.9 793.7 L487.4 793.0 L489.8 791.8 L492.1 790.6 L494.4 789.5 L496.8 788.3 L499.1 787.1 L501.5 785.9 L503.8 784.8 L506.2 783.6 L508.5 782.4 L510.9 781.2 L512.8 780.2 L514.8 780.0 L517.3 779.9 L519.9 779.8 L522.5 779.7 L525.2 779.6 L527.8 779.6 L530.4 779.5 L533.0 779.4 L535.6 779.3 L538.3 779.4 L540.3 779.4 L541.4 780.5 L542.8 782.4 L544.4 784.5 L546.0 786.6 L547.5 788.7 L549.1 790.8 L550.7 792.9 L552.4 794.9 L554.0 797.0 L555.7 799.0 L557.3 801.0 L558.4 802.4" fill="none" stroke="#6a6a6a" stroke-width="5.7" stroke-linecap="round"/>
<path d="M485.9 793.7 L487.4 793.0 L489.8 791.8 L492.1 790.6 L494.4 789.5 L496.8 788.3 L499.1 787.1 L501.5 785.9 L503.8 784.8 L506.2 783.6 L508.5 782.4 L510.9 781.2 L512.8 780.2 L514.8 780.0 L517.3 779.9 L519.9 779.8 L522.5 779.7 L525.2 779.6 L527.8 779.6 L530.4 779.5 L533.0 779.4 L535.6 779.3 L538.3 779.4 L540.3 779.4 L541.4 780.5 L542.8 782.4 L544.4 784.5 L546.0 786.6 L547.5 788.7 L549.1 790.8 L550.7 792.9 L552.4 794.9 L554.0 797.0 L555.7 799.0 L557.3 801.0 L558.4 802.4" fill="none" stroke="#161616" stroke-width="6.0" stroke-linecap="butt" stroke-dasharray="4.3 1.7 4.3 1.5 2.1 2.5 2.6 2.1 3.5 1.3" stroke-dashoffset="3.7"/>
<path d="M483.7 789.4 L485.3 788.7 L487.6 787.5 L490.0 786.3 L492.3 785.2 L494.7 784.0 L497.0 782.8 L499.3 781.7 L501.7 780.5 L504.0 779.3 L506.4 778.1 L508.7 777.0 L511.4 775.6 L514.5 775.2 L517.3 775.3 L519.9 775.4 L522.5 775.5 L525.2 775.6 L527.8 775.6 L530.4 775.7 L533.0 775.8 L535.6 775.9 L538.3 775.8 L541.5 775.8 L544.2 777.7 L546.0 779.9 L547.7 781.8 L549.4 783.8 L551.2 785.8 L552.8 787.8 L554.5 789.9 L556.1 791.9 L557.8 794.0 L559.4 796.0 L561.0 798.1 L562.1 799.4" fill="none" stroke="#6a6a6a" stroke-width="5.7" stroke-linecap="round"/>
<path d="M483.7 789.4 L485.3 788.7 L487.6 787.5 L490.0 786.3 L492.3 785.2 L494.7 784.0 L497.0 782.8 L499.3 781.7 L501.7 780.5 L504.0 779.3 L506.4 778.1 L508.7 777.0 L511.4 775.6 L514.5 775.2 L517.3 775.3 L519.9 775.4 L522.5 775.5 L525.2 775.6 L527.8 775.6 L530.4 775.7 L533.0 775.8 L535.6 775.9 L538.3 775.8 L541.5 775.8 L544.2 777.7 L546.0 779.9 L547.7 781.8 L549.4 783.8 L551.2 785.8 L552.8 787.8 L554.5 789.9 L556.1 791.9 L557.8 794.0 L559.4 796.0 L561.0 798.1 L562.1 799.4" fill="none" stroke="#161616" stroke-width="6.0" stroke-linecap="butt" stroke-dasharray="2.5 2.0 2.7 2.5 3.8 1.7 2.1 1.7 2.9 1.3" stroke-dashoffset="0.8"/>
<path d="M536.7 773.6 L536.6 775.3 L536.4 778.0 L536.2 780.6 L536.0 783.3 L535.9 786.0 L535.7 788.6 L535.5 791.3 L535.3 794.0 L535.1 796.7 L535.0 799.3 L534.9 802.0 L534.8 804.5 L534.4 806.4 L533.1 808.5 L531.7 810.7 L530.2 813.0 L528.6 815.1 L527.0 817.3 L525.4 819.4 L523.8 821.5 L522.2 823.7 L520.6 825.8 L519.0 828.0 L517.5 830.2 L516.0 832.4 L514.5 834.6 L513.0 836.8 L511.5 839.0 L509.9 841.2 L509.0 842.7" fill="none" stroke="#6a6a6a" stroke-width="5.7" stroke-linecap="round"/>
<path d="M536.7 773.6 L536.6 775.3 L536.4 778.0 L536.2 780.6 L536.0 783.3 L535.9 786.0 L535.7 788.6 L535.5 791.3 L535.3 794.0 L535.1 796.7 L535.0 799.3 L534.9 802.0 L534.8 804.5 L534.4 806.4 L533.1 808.5 L531.7 810.7 L530.2 813.0 L528.6 815.1 L527.0 817.3 L525.4 819.4 L523.8 821.5 L522.2 823.7 L520.6 825.8 L519.0 828.0 L517.5 830.2 L516.0 832.4 L514.5 834.6 L513.0 836.8 L511.5 839.0 L509.9 841.2 L509.0 842.7" fill="none" stroke="#161616" stroke-width="6.0" stroke-linecap="butt" stroke-dasharray="3.7 3.0 4.4 2.8 2.8 1.5 2.6 2.0 3.2 2.2" stroke-dashoffset="1.8"/>
<path d="M541.5 773.9 L541.4 775.6 L541.2 778.3 L541.0 781.0 L540.8 783.6 L540.6 786.3 L540.4 789.0 L540.3 791.7 L540.1 794.3 L539.9 797.0 L539.6 799.7 L539.3 802.3 L539.0 805.2 L538.0 808.2 L536.2 810.6 L534.6 812.7 L533.0 814.9 L531.6 817.2 L530.2 819.4 L528.7 821.7 L527.3 824.0 L525.9 826.2 L524.5 828.5 L523.0 830.7 L521.5 832.9 L520.0 835.1 L518.4 837.3 L516.9 839.5 L515.4 841.7 L513.9 844.0 L512.9 845.4" fill="none" stroke="#6a6a6a" stroke-width="5.7" stroke-linecap="round"/>
<path d="M541.5 773.9 L541.4 775.6 L541.2 778.3 L541.0 781.0 L540.8 783.6 L540.6 786.3 L540.4 789.0 L540.3 791.7 L540.1 794.3 L539.9 797.0 L539.6 799.7 L539.3 802.3 L539.0 805.2 L538.0 808.2 L536.2 810.6 L534.6 812.7 L533.0 814.9 L531.6 817.2 L530.2 819.4 L528.7 821.7 L527.3 824.0 L525.9 826.2 L524.5 828.5 L523.0 830.7 L521.5 832.9 L520.0 835.1 L518.4 837.3 L516.9 839.5 L515.4 841.7 L513.9 844.0 L512.9 845.4" fill="none" stroke="#161616" stroke-width="6.0" stroke-linecap="butt" stroke-dasharray="4.1 1.7 3.1 2.8 4.0 1.7 2.5 2.7 1.8 1.4" stroke-dashoffset="2.7"/>
<path d="M484.1 789.4 L485.9 790.1 L488.5 791.2 L491.1 792.2 L493.8 793.1 L496.5 794.0 L499.1 795.2 L501.6 796.6 L504.2 797.8 L506.8 798.9 L509.4 800.0 L511.1 800.7" fill="none" stroke="#6a6a6a" stroke-width="4.8" stroke-linecap="round"/>
<path d="M484.1 789.4 L485.9 790.1 L488.5 791.2 L491.1 792.2 L493.8 793.1 L496.5 794.0 L499.1 795.2 L501.6 796.6 L504.2 797.8 L506.8 798.9 L509.4 800.0 L511.1 800.7" fill="none" stroke="#161616" stroke-width="5.0" stroke-linecap="butt" stroke-dasharray="2.2 1.3 2.4 2.6 3.1 3.0 3.9 3.0 1.9 1.5" stroke-dashoffset="0.1"/>
<path d="M485.7 785.7 L487.4 786.4 L490.0 787.5 L492.6 788.7 L495.1 790.0 L497.6 791.3 L500.3 792.2 L503.0 793.1 L505.7 794.1 L508.3 795.2 L510.9 796.3 L512.7 797.0" fill="none" stroke="#6a6a6a" stroke-width="4.8" stroke-linecap="round"/>
<path d="M485.7 785.7 L487.4 786.4 L490.0 787.5 L492.6 788.7 L495.1 790.0 L497.6 791.3 L500.3 792.2 L503.0 793.1 L505.7 794.1 L508.3 795.2 L510.9 796.3 L512.7 797.0" fill="none" stroke="#161616" stroke-width="5.0" stroke-linecap="butt" stroke-dasharray="3.0 1.8 1.9 2.2 2.1 1.8 2.5 2.6 2.9 1.7" stroke-dashoffset="0.2"/>
<path d="M475.0 813.5 L476.7 813.8 L479.3 814.2 L481.9 814.5 L484.6 814.7 L487.2 815.0 L489.8 815.7 L492.4 816.4 L495.0 816.9 L497.6 817.3 L500.2 817.7 L501.9 818.0" fill="none" stroke="#6a6a6a" stroke-width="5.2" stroke-linecap="round"/>
<path d="M475.0 813.5 L476.7 813.8 L479.3 814.2 L481.9 814.5 L484.6 814.7 L487.2 815.0 L489.8 815.7 L492.4 816.4 L495.0 816.9 L497.6 817.3 L500.2 817.7 L501.9 818.0" fill="none" stroke="#161616" stroke-width="5.5" stroke-linecap="butt" stroke-dasharray="3.5 2.4 4.3 2.7 2.5 1.4 3.8 2.6 3.2 2.7" stroke-dashoffset="2.8"/>
<path d="M475.7 809.2 L477.4 809.5 L480.0 809.9 L482.6 810.5 L485.2 811.2 L487.8 811.8 L490.4 812.0 L493.1 812.1 L495.7 812.5 L498.3 813.0 L500.9 813.4 L502.6 813.7" fill="none" stroke="#6a6a6a" stroke-width="5.2" stroke-linecap="round"/>
<path d="M475.7 809.2 L477.4 809.5 L480.0 809.9 L482.6 810.5 L485.2 811.2 L487.8 811.8 L490.4 812.0 L493.1 812.1 L495.7 812.5 L498.3 813.0 L500.9 813.4 L502.6 813.7" fill="none" stroke="#161616" stroke-width="5.5" stroke-linecap="butt" stroke-dasharray="2.6 1.5 1.8 2.4 4.2 2.8 3.1 2.4 4.3 2.7" stroke-dashoffset="3.0"/>
<path d="M485.9 828.1 L487.3 829.0 L489.5 830.5 L491.8 831.9 L494.0 833.3 L496.2 834.7 L498.4 836.2 L500.7 837.5 L502.9 838.8 L505.2 840.2 L507.5 841.5 L509.8 842.8 L512.0 844.2 L514.3 845.5 L516.4 847.1 L518.1 848.1 L518.4 849.9 L518.8 852.3 L519.2 855.0 L519.5 857.6 L520.0 860.2 L520.5 862.7 L521.0 865.3 L521.4 867.9 L521.9 870.5 L522.4 873.1 L522.9 875.7 L523.4 878.3 L523.9 880.9 L524.4 883.5 L524.7 885.1" fill="none" stroke="#6a6a6a" stroke-width="5.7" stroke-linecap="round"/>
<path d="M485.9 828.1 L487.3 829.0 L489.5 830.5 L491.8 831.9 L494.0 833.3 L496.2 834.7 L498.4 836.2 L500.7 837.5 L502.9 838.8 L505.2 840.2 L507.5 841.5 L509.8 842.8 L512.0 844.2 L514.3 845.5 L516.4 847.1 L518.1 848.1 L518.4 849.9 L518.8 852.3 L519.2 855.0 L519.5 857.6 L520.0 860.2 L520.5 862.7 L521.0 865.3 L521.4 867.9 L521.9 870.5 L522.4 873.1 L522.9 875.7 L523.4 878.3 L523.9 880.9 L524.4 883.5 L524.7 885.1" fill="none" stroke="#161616" stroke-width="6.0" stroke-linecap="butt" stroke-dasharray="3.2 1.5 2.3 2.4 4.5 2.2 2.9 1.8 3.0 2.6" stroke-dashoffset="2.3"/>
<path d="M488.5 824.1 L489.9 825.0 L492.1 826.4 L494.3 827.9 L496.6 829.3 L498.8 830.7 L501.0 832.1 L503.2 833.6 L505.3 835.2 L507.5 836.7 L509.6 838.2 L511.8 839.7 L513.9 841.2 L516.1 842.7 L518.4 844.0 L521.1 845.8 L522.4 848.9 L523.0 851.6 L523.6 854.1 L524.2 856.7 L524.7 859.3 L525.2 861.9 L525.7 864.4 L526.2 867.0 L526.6 869.6 L527.1 872.2 L527.6 874.8 L528.1 877.4 L528.6 880.0 L529.1 882.6 L529.4 884.3" fill="none" stroke="#6a6a6a" stroke-width="5.7" stroke-linecap="round"/>
<path d="M488.5 824.1 L489.9 825.0 L492.1 826.4 L494.3 827.9 L496.6 829.3 L498.8 830.7 L501.0 832.1 L503.2 833.6 L505.3 835.2 L507.5 836.7 L509.6 838.2 L511.8 839.7 L513.9 841.2 L516.1 842.7 L518.4 844.0 L521.1 845.8 L522.4 848.9 L523.0 851.6 L523.6 854.1 L524.2 856.7 L524.7 859.3 L525.2 861.9 L525.7 864.4 L526.2 867.0 L526.6 869.6 L527.1 872.2 L527.6 874.8 L528.1 877.4 L528.6 880.0 L529.1 882.6 L529.4 884.3" fill="none" stroke="#161616" stroke-width="6.0" stroke-linecap="butt" stroke-dasharray="4.4 1.5 2.7 2.1 2.9 2.7 4.0 2.9 3.5 1.3" stroke-dashoffset="2.9"/>
<path d="M551.3 829.7 L550.2 831.0 L548.6 833.1 L546.9 835.1 L545.4 837.3 L543.9 839.4 L542.4 841.6 L540.6 843.5 L538.8 845.4 L536.9 847.3 L535.3 849.3 L533.6 851.3 L532.0 853.4 L530.9 854.7" fill="none" stroke="#6a6a6a" stroke-width="5.2" stroke-linecap="round"/>
<path d="M551.3 829.7 L550.2 831.0 L548.6 833.1 L546.9 835.1 L545.4 837.3 L543.9 839.4 L542.4 841.6 L540.6 843.5 L538.8 845.4 L536.9 847.3 L535.3 849.3 L533.6 851.3 L532.0 853.4 L530.9 854.7" fill="none" stroke="#161616" stroke-width="5.5" stroke-linecap="butt" stroke-dasharray="3.1 1.7 3.7 2.8 2.1 2.4 2.8 2.1 4.2 2.9" stroke-dashoffset="3.2"/>
<path d="M554.7 832.5 L553.6 833.8 L552.0 835.9 L550.3 837.9 L548.5 839.8 L546.7 841.7 L544.8 843.6 L543.3 845.7 L541.8 847.9 L540.3 850.1 L538.7 852.1 L537.0 854.1 L535.4 856.2 L534.3 857.5" fill="none" stroke="#6a6a6a" stroke-width="5.2" stroke-linecap="round"/>
<path d="M554.7 832.5 L553.6 833.8 L552.0 835.9 L550.3 837.9 L548.5 839.8 L546.7 841.7 L544.8 843.6 L543.3 845.7 L541.8 847.9 L540.3 850.1 L538.7 852.1 L537.0 854.1 L535.4 856.2 L534.3 857.5" fill="none" stroke="#161616" stroke-width="5.5" stroke-linecap="butt" stroke-dasharray="2.3 2.9 2.3 1.9 4.0 1.8 2.5 2.9 4.3 1.8" stroke-dashoffset="2.0"/>
<path d="M575.0 832.6 L574.3 834.2 L573.2 836.6 L572.1 839.0 L570.9 841.4 L569.8 843.8 L568.8 846.2 L567.7 848.7 L566.7 851.1 L565.7 853.5 L564.6 856.0 L563.6 858.4 L562.6 860.9 L561.4 863.3 L560.2 865.6 L559.0 868.0 L557.7 870.3 L556.5 872.7 L555.3 875.0 L554.1 877.4 L552.9 879.8 L551.8 882.2 L550.7 884.6 L549.6 887.0 L548.4 889.4 L547.3 891.8 L546.2 894.2 L545.1 896.6 L543.9 899.0 L542.8 901.4 L541.7 903.8 L540.6 906.2 L539.8 907.7" fill="none" stroke="#6a6a6a" stroke-width="5.7" stroke-linecap="round"/>
<path d="M575.0 832.6 L574.3 834.2 L573.2 836.6 L572.1 839.0 L570.9 841.4 L569.8 843.8 L568.8 846.2 L567.7 848.7 L566.7 851.1 L565.7 853.5 L564.6 856.0 L563.6 858.4 L562.6 860.9 L561.4 863.3 L560.2 865.6 L559.0 868.0 L557.7 870.3 L556.5 872.7 L555.3 875.0 L554.1 877.4 L552.9 879.8 L551.8 882.2 L550.7 884.6 L549.6 887.0 L548.4 889.4 L547.3 891.8 L546.2 894.2 L545.1 896.6 L543.9 899.0 L542.8 901.4 L541.7 903.8 L540.6 906.2 L539.8 907.7" fill="none" stroke="#161616" stroke-width="6.0" stroke-linecap="butt" stroke-dasharray="2.2 1.7 4.4 1.3 2.4 1.6 2.0 2.1 3.8 2.7" stroke-dashoffset="3.2"/>
<path d="M579.4 834.7 L578.6 836.2 L577.5 838.6 L576.4 841.0 L575.3 843.4 L574.1 845.8 L572.9 848.2 L571.7 850.5 L570.5 852.9 L569.3 855.3 L568.1 857.6 L566.9 860.0 L565.6 862.3 L564.6 864.7 L563.5 867.2 L562.5 869.6 L561.5 872.1 L560.4 874.5 L559.4 877.0 L558.4 879.4 L557.3 881.8 L556.1 884.2 L555.0 886.6 L553.9 889.0 L552.8 891.4 L551.6 893.8 L550.5 896.2 L549.4 898.6 L548.3 901.0 L547.1 903.4 L546.0 905.8 L544.9 908.2 L544.2 909.8" fill="none" stroke="#6a6a6a" stroke-width="5.7" stroke-linecap="round"/>
<path d="M579.4 834.7 L578.6 836.2 L577.5 838.6 L576.4 841.0 L575.3 843.4 L574.1 845.8 L572.9 848.2 L571.7 850.5 L570.5 852.9 L569.3 855.3 L568.1 857.6 L566.9 860.0 L565.6 862.3 L564.6 864.7 L563.5 867.2 L562.5 869.6 L561.5 872.1 L560.4 874.5 L559.4 877.0 L558.4 879.4 L557.3 881.8 L556.1 884.2 L555.0 886.6 L553.9 889.0 L552.8 891.4 L551.6 893.8 L550.5 896.2 L549.4 898.6 L548.3 901.0 L547.1 903.4 L546.0 905.8 L544.9 908.2 L544.2 909.8" fill="none" stroke="#161616" stroke-width="6.0" stroke-linecap="butt" stroke-dasharray="4.0 1.2 2.6 2.9 2.0 1.7 3.1 1.7 3.3 1.3" stroke-dashoffset="1.2"/>
<path d="M594.5 858.8 L593.5 860.3 L592.1 862.5 L590.6 864.7 L589.2 867.0 L587.8 869.2 L586.4 871.5 L585.1 873.9 L583.9 876.2 L582.5 878.5 L580.9 880.6 L579.3 882.8 L577.7 884.9 L576.2 887.1 L574.8 889.4 L573.9 890.8" fill="none" stroke="#6a6a6a" stroke-width="5.2" stroke-linecap="round"/>
<path d="M594.5 858.8 L593.5 860.3 L592.1 862.5 L590.6 864.7 L589.2 867.0 L587.8 869.2 L586.4 871.5 L585.1 873.9 L583.9 876.2 L582.5 878.5 L580.9 880.6 L579.3 882.8 L577.7 884.9 L576.2 887.1 L574.8 889.4 L573.9 890.8" fill="none" stroke="#161616" stroke-width="5.5" stroke-linecap="butt" stroke-dasharray="2.2 2.8 2.3 3.0 3.6 2.4 2.2 1.3 3.9 1.5" stroke-dashoffset="0.9"/>
<path d="M598.1 861.2 L597.2 862.6 L595.8 864.9 L594.3 867.1 L592.9 869.3 L591.4 871.6 L589.9 873.8 L588.3 875.9 L586.7 878.0 L585.2 880.2 L583.9 882.6 L582.6 884.9 L581.3 887.3 L579.9 889.5 L578.5 891.7 L577.5 893.2" fill="none" stroke="#6a6a6a" stroke-width="5.2" stroke-linecap="round"/>
<path d="M598.1 861.2 L597.2 862.6 L595.8 864.9 L594.3 867.1 L592.9 869.3 L591.4 871.6 L589.9 873.8 L588.3 875.9 L586.7 878.0 L585.2 880.2 L583.9 882.6 L582.6 884.9 L581.3 887.3 L579.9 889.5 L578.5 891.7 L577.5 893.2" fill="none" stroke="#161616" stroke-width="5.5" stroke-linecap="butt" stroke-dasharray="4.0 2.8 1.9 2.9 3.2 1.9 2.1 1.9 4.5 1.7" stroke-dashoffset="0.7"/>
<path d="M620.7 826.3 L620.6 828.0 L620.3 830.7 L620.2 833.3 L620.1 836.0 L620.0 838.6 L619.9 841.3 L619.8 843.9 L619.4 846.6 L619.0 849.2 L618.6 851.8 L618.2 854.4 L617.9 857.1 L617.7 859.7 L617.5 862.3 L617.2 865.0 L617.0 867.6 L616.7 870.3 L616.5 872.9 L616.3 875.5 L616.1 877.3" fill="none" stroke="#6a6a6a" stroke-width="5.7" stroke-linecap="round"/>
<path d="M620.7 826.3 L620.6 828.0 L620.3 830.7 L620.2 833.3 L620.1 836.0 L620.0 838.6 L619.9 841.3 L619.8 843.9 L619.4 846.6 L619.0 849.2 L618.6 851.8 L618.2 854.4 L617.9 857.1 L617.7 859.7 L617.5 862.3 L617.2 865.0 L617.0 867.6 L616.7 870.3 L616.5 872.9 L616.3 875.5 L616.1 877.3" fill="none" stroke="#161616" stroke-width="6.0" stroke-linecap="butt" stroke-dasharray="2.1 1.8 4.3 1.3 2.3 2.9 4.5 3.0 2.5 1.8" stroke-dashoffset="4.8"/>
<path d="M625.5 826.7 L625.3 828.5 L625.1 831.1 L624.8 833.7 L624.4 836.4 L624.0 839.0 L623.6 841.6 L623.2 844.2 L623.1 846.9 L623.1 849.5 L623.0 852.2 L622.9 854.9 L622.7 857.5 L622.5 860.1 L622.2 862.8 L622.0 865.4 L621.7 868.1 L621.5 870.7 L621.3 873.3 L621.0 876.0 L620.9 877.7" fill="none" stroke="#6a6a6a" stroke-width="5.7" stroke-linecap="round"/>
<path d="M625.5 826.7 L625.3 828.5 L625.1 831.1 L624.8 833.7 L624.4 836.4 L624.0 839.0 L623.6 841.6 L623.2 844.2 L623.1 846.9 L623.1 849.5 L623.0 852.2 L622.9 854.9 L622.7 857.5 L622.5 860.1 L622.2 862.8 L622.0 865.4 L621.7 868.1 L621.5 870.7 L621.3 873.3 L621.0 876.0 L620.9 877.7" fill="none" stroke="#161616" stroke-width="6.0" stroke-linecap="butt" stroke-dasharray="3.1 2.5 2.6 1.2 2.7 2.5 3.9 2.2 3.1 2.2" stroke-dashoffset="2.2"/>
<path d="M505.5 893.3 L505.2 894.9 L504.7 897.5 L504.2 900.0 L503.8 902.6 L503.5 905.2 L503.3 907.8 L503.0 910.4 L502.3 912.9 L501.6 915.4 L500.9 918.0 L500.4 920.5 L499.9 923.1 L499.4 925.6 L498.9 928.2 L498.6 929.9" fill="none" stroke="#6a6a6a" stroke-width="5.7" stroke-linecap="round"/>
<path d="M505.5 893.3 L505.2 894.9 L504.7 897.5 L504.2 900.0 L503.8 902.6 L503.5 905.2 L503.3 907.8 L503.0 910.4 L502.3 912.9 L501.6 915.4 L500.9 918.0 L500.4 920.5 L499.9 923.1 L499.4 925.6 L498.9 928.2 L498.6 929.9" fill="none" stroke="#161616" stroke-width="6.0" stroke-linecap="butt" stroke-dasharray="4.0 1.6 3.4 2.9 4.1 1.5 4.4 2.7 2.3 1.7" stroke-dashoffset="1.0"/>
<path d="M510.2 894.1 L509.9 895.8 L509.4 898.4 L508.9 900.9 L508.3 903.5 L507.7 906.0 L507.0 908.5 L506.3 911.0 L506.0 913.6 L505.8 916.2 L505.5 918.8 L505.1 921.4 L504.6 924.0 L504.1 926.5 L503.6 929.1 L503.3 930.7" fill="none" stroke="#6a6a6a" stroke-width="5.7" stroke-linecap="round"/>
<path d="M510.2 894.1 L509.9 895.8 L509.4 898.4 L508.9 900.9 L508.3 903.5 L507.7 906.0 L507.0 908.5 L506.3 911.0 L506.0 913.6 L505.8 916.2 L505.5 918.8 L505.1 921.4 L504.6 924.0 L504.1 926.5 L503.6 929.1 L503.3 930.7" fill="none" stroke="#161616" stroke-width="6.0" stroke-linecap="butt" stroke-dasharray="1.9 3.0 2.9 2.8 2.1 1.2 4.1 2.6 4.5 2.4" stroke-dashoffset="2.6"/>
<path d="M602.2 910.1 L600.6 910.8 L598.1 911.8 L595.6 912.9 L593.0 913.9 L590.5 914.9 L588.0 916.0 L585.5 917.1 L583.1 918.2 L580.6 919.4 L578.2 920.6 L575.7 921.7 L573.1 922.7 L570.6 923.6 L568.0 924.4 L565.4 925.3 L562.9 926.2 L560.4 927.3 L557.8 928.3 L555.3 929.3 L552.8 930.4 L551.2 931.0" fill="none" stroke="#6a6a6a" stroke-width="5.7" stroke-linecap="round"/>
<path d="M602.2 910.1 L600.6 910.8 L598.1 911.8 L595.6 912.9 L593.0 913.9 L590.5 914.9 L588.0 916.0 L585.5 917.1 L583.1 918.2 L580.6 919.4 L578.2 920.6 L575.7 921.7 L573.1 922.7 L570.6 923.6 L568.0 924.4 L565.4 925.3 L562.9 926.2 L560.4 927.3 L557.8 928.3 L555.3 929.3 L552.8 930.4 L551.2 931.0" fill="none" stroke="#161616" stroke-width="6.0" stroke-linecap="butt" stroke-dasharray="2.0 2.2 3.0 1.5 3.4 1.8 3.2 1.9 2.7 1.8" stroke-dashoffset="3.0"/>
<path d="M604.0 914.6 L602.4 915.2 L599.9 916.3 L597.4 917.3 L594.8 918.3 L592.3 919.4 L589.8 920.4 L587.3 921.3 L584.7 922.2 L582.1 923.1 L579.6 924.0 L577.0 924.9 L574.5 926.0 L572.1 927.2 L569.6 928.4 L567.1 929.5 L564.7 930.7 L562.2 931.7 L559.6 932.7 L557.1 933.8 L554.6 934.8 L553.0 935.5" fill="none" stroke="#6a6a6a" stroke-width="5.7" stroke-linecap="round"/>
<path d="M604.0 914.6 L602.4 915.2 L599.9 916.3 L597.4 917.3 L594.8 918.3 L592.3 919.4 L589.8 920.4 L587.3 921.3 L584.7 922.2 L582.1 923.1 L579.6 924.0 L577.0 924.9 L574.5 926.0 L572.1 927.2 L569.6 928.4 L567.1 929.5 L564.7 930.7 L562.2 931.7 L559.6 932.7 L557.1 933.8 L554.6 934.8 L553.0 935.5" fill="none" stroke="#161616" stroke-width="6.0" stroke-linecap="butt" stroke-dasharray="4.4 2.9 4.1 2.7 2.6 3.0 2.5 1.4 3.2 2.5" stroke-dashoffset="1.7"/>
<path d="M500.1 855.8 L501.6 855.2 L504.0 854.1 L506.3 852.9 L508.6 851.5 L511.0 850.5 L513.6 849.7 L516.0 848.8 L518.4 847.7 L520.0 847.0" fill="none" stroke="#6a6a6a" stroke-width="4.8" stroke-linecap="round"/>
<path d="M500.1 855.8 L501.6 855.2 L504.0 854.1 L506.3 852.9 L508.6 851.5 L511.0 850.5 L513.6 849.7 L516.0 848.8 L518.4 847.7 L520.0 847.0" fill="none" stroke="#161616" stroke-width="5.0" stroke-linecap="butt" stroke-dasharray="2.6 2.9 3.0 2.1 3.2 2.8 4.5 2.2 3.0 2.3" stroke-dashoffset="0.3"/>
<path d="M498.4 852.2 L500.0 851.5 L502.4 850.4 L504.9 849.5 L507.4 848.7 L509.8 847.6 L512.0 846.3 L514.4 845.1 L516.8 844.0 L518.3 843.4" fill="none" stroke="#6a6a6a" stroke-width="4.8" stroke-linecap="round"/>
<path d="M498.4 852.2 L500.0 851.5 L502.4 850.4 L504.9 849.5 L507.4 848.7 L509.8 847.6 L512.0 846.3 L514.4 845.1 L516.8 844.0 L518.3 843.4" fill="none" stroke="#161616" stroke-width="5.0" stroke-linecap="butt" stroke-dasharray="2.9 2.7 3.9 1.3 4.1 1.9 4.4 1.9 2.4 2.2" stroke-dashoffset="4.4"/>
</g></g>
</svg>
<svg class="a" style="left:756.7px;top:552.5px" width="243.3" height="383" viewBox="756.7 552.5 243.3 383">
<g filter="url(#b3)"><g id="spD" stroke-linejoin="round">
<path d="M935.5 592.3 L934.1 593.3 L931.9 594.8 L929.8 596.3 L927.6 597.9 L925.4 599.4 L923.2 600.9 L921.1 602.6 L919.0 604.2 L916.9 605.8 L914.8 607.5 L912.7 609.1 L910.4 610.5 L908.1 611.9 L905.9 613.3 L903.6 614.7 L901.4 616.2 L899.2 617.7 L897.0 619.2 L894.8 620.8 L892.7 622.3 L890.5 623.8 L889.1 624.8" fill="none" stroke="#626262" stroke-width="5.4" stroke-linecap="round"/>
<path d="M935.5 592.3 L934.1 593.3 L931.9 594.8 L929.8 596.3 L927.6 597.9 L925.4 599.4 L923.2 600.9 L921.1 602.6 L919.0 604.2 L916.9 605.8 L914.8 607.5 L912.7 609.1 L910.4 610.5 L908.1 611.9 L905.9 613.3 L903.6 614.7 L901.4 616.2 L899.2 617.7 L897.0 619.2 L894.8 620.8 L892.7 622.3 L890.5 623.8 L889.1 624.8" fill="none" stroke="#121212" stroke-width="5.7" stroke-linecap="butt" stroke-dasharray="3.8 2.6 4.3 2.5 4.3 1.3 3.1 2.9 3.6 2.8" stroke-dashoffset="0.6"/>
<path d="M938.1 596.0 L936.7 597.0 L934.5 598.5 L932.4 600.0 L930.2 601.6 L928.0 603.1 L925.8 604.6 L923.5 606.0 L921.3 607.4 L919.0 608.8 L916.7 610.3 L914.5 611.7 L912.4 613.4 L910.3 615.0 L908.2 616.7 L906.1 618.3 L904.0 619.9 L901.8 621.4 L899.6 622.9 L897.4 624.5 L895.3 626.0 L893.1 627.5 L891.7 628.5" fill="none" stroke="#626262" stroke-width="5.4" stroke-linecap="round"/>
<path d="M938.1 596.0 L936.7 597.0 L934.5 598.5 L932.4 600.0 L930.2 601.6 L928.0 603.1 L925.8 604.6 L923.5 606.0 L921.3 607.4 L919.0 608.8 L916.7 610.3 L914.5 611.7 L912.4 613.4 L910.3 615.0 L908.2 616.7 L906.1 618.3 L904.0 619.9 L901.8 621.4 L899.6 622.9 L897.4 624.5 L895.3 626.0 L893.1 627.5 L891.7 628.5" fill="none" stroke="#121212" stroke-width="5.7" stroke-linecap="butt" stroke-dasharray="3.1 1.6 3.3 2.2 1.8 1.6 2.6 2.8 3.9 1.5" stroke-dashoffset="4.0"/>
<path d="M942.9 619.2 L941.6 620.3 L939.7 622.3 L937.6 624.0 L935.4 625.4 L933.3 627.1 L931.2 628.8 L929.9 629.9" fill="none" stroke="#626262" stroke-width="4.5" stroke-linecap="round"/>
<path d="M942.9 619.2 L941.6 620.3 L939.7 622.3 L937.6 624.0 L935.4 625.4 L933.3 627.1 L931.2 628.8 L929.9 629.9" fill="none" stroke="#121212" stroke-width="4.7" stroke-linecap="butt" stroke-dasharray="3.5 1.4 1.8 2.8 2.4 1.6 4.5 2.8 2.6 2.9" stroke-dashoffset="2.7"/>
<path d="M945.3 622.0 L943.9 623.1 L941.6 624.6 L939.6 626.3 L937.8 628.3 L935.7 630.0 L933.7 631.7 L932.3 632.9" fill="none" stroke="#626262" stroke-width="4.5" stroke-linecap="round"/>
<path d="M945.3 622.0 L943.9 623.1 L941.6 624.6 L939.6 626.3 L937.8 628.3 L935.7 630.0 L933.7 631.7 L932.3 632.9" fill="none" stroke="#121212" stroke-width="4.7" stroke-linecap="butt" stroke-dasharray="3.6 1.6 4.3 2.4 4.4 2.8 2.6 1.9 2.2 1.5" stroke-dashoffset="0.3"/>
<path d="M979.7 574.2 L980.8 575.6 L982.6 577.8 L984.6 579.8 L986.5 581.8 L988.5 583.8 L990.1 586.1 L991.7 588.4 L993.3 590.7 L995.1 592.8 L996.9 595.0 L998.7 597.1 L1000.5 599.3 L1001.6 600.7" fill="none" stroke="#626262" stroke-width="5.4" stroke-linecap="round"/>
<path d="M979.7 574.2 L980.8 575.6 L982.6 577.8 L984.6 579.8 L986.5 581.8 L988.5 583.8 L990.1 586.1 L991.7 588.4 L993.3 590.7 L995.1 592.8 L996.9 595.0 L998.7 597.1 L1000.5 599.3 L1001.6 600.7" fill="none" stroke="#121212" stroke-width="5.7" stroke-linecap="butt" stroke-dasharray="3.4 1.2 3.6 1.8 2.6 2.7 3.1 1.8 3.1 2.5" stroke-dashoffset="0.3"/>
<path d="M983.2 571.3 L984.3 572.7 L986.1 574.9 L987.8 577.1 L989.4 579.4 L991.0 581.7 L992.9 583.8 L994.9 585.8 L996.8 587.8 L998.6 589.9 L1000.4 592.1 L1002.2 594.2 L1004.0 596.4 L1005.1 597.8" fill="none" stroke="#626262" stroke-width="5.4" stroke-linecap="round"/>
<path d="M983.2 571.3 L984.3 572.7 L986.1 574.9 L987.8 577.1 L989.4 579.4 L991.0 581.7 L992.9 583.8 L994.9 585.8 L996.8 587.8 L998.6 589.9 L1000.4 592.1 L1002.2 594.2 L1004.0 596.4 L1005.1 597.8" fill="none" stroke="#121212" stroke-width="5.7" stroke-linecap="butt" stroke-dasharray="4.4 1.2 3.8 2.7 1.8 2.6 2.8 2.2 1.8 1.3" stroke-dashoffset="0.9"/>
<path d="M988.3 616.4 L988.5 618.2 L988.8 621.0 L989.2 623.7 L989.5 626.5 L989.9 629.2 L990.4 631.9 L991.0 634.6 L991.5 637.3 L991.7 640.1 L991.9 642.9 L992.0 645.6 L992.3 648.4 L992.6 651.1 L992.8 652.9" fill="none" stroke="#626262" stroke-width="5.4" stroke-linecap="round"/>
<path d="M988.3 616.4 L988.5 618.2 L988.8 621.0 L989.2 623.7 L989.5 626.5 L989.9 629.2 L990.4 631.9 L991.0 634.6 L991.5 637.3 L991.7 640.1 L991.9 642.9 L992.0 645.6 L992.3 648.4 L992.6 651.1 L992.8 652.9" fill="none" stroke="#121212" stroke-width="5.7" stroke-linecap="butt" stroke-dasharray="2.3 2.6 4.3 2.9 2.7 1.8 3.2 2.6 2.1 2.5" stroke-dashoffset="4.0"/>
<path d="M992.8 615.9 L993.0 617.7 L993.3 620.4 L993.7 623.1 L994.0 625.9 L994.4 628.6 L994.5 631.4 L994.6 634.2 L994.8 636.9 L995.2 639.7 L995.8 642.4 L996.4 645.1 L996.8 647.8 L997.1 650.6 L997.3 652.4" fill="none" stroke="#626262" stroke-width="5.4" stroke-linecap="round"/>
<path d="M992.8 615.9 L993.0 617.7 L993.3 620.4 L993.7 623.1 L994.0 625.9 L994.4 628.6 L994.5 631.4 L994.6 634.2 L994.8 636.9 L995.2 639.7 L995.8 642.4 L996.4 645.1 L996.8 647.8 L997.1 650.6 L997.3 652.4" fill="none" stroke="#121212" stroke-width="5.7" stroke-linecap="butt" stroke-dasharray="4.1 1.3 4.4 1.4 2.7 2.3 4.3 1.8 4.3 2.2" stroke-dashoffset="1.6"/>
<path d="M821.3 679.7 L823.1 679.4 L825.8 678.9 L828.5 678.3 L831.2 677.6 L833.9 677.0 L836.6 676.3 L839.4 676.0 L842.1 675.7 L844.9 675.5 L847.6 675.0 L850.3 674.6 L853.0 674.1 L855.8 673.6 L858.5 673.1 L860.2 672.8" fill="none" stroke="#626262" stroke-width="5.4" stroke-linecap="round"/>
<path d="M821.3 679.7 L823.1 679.4 L825.8 678.9 L828.5 678.3 L831.2 677.6 L833.9 677.0 L836.6 676.3 L839.4 676.0 L842.1 675.7 L844.9 675.5 L847.6 675.0 L850.3 674.6 L853.0 674.1 L855.8 673.6 L858.5 673.1 L860.2 672.8" fill="none" stroke="#121212" stroke-width="5.7" stroke-linecap="butt" stroke-dasharray="2.3 1.3 2.2 2.4 4.5 1.5 1.9 3.0 3.2 1.9" stroke-dashoffset="1.2"/>
<path d="M820.6 675.2 L822.3 674.9 L825.0 674.4 L827.8 674.0 L830.5 673.7 L833.3 673.4 L836.0 673.1 L838.7 672.5 L841.4 671.8 L844.1 671.1 L846.8 670.6 L849.5 670.1 L852.2 669.6 L855.0 669.1 L857.7 668.6 L859.5 668.3" fill="none" stroke="#626262" stroke-width="5.4" stroke-linecap="round"/>
<path d="M820.6 675.2 L822.3 674.9 L825.0 674.4 L827.8 674.0 L830.5 673.7 L833.3 673.4 L836.0 673.1 L838.7 672.5 L841.4 671.8 L844.1 671.1 L846.8 670.6 L849.5 670.1 L852.2 669.6 L855.0 669.1 L857.7 668.6 L859.5 668.3" fill="none" stroke="#121212" stroke-width="5.7" stroke-linecap="butt" stroke-dasharray="3.4 2.7 3.0 2.0 2.0 2.8 1.9 2.1 4.1 1.4" stroke-dashoffset="3.7"/>
<path d="M888.7 672.2 L890.4 671.7 L893.0 671.0 L895.7 670.2 L898.3 669.4 L900.8 668.4 L903.4 667.5 L906.1 667.1 L908.9 666.6 L911.5 665.9 L913.2 665.5" fill="none" stroke="#626262" stroke-width="5.0" stroke-linecap="round"/>
<path d="M888.7 672.2 L890.4 671.7 L893.0 671.0 L895.7 670.2 L898.3 669.4 L900.8 668.4 L903.4 667.5 L906.1 667.1 L908.9 666.6 L911.5 665.9 L913.2 665.5" fill="none" stroke="#121212" stroke-width="5.2" stroke-linecap="butt" stroke-dasharray="3.5 2.6 2.1 2.0 2.2 2.7 2.6 2.0 4.5 2.7" stroke-dashoffset="4.9"/>
<path d="M887.6 668.1 L889.3 667.7 L891.9 667.0 L894.6 666.2 L897.2 665.6 L900.0 665.2 L902.6 664.6 L905.2 663.6 L907.8 662.6 L910.4 661.9 L912.1 661.4" fill="none" stroke="#626262" stroke-width="5.0" stroke-linecap="round"/>
<path d="M887.6 668.1 L889.3 667.7 L891.9 667.0 L894.6 666.2 L897.2 665.6 L900.0 665.2 L902.6 664.6 L905.2 663.6 L907.8 662.6 L910.4 661.9 L912.1 661.4" fill="none" stroke="#121212" stroke-width="5.2" stroke-linecap="butt" stroke-dasharray="3.0 2.1 3.8 2.1 2.6 1.9 2.2 1.9 4.5 2.9" stroke-dashoffset="3.1"/>
<path d="M924.8 670.0 L926.0 671.3 L927.8 673.4 L929.8 675.3 L931.7 677.3 L933.3 679.7 L935.0 681.8 L936.8 683.9 L937.9 685.3" fill="none" stroke="#626262" stroke-width="4.5" stroke-linecap="round"/>
<path d="M924.8 670.0 L926.0 671.3 L927.8 673.4 L929.8 675.3 L931.7 677.3 L933.3 679.7 L935.0 681.8 L936.8 683.9 L937.9 685.3" fill="none" stroke="#121212" stroke-width="4.7" stroke-linecap="butt" stroke-dasharray="2.7 1.4 2.5 2.6 4.1 1.9 3.9 2.6 3.7 2.4" stroke-dashoffset="3.8"/>
<path d="M927.7 667.5 L928.8 668.9 L930.6 671.0 L932.2 673.3 L933.9 675.5 L935.9 677.3 L937.8 679.4 L939.6 681.5 L940.8 682.8" fill="none" stroke="#626262" stroke-width="4.5" stroke-linecap="round"/>
<path d="M927.7 667.5 L928.8 668.9 L930.6 671.0 L932.2 673.3 L933.9 675.5 L935.9 677.3 L937.8 679.4 L939.6 681.5 L940.8 682.8" fill="none" stroke="#121212" stroke-width="4.7" stroke-linecap="butt" stroke-dasharray="2.8 2.5 2.6 2.1 3.9 2.4 2.6 2.9 3.6 2.2" stroke-dashoffset="0.1"/>
<path d="M959.2 654.0 L958.8 655.7 L958.3 658.4 L957.7 661.0 L957.1 663.6 L956.6 666.2 L956.0 668.8 L955.6 671.5 L955.1 674.1 L954.7 676.8 L954.2 679.4 L953.8 682.1 L953.3 684.6 L952.6 686.4 L950.7 687.5 L948.5 689.0 L946.3 690.5 L944.0 692.0 L941.8 693.5 L939.7 695.1 L937.5 696.7 L935.3 698.3 L933.2 699.8 L931.0 701.4 L928.8 703.0 L927.4 704.0" fill="none" stroke="#626262" stroke-width="5.4" stroke-linecap="round"/>
<path d="M959.2 654.0 L958.8 655.7 L958.3 658.4 L957.7 661.0 L957.1 663.6 L956.6 666.2 L956.0 668.8 L955.6 671.5 L955.1 674.1 L954.7 676.8 L954.2 679.4 L953.8 682.1 L953.3 684.6 L952.6 686.4 L950.7 687.5 L948.5 689.0 L946.3 690.5 L944.0 692.0 L941.8 693.5 L939.7 695.1 L937.5 696.7 L935.3 698.3 L933.2 699.8 L931.0 701.4 L928.8 703.0 L927.4 704.0" fill="none" stroke="#121212" stroke-width="5.7" stroke-linecap="butt" stroke-dasharray="2.5 2.4 3.0 2.7 3.5 2.6 2.7 2.4 3.8 2.7" stroke-dashoffset="1.8"/>
<path d="M963.6 655.0 L963.3 656.7 L962.7 659.3 L962.1 661.9 L961.6 664.6 L961.0 667.2 L960.4 669.8 L959.8 672.4 L959.1 675.0 L958.4 677.6 L957.7 680.2 L957.0 682.8 L956.4 685.5 L955.4 688.5 L953.0 690.6 L950.9 692.3 L948.8 693.9 L946.7 695.6 L944.5 697.2 L942.3 698.8 L940.2 700.4 L938.0 701.9 L935.8 703.5 L933.7 705.1 L931.5 706.7 L930.1 707.7" fill="none" stroke="#626262" stroke-width="5.4" stroke-linecap="round"/>
<path d="M963.6 655.0 L963.3 656.7 L962.7 659.3 L962.1 661.9 L961.6 664.6 L961.0 667.2 L960.4 669.8 L959.8 672.4 L959.1 675.0 L958.4 677.6 L957.7 680.2 L957.0 682.8 L956.4 685.5 L955.4 688.5 L953.0 690.6 L950.9 692.3 L948.8 693.9 L946.7 695.6 L944.5 697.2 L942.3 698.8 L940.2 700.4 L938.0 701.9 L935.8 703.5 L933.7 705.1 L931.5 706.7 L930.1 707.7" fill="none" stroke="#121212" stroke-width="5.7" stroke-linecap="butt" stroke-dasharray="4.1 2.8 3.7 3.0 4.4 2.1 3.2 1.5 4.1 2.9" stroke-dashoffset="2.4"/>
<path d="M793.6 694.9 L793.3 696.6 L792.8 699.3 L792.3 701.9 L791.8 704.6 L791.2 707.2 L790.8 709.9 L790.5 712.6 L790.1 715.3 L789.8 718.0 L789.3 720.6 L788.7 723.2 L788.0 725.9 L787.3 728.5 L786.7 731.1 L786.2 733.8 L785.7 736.4 L785.2 739.1 L784.7 741.7 L784.3 743.4" fill="none" stroke="#626262" stroke-width="5.4" stroke-linecap="round"/>
<path d="M793.6 694.9 L793.3 696.6 L792.8 699.3 L792.3 701.9 L791.8 704.6 L791.2 707.2 L790.8 709.9 L790.5 712.6 L790.1 715.3 L789.8 718.0 L789.3 720.6 L788.7 723.2 L788.0 725.9 L787.3 728.5 L786.7 731.1 L786.2 733.8 L785.7 736.4 L785.2 739.1 L784.7 741.7 L784.3 743.4" fill="none" stroke="#121212" stroke-width="5.7" stroke-linecap="butt" stroke-dasharray="3.7 2.5 2.3 2.6 3.4 2.4 2.9 2.3 3.9 2.3" stroke-dashoffset="3.6"/>
<path d="M798.1 695.8 L797.7 697.5 L797.2 700.1 L796.7 702.8 L796.2 705.4 L795.7 708.1 L795.1 710.7 L794.4 713.3 L793.8 716.0 L793.1 718.6 L792.6 721.2 L792.2 723.9 L791.9 726.6 L791.5 729.3 L791.2 732.0 L790.6 734.6 L790.1 737.3 L789.6 739.9 L789.1 742.6 L788.8 744.3" fill="none" stroke="#626262" stroke-width="5.4" stroke-linecap="round"/>
<path d="M798.1 695.8 L797.7 697.5 L797.2 700.1 L796.7 702.8 L796.2 705.4 L795.7 708.1 L795.1 710.7 L794.4 713.3 L793.8 716.0 L793.1 718.6 L792.6 721.2 L792.2 723.9 L791.9 726.6 L791.5 729.3 L791.2 732.0 L790.6 734.6 L790.1 737.3 L789.6 739.9 L789.1 742.6 L788.8 744.3" fill="none" stroke="#121212" stroke-width="5.7" stroke-linecap="butt" stroke-dasharray="1.9 1.5 3.0 2.4 2.4 2.4 3.5 1.3 3.1 1.6" stroke-dashoffset="0.3"/>
<path d="M974.5 701.2 L975.4 702.6 L976.8 704.9 L978.2 707.1 L979.7 709.2 L981.2 711.4 L982.7 713.6 L984.0 715.9 L985.2 718.2 L986.4 720.6 L987.5 722.7 L988.0 724.3 L987.7 726.5 L987.4 729.1 L987.1 731.7 L986.7 734.3 L986.4 736.9 L986.1 739.5 L985.9 741.2" fill="none" stroke="#626262" stroke-width="5.4" stroke-linecap="round"/>
<path d="M974.5 701.2 L975.4 702.6 L976.8 704.9 L978.2 707.1 L979.7 709.2 L981.2 711.4 L982.7 713.6 L984.0 715.9 L985.2 718.2 L986.4 720.6 L987.5 722.7 L988.0 724.3 L987.7 726.5 L987.4 729.1 L987.1 731.7 L986.7 734.3 L986.4 736.9 L986.1 739.5 L985.9 741.2" fill="none" stroke="#121212" stroke-width="5.7" stroke-linecap="butt" stroke-dasharray="2.7 1.5 2.3 1.3 3.1 1.9 3.5 2.3 2.4 2.8" stroke-dashoffset="0.0"/>
<path d="M978.4 698.8 L979.3 700.3 L980.7 702.5 L981.9 704.9 L983.1 707.2 L984.3 709.6 L985.5 711.9 L987.0 714.1 L988.5 716.3 L990.0 718.4 L991.6 720.8 L992.5 723.9 L992.2 727.0 L991.9 729.6 L991.6 732.2 L991.2 734.9 L990.9 737.5 L990.6 740.1 L990.4 741.8" fill="none" stroke="#626262" stroke-width="5.4" stroke-linecap="round"/>
<path d="M978.4 698.8 L979.3 700.3 L980.7 702.5 L981.9 704.9 L983.1 707.2 L984.3 709.6 L985.5 711.9 L987.0 714.1 L988.5 716.3 L990.0 718.4 L991.6 720.8 L992.5 723.9 L992.2 727.0 L991.9 729.6 L991.6 732.2 L991.2 734.9 L990.9 737.5 L990.6 740.1 L990.4 741.8" fill="none" stroke="#121212" stroke-width="5.7" stroke-linecap="butt" stroke-dasharray="2.9 1.7 2.9 1.4 4.0 1.9 1.9 2.3 2.1 2.2" stroke-dashoffset="1.7"/>
<path d="M877.7 719.3 L877.7 721.0 L877.7 723.6 L877.7 726.2 L878.0 728.8 L878.2 731.4 L878.3 734.0 L878.1 736.6 L877.8 739.2 L877.7 741.8 L877.7 744.4 L877.7 747.0 L877.7 748.7" fill="none" stroke="#626262" stroke-width="5.4" stroke-linecap="round"/>
<path d="M877.7 719.3 L877.7 721.0 L877.7 723.6 L877.7 726.2 L878.0 728.8 L878.2 731.4 L878.3 734.0 L878.1 736.6 L877.8 739.2 L877.7 741.8 L877.7 744.4 L877.7 747.0 L877.7 748.7" fill="none" stroke="#121212" stroke-width="5.7" stroke-linecap="butt" stroke-dasharray="4.4 2.7 2.9 2.7 3.5 1.9 2.2 2.3 3.3 2.9" stroke-dashoffset="4.8"/>
<path d="M882.3 719.3 L882.3 721.0 L882.3 723.6 L882.3 726.2 L882.0 728.8 L881.8 731.4 L881.7 734.0 L881.9 736.6 L882.2 739.2 L882.3 741.8 L882.3 744.4 L882.3 747.0 L882.3 748.7" fill="none" stroke="#626262" stroke-width="5.4" stroke-linecap="round"/>
<path d="M882.3 719.3 L882.3 721.0 L882.3 723.6 L882.3 726.2 L882.0 728.8 L881.8 731.4 L881.7 734.0 L881.9 736.6 L882.2 739.2 L882.3 741.8 L882.3 744.4 L882.3 747.0 L882.3 748.7" fill="none" stroke="#121212" stroke-width="5.7" stroke-linecap="butt" stroke-dasharray="3.4 1.8 4.2 1.2 2.1 2.2 3.5 1.5 3.5 2.8" stroke-dashoffset="1.9"/>
<path d="M908.6 737.6 L910.1 738.5 L912.5 739.8 L915.0 740.9 L917.5 742.0 L920.0 743.2 L922.3 744.8 L924.5 746.3 L926.9 747.7 L929.3 749.0 L931.7 750.3 L933.3 751.1" fill="none" stroke="#626262" stroke-width="5.4" stroke-linecap="round"/>
<path d="M908.6 737.6 L910.1 738.5 L912.5 739.8 L915.0 740.9 L917.5 742.0 L920.0 743.2 L922.3 744.8 L924.5 746.3 L926.9 747.7 L929.3 749.0 L931.7 750.3 L933.3 751.1" fill="none" stroke="#121212" stroke-width="5.7" stroke-linecap="butt" stroke-dasharray="2.4 1.7 4.4 1.9 4.4 2.8 3.4 1.7 4.4 2.1" stroke-dashoffset="2.1"/>
<path d="M910.7 733.7 L912.3 734.5 L914.7 735.8 L917.0 737.3 L919.3 738.9 L921.6 740.3 L924.1 741.3 L926.7 742.4 L929.1 743.7 L931.5 745.0 L933.9 746.3 L935.4 747.2" fill="none" stroke="#626262" stroke-width="5.4" stroke-linecap="round"/>
<path d="M910.7 733.7 L912.3 734.5 L914.7 735.8 L917.0 737.3 L919.3 738.9 L921.6 740.3 L924.1 741.3 L926.7 742.4 L929.1 743.7 L931.5 745.0 L933.9 746.3 L935.4 747.2" fill="none" stroke="#121212" stroke-width="5.7" stroke-linecap="butt" stroke-dasharray="2.7 3.0 3.1 1.7 3.1 1.4 3.5 2.0 2.6 2.6" stroke-dashoffset="4.1"/>
<path d="M948.2 734.3 L949.0 736.3 L949.4 739.7 L949.9 741.7" fill="none" stroke="#626262" stroke-width="4.5" stroke-linecap="round"/>
<path d="M948.2 734.3 L949.0 736.3 L949.4 739.7 L949.9 741.7" fill="none" stroke="#121212" stroke-width="4.7" stroke-linecap="butt" stroke-dasharray="3.2 1.7 4.3 2.6 2.5 1.7 2.2 3.0 2.6 2.3" stroke-dashoffset="2.4"/>
<path d="M951.5 733.5 L951.8 735.7 L953.0 738.7 L953.6 740.8" fill="none" stroke="#626262" stroke-width="4.5" stroke-linecap="round"/>
<path d="M951.5 733.5 L951.8 735.7 L953.0 738.7 L953.6 740.8" fill="none" stroke="#121212" stroke-width="4.7" stroke-linecap="butt" stroke-dasharray="3.5 2.3 3.8 1.4 3.9 1.7 3.2 1.8 2.6 2.2" stroke-dashoffset="2.3"/>
<path d="M803.1 790.5 L802.5 792.1 L801.5 794.7 L800.5 797.2 L799.7 799.8 L798.9 802.4 L798.0 805.0 L797.2 807.6 L796.0 810.1 L794.9 812.6 L793.7 815.0 L792.6 817.5 L791.6 820.1 L790.6 822.6 L789.7 825.2 L788.7 827.7 L787.7 830.2 L787.0 831.9" fill="none" stroke="#626262" stroke-width="5.4" stroke-linecap="round"/>
<path d="M803.1 790.5 L802.5 792.1 L801.5 794.7 L800.5 797.2 L799.7 799.8 L798.9 802.4 L798.0 805.0 L797.2 807.6 L796.0 810.1 L794.9 812.6 L793.7 815.0 L792.6 817.5 L791.6 820.1 L790.6 822.6 L789.7 825.2 L788.7 827.7 L787.7 830.2 L787.0 831.9" fill="none" stroke="#121212" stroke-width="5.7" stroke-linecap="butt" stroke-dasharray="3.8 2.3 1.9 1.7 3.0 2.8 4.2 2.2 1.8 2.6" stroke-dashoffset="2.1"/>
<path d="M807.4 792.1 L806.7 793.8 L805.7 796.3 L804.7 798.8 L803.6 801.3 L802.5 803.8 L801.3 806.3 L800.2 808.8 L799.4 811.4 L798.5 814.0 L797.7 816.6 L796.8 819.2 L795.9 821.7 L794.9 824.3 L793.9 826.8 L792.9 829.3 L791.9 831.9 L791.3 833.5" fill="none" stroke="#626262" stroke-width="5.4" stroke-linecap="round"/>
<path d="M807.4 792.1 L806.7 793.8 L805.7 796.3 L804.7 798.8 L803.6 801.3 L802.5 803.8 L801.3 806.3 L800.2 808.8 L799.4 811.4 L798.5 814.0 L797.7 816.6 L796.8 819.2 L795.9 821.7 L794.9 824.3 L793.9 826.8 L792.9 829.3 L791.9 831.9 L791.3 833.5" fill="none" stroke="#121212" stroke-width="5.7" stroke-linecap="butt" stroke-dasharray="3.4 2.5 3.5 2.1 4.3 1.9 2.9 2.7 2.3 1.7" stroke-dashoffset="4.2"/>
<path d="M844.1 772.1 L844.1 773.9 L844.1 776.6 L844.2 779.3 L844.3 782.0 L844.4 784.7 L844.6 787.3 L844.7 790.0 L844.8 792.7 L844.7 795.3 L844.4 797.2 L842.8 798.8 L841.0 800.8 L839.2 802.7 L837.4 804.7 L835.6 806.8 L833.9 808.8 L832.2 810.9 L830.4 813.0 L828.7 815.0 L827.0 817.1 L825.2 819.1 L823.5 821.2 L821.7 823.2 L820.0 825.3 L818.9 826.6" fill="none" stroke="#626262" stroke-width="5.4" stroke-linecap="round"/>
<path d="M844.1 772.1 L844.1 773.9 L844.1 776.6 L844.2 779.3 L844.3 782.0 L844.4 784.7 L844.6 787.3 L844.7 790.0 L844.8 792.7 L844.7 795.3 L844.4 797.2 L842.8 798.8 L841.0 800.8 L839.2 802.7 L837.4 804.7 L835.6 806.8 L833.9 808.8 L832.2 810.9 L830.4 813.0 L828.7 815.0 L827.0 817.1 L825.2 819.1 L823.5 821.2 L821.7 823.2 L820.0 825.3 L818.9 826.6" fill="none" stroke="#121212" stroke-width="5.7" stroke-linecap="butt" stroke-dasharray="4.1 2.5 3.0 1.7 3.9 2.8 2.2 2.1 3.3 2.1" stroke-dashoffset="1.7"/>
<path d="M848.7 772.1 L848.7 773.9 L848.7 776.6 L848.6 779.3 L848.5 782.0 L848.4 784.7 L848.2 787.3 L848.1 790.0 L848.0 792.7 L848.1 795.5 L847.7 798.7 L845.8 801.3 L844.2 803.4 L842.5 805.6 L840.9 807.7 L839.1 809.7 L837.4 811.8 L835.6 813.8 L833.9 815.9 L832.2 817.9 L830.4 820.0 L828.7 822.0 L826.9 824.1 L825.2 826.2 L823.5 828.2 L822.3 829.5" fill="none" stroke="#626262" stroke-width="5.4" stroke-linecap="round"/>
<path d="M848.7 772.1 L848.7 773.9 L848.7 776.6 L848.6 779.3 L848.5 782.0 L848.4 784.7 L848.2 787.3 L848.1 790.0 L848.0 792.7 L848.1 795.5 L847.7 798.7 L845.8 801.3 L844.2 803.4 L842.5 805.6 L840.9 807.7 L839.1 809.7 L837.4 811.8 L835.6 813.8 L833.9 815.9 L832.2 817.9 L830.4 820.0 L828.7 822.0 L826.9 824.1 L825.2 826.2 L823.5 828.2 L822.3 829.5" fill="none" stroke="#121212" stroke-width="5.7" stroke-linecap="butt" stroke-dasharray="2.2 2.3 4.0 1.3 2.4 2.7 3.9 2.4 1.9 2.5" stroke-dashoffset="4.9"/>
<path d="M916.6 773.4 L918.3 773.7 L920.9 774.2 L923.5 774.7 L926.2 775.1 L928.9 775.3 L931.6 775.5 L934.2 776.3 L936.8 777.0 L939.4 777.6 L941.1 777.9" fill="none" stroke="#626262" stroke-width="5.0" stroke-linecap="round"/>
<path d="M916.6 773.4 L918.3 773.7 L920.9 774.2 L923.5 774.7 L926.2 775.1 L928.9 775.3 L931.6 775.5 L934.2 776.3 L936.8 777.0 L939.4 777.6 L941.1 777.9" fill="none" stroke="#121212" stroke-width="5.2" stroke-linecap="butt" stroke-dasharray="3.7 1.3 4.1 1.6 3.5 2.9 3.7 1.4 2.6 2.9" stroke-dashoffset="0.7"/>
<path d="M917.3 769.3 L919.0 769.6 L921.7 770.1 L924.3 770.6 L926.9 771.1 L929.5 771.9 L932.1 772.6 L934.8 772.8 L937.5 773.0 L940.1 773.5 L941.8 773.8" fill="none" stroke="#626262" stroke-width="5.0" stroke-linecap="round"/>
<path d="M917.3 769.3 L919.0 769.6 L921.7 770.1 L924.3 770.6 L926.9 771.1 L929.5 771.9 L932.1 772.6 L934.8 772.8 L937.5 773.0 L940.1 773.5 L941.8 773.8" fill="none" stroke="#121212" stroke-width="5.2" stroke-linecap="butt" stroke-dasharray="3.4 1.9 2.2 2.3 1.9 1.4 2.8 1.3 2.0 2.2" stroke-dashoffset="3.7"/>
<path d="M959.1 768.5 L960.6 769.5 L963.1 770.8 L965.7 771.9 L967.8 773.8 L969.4 774.7" fill="none" stroke="#626262" stroke-width="4.5" stroke-linecap="round"/>
<path d="M959.1 768.5 L960.6 769.5 L963.1 770.8 L965.7 771.9 L967.8 773.8 L969.4 774.7" fill="none" stroke="#121212" stroke-width="4.7" stroke-linecap="butt" stroke-dasharray="2.2 2.0 2.6 2.3 3.1 2.9 2.8 1.3 3.7 1.5" stroke-dashoffset="3.2"/>
<path d="M961.0 765.3 L962.6 766.2 L964.9 767.8 L967.1 769.5 L969.8 770.5 L971.3 771.5" fill="none" stroke="#626262" stroke-width="4.5" stroke-linecap="round"/>
<path d="M961.0 765.3 L962.6 766.2 L964.9 767.8 L967.1 769.5 L969.8 770.5 L971.3 771.5" fill="none" stroke="#121212" stroke-width="4.7" stroke-linecap="butt" stroke-dasharray="3.2 2.8 3.3 2.3 2.5 2.2 2.5 2.6 3.2 1.4" stroke-dashoffset="1.2"/>
<path d="M957.2 796.3 L957.3 798.0 L957.6 800.6 L958.0 803.2 L958.5 805.8 L958.7 808.4 L958.7 811.1 L958.7 813.7 L958.9 816.3 L959.1 818.9 L959.3 821.6 L959.5 823.3" fill="none" stroke="#626262" stroke-width="5.0" stroke-linecap="round"/>
<path d="M957.2 796.3 L957.3 798.0 L957.6 800.6 L958.0 803.2 L958.5 805.8 L958.7 808.4 L958.7 811.1 L958.7 813.7 L958.9 816.3 L959.1 818.9 L959.3 821.6 L959.5 823.3" fill="none" stroke="#121212" stroke-width="5.2" stroke-linecap="butt" stroke-dasharray="3.8 1.5 3.7 2.4 2.0 2.4 2.0 1.4 3.4 1.6" stroke-dashoffset="4.4"/>
<path d="M961.3 795.9 L961.5 797.6 L961.7 800.3 L961.7 802.9 L961.7 805.5 L961.9 808.2 L962.3 810.8 L962.8 813.4 L963.0 816.0 L963.2 818.6 L963.5 821.2 L963.6 822.9" fill="none" stroke="#626262" stroke-width="5.0" stroke-linecap="round"/>
<path d="M961.3 795.9 L961.5 797.6 L961.7 800.3 L961.7 802.9 L961.7 805.5 L961.9 808.2 L962.3 810.8 L962.8 813.4 L963.0 816.0 L963.2 818.6 L963.5 821.2 L963.6 822.9" fill="none" stroke="#121212" stroke-width="5.2" stroke-linecap="butt" stroke-dasharray="3.1 1.8 4.0 1.3 3.8 1.3 2.2 2.9 3.6 1.6" stroke-dashoffset="0.6"/>
<path d="M995.3 781.8 L995.3 783.6 L995.3 786.3 L995.3 789.1 L995.3 791.9 L995.4 794.6 L995.6 797.4 L995.8 800.2 L995.9 803.0 L995.7 805.7 L995.5 808.5 L995.3 811.3 L995.3 814.0 L995.3 815.8" fill="none" stroke="#626262" stroke-width="5.4" stroke-linecap="round"/>
<path d="M995.3 781.8 L995.3 783.6 L995.3 786.3 L995.3 789.1 L995.3 791.9 L995.4 794.6 L995.6 797.4 L995.8 800.2 L995.9 803.0 L995.7 805.7 L995.5 808.5 L995.3 811.3 L995.3 814.0 L995.3 815.8" fill="none" stroke="#121212" stroke-width="5.7" stroke-linecap="butt" stroke-dasharray="3.6 2.7 2.2 2.3 2.8 1.6 2.7 2.3 2.7 1.9" stroke-dashoffset="0.7"/>
<path d="M999.9 781.8 L999.9 783.6 L999.9 786.3 L999.9 789.1 L999.9 791.9 L999.8 794.6 L999.6 797.4 L999.4 800.2 L999.3 803.0 L999.5 805.7 L999.7 808.5 L999.9 811.3 L999.9 814.0 L999.9 815.8" fill="none" stroke="#626262" stroke-width="5.4" stroke-linecap="round"/>
<path d="M999.9 781.8 L999.9 783.6 L999.9 786.3 L999.9 789.1 L999.9 791.9 L999.8 794.6 L999.6 797.4 L999.4 800.2 L999.3 803.0 L999.5 805.7 L999.7 808.5 L999.9 811.3 L999.9 814.0 L999.9 815.8" fill="none" stroke="#121212" stroke-width="5.7" stroke-linecap="butt" stroke-dasharray="4.0 2.4 4.0 2.0 4.1 2.1 3.4 2.2 3.8 1.9" stroke-dashoffset="0.5"/>
<path d="M916.7 823.3 L917.5 825.1 L918.5 828.0 L919.1 831.0 L920.1 833.8 L920.7 835.7" fill="none" stroke="#626262" stroke-width="5.4" stroke-linecap="round"/>
<path d="M916.7 823.3 L917.5 825.1 L918.5 828.0 L919.1 831.0 L920.1 833.8 L920.7 835.7" fill="none" stroke="#121212" stroke-width="5.7" stroke-linecap="butt" stroke-dasharray="2.3 1.3 4.2 2.1 3.9 1.2 3.1 2.8 3.5 2.0" stroke-dashoffset="2.3"/>
<path d="M920.8 821.9 L921.2 823.9 L922.1 826.8 L923.4 829.5 L924.4 832.4 L925.0 834.3" fill="none" stroke="#626262" stroke-width="5.4" stroke-linecap="round"/>
<path d="M920.8 821.9 L921.2 823.9 L922.1 826.8 L923.4 829.5 L924.4 832.4 L925.0 834.3" fill="none" stroke="#121212" stroke-width="5.7" stroke-linecap="butt" stroke-dasharray="2.1 1.5 2.2 1.9 2.8 2.8 2.2 1.7 2.5 1.5" stroke-dashoffset="1.4"/>
<path d="M940.8 828.0 L941.7 830.0 L942.0 833.3 L942.5 835.4" fill="none" stroke="#626262" stroke-width="5.0" stroke-linecap="round"/>
<path d="M940.8 828.0 L941.7 830.0 L942.0 833.3 L942.5 835.4" fill="none" stroke="#121212" stroke-width="5.2" stroke-linecap="butt" stroke-dasharray="3.1 1.3 4.3 1.9 4.3 2.4 3.6 2.0 4.4 1.4" stroke-dashoffset="3.3"/>
<path d="M944.5 827.1 L944.7 829.2 L946.0 832.3 L946.5 834.4" fill="none" stroke="#626262" stroke-width="5.0" stroke-linecap="round"/>
<path d="M944.5 827.1 L944.7 829.2 L946.0 832.3 L946.5 834.4" fill="none" stroke="#121212" stroke-width="5.2" stroke-linecap="butt" stroke-dasharray="2.6 2.4 3.8 1.5 2.3 1.2 2.4 1.3 2.9 3.0" stroke-dashoffset="1.8"/>
<path d="M975.8 831.2 L977.4 832.0 L980.0 832.8 L982.3 834.1 L984.6 835.6 L987.0 836.8 L988.5 837.6" fill="none" stroke="#626262" stroke-width="5.4" stroke-linecap="round"/>
<path d="M975.8 831.2 L977.4 832.0 L980.0 832.8 L982.3 834.1 L984.6 835.6 L987.0 836.8 L988.5 837.6" fill="none" stroke="#121212" stroke-width="5.7" stroke-linecap="butt" stroke-dasharray="3.1 1.7 3.8 2.5 2.2 1.6 3.6 2.9 3.5 2.0" stroke-dashoffset="4.9"/>
<path d="M977.9 827.2 L979.4 828.0 L981.6 829.6 L984.1 830.7 L986.6 831.6 L989.0 832.8 L990.6 833.6" fill="none" stroke="#626262" stroke-width="5.4" stroke-linecap="round"/>
<path d="M977.9 827.2 L979.4 828.0 L981.6 829.6 L984.1 830.7 L986.6 831.6 L989.0 832.8 L990.6 833.6" fill="none" stroke="#121212" stroke-width="5.7" stroke-linecap="butt" stroke-dasharray="1.8 1.3 3.9 1.9 1.9 2.2 4.5 2.1 2.7 1.4" stroke-dashoffset="0.4"/>
<path d="M863.9 846.8 L864.1 848.7 L864.5 851.5 L865.3 854.2 L865.6 857.0 L865.7 859.9 L866.0 861.7" fill="none" stroke="#626262" stroke-width="4.5" stroke-linecap="round"/>
<path d="M863.9 846.8 L864.1 848.7 L864.5 851.5 L865.3 854.2 L865.6 857.0 L865.7 859.9 L866.0 861.7" fill="none" stroke="#121212" stroke-width="4.7" stroke-linecap="butt" stroke-dasharray="3.1 2.9 1.9 1.6 1.9 1.9 2.0 1.7 2.9 1.8" stroke-dashoffset="0.3"/>
<path d="M867.6 846.3 L867.9 848.1 L868.3 850.9 L868.3 853.8 L868.8 856.6 L869.5 859.3 L869.7 861.2" fill="none" stroke="#626262" stroke-width="4.5" stroke-linecap="round"/>
<path d="M867.6 846.3 L867.9 848.1 L868.3 850.9 L868.3 853.8 L868.8 856.6 L869.5 859.3 L869.7 861.2" fill="none" stroke="#121212" stroke-width="4.7" stroke-linecap="butt" stroke-dasharray="1.9 2.9 2.3 2.1 2.9 2.2 2.0 1.8 2.1 2.2" stroke-dashoffset="4.6"/>
<path d="M882.8 846.9 L883.1 848.6 L883.6 851.2 L884.1 853.8 L884.7 856.3 L885.4 858.8 L886.2 861.4 L886.8 863.9 L887.1 866.5 L887.4 869.2 L887.7 871.8 L888.2 874.3 L888.7 876.9 L889.3 879.5 L889.6 881.1" fill="none" stroke="#626262" stroke-width="5.4" stroke-linecap="round"/>
<path d="M882.8 846.9 L883.1 848.6 L883.6 851.2 L884.1 853.8 L884.7 856.3 L885.4 858.8 L886.2 861.4 L886.8 863.9 L887.1 866.5 L887.4 869.2 L887.7 871.8 L888.2 874.3 L888.7 876.9 L889.3 879.5 L889.6 881.1" fill="none" stroke="#121212" stroke-width="5.7" stroke-linecap="butt" stroke-dasharray="4.1 1.6 1.8 2.2 3.1 2.2 2.8 2.3 3.8 2.8" stroke-dashoffset="1.5"/>
<path d="M887.2 846.1 L887.5 847.7 L888.1 850.3 L888.6 852.9 L889.0 855.5 L889.3 858.1 L889.6 860.7 L890.0 863.3 L890.7 865.8 L891.5 868.3 L892.2 870.9 L892.7 873.4 L893.2 876.0 L893.7 878.6 L894.0 880.3" fill="none" stroke="#626262" stroke-width="5.4" stroke-linecap="round"/>
<path d="M887.2 846.1 L887.5 847.7 L888.1 850.3 L888.6 852.9 L889.0 855.5 L889.3 858.1 L889.6 860.7 L890.0 863.3 L890.7 865.8 L891.5 868.3 L892.2 870.9 L892.7 873.4 L893.2 876.0 L893.7 878.6 L894.0 880.3" fill="none" stroke="#121212" stroke-width="5.7" stroke-linecap="butt" stroke-dasharray="3.0 2.7 2.4 1.4 2.6 1.4 3.9 2.7 2.6 1.4" stroke-dashoffset="0.4"/>
<path d="M823.9 862.3 L825.1 863.5 L827.0 865.4 L829.0 867.1 L831.0 868.9 L833.1 870.6 L834.9 872.6 L836.6 874.6 L838.3 876.6 L840.2 878.6 L842.1 880.5 L843.9 882.3 L845.8 884.2 L847.7 886.1 L848.9 887.3" fill="none" stroke="#626262" stroke-width="5.4" stroke-linecap="round"/>
<path d="M823.9 862.3 L825.1 863.5 L827.0 865.4 L829.0 867.1 L831.0 868.9 L833.1 870.6 L834.9 872.6 L836.6 874.6 L838.3 876.6 L840.2 878.6 L842.1 880.5 L843.9 882.3 L845.8 884.2 L847.7 886.1 L848.9 887.3" fill="none" stroke="#121212" stroke-width="5.7" stroke-linecap="butt" stroke-dasharray="2.0 2.0 3.4 1.6 2.0 2.5 1.9 1.6 2.6 1.9" stroke-dashoffset="0.5"/>
<path d="M827.1 859.1 L828.3 860.3 L830.2 862.2 L831.9 864.2 L833.7 866.2 L835.4 868.3 L837.4 870.1 L839.4 871.8 L841.4 873.5 L843.4 875.4 L845.3 877.3 L847.1 879.1 L849.0 881.0 L850.9 882.9 L852.1 884.1" fill="none" stroke="#626262" stroke-width="5.4" stroke-linecap="round"/>
<path d="M827.1 859.1 L828.3 860.3 L830.2 862.2 L831.9 864.2 L833.7 866.2 L835.4 868.3 L837.4 870.1 L839.4 871.8 L841.4 873.5 L843.4 875.4 L845.3 877.3 L847.1 879.1 L849.0 881.0 L850.9 882.9 L852.1 884.1" fill="none" stroke="#121212" stroke-width="5.7" stroke-linecap="butt" stroke-dasharray="2.9 1.8 3.8 2.2 4.2 2.4 3.9 2.2 3.0 2.7" stroke-dashoffset="3.3"/>
<path d="M965.9 860.0 L967.5 861.2 L969.9 862.9 L972.4 864.4 L975.1 865.8 L977.2 867.8 L979.5 869.7 L981.0 870.8" fill="none" stroke="#626262" stroke-width="5.4" stroke-linecap="round"/>
<path d="M965.9 860.0 L967.5 861.2 L969.9 862.9 L972.4 864.4 L975.1 865.8 L977.2 867.8 L979.5 869.7 L981.0 870.8" fill="none" stroke="#121212" stroke-width="5.7" stroke-linecap="butt" stroke-dasharray="3.8 2.5 2.5 2.7 2.8 1.4 2.0 1.5 2.5 2.4" stroke-dashoffset="1.4"/>
<path d="M968.6 856.4 L970.1 857.5 L972.5 859.2 L974.8 861.1 L976.9 863.1 L979.6 864.6 L982.1 866.0 L983.7 867.2" fill="none" stroke="#626262" stroke-width="5.4" stroke-linecap="round"/>
<path d="M968.6 856.4 L970.1 857.5 L972.5 859.2 L974.8 861.1 L976.9 863.1 L979.6 864.6 L982.1 866.0 L983.7 867.2" fill="none" stroke="#121212" stroke-width="5.7" stroke-linecap="butt" stroke-dasharray="2.0 2.6 3.3 1.2 1.9 1.4 2.8 2.7 4.4 2.3" stroke-dashoffset="1.2"/>
<path d="M966.8 892.1 L965.3 893.0 L962.9 894.4 L960.5 896.0 L958.3 897.6 L956.0 899.2 L953.5 900.4 L951.0 901.6 L948.5 902.8 L946.1 904.2 L943.7 905.6 L941.3 907.0 L939.7 908.0" fill="none" stroke="#626262" stroke-width="5.4" stroke-linecap="round"/>
<path d="M966.8 892.1 L965.3 893.0 L962.9 894.4 L960.5 896.0 L958.3 897.6 L956.0 899.2 L953.5 900.4 L951.0 901.6 L948.5 902.8 L946.1 904.2 L943.7 905.6 L941.3 907.0 L939.7 908.0" fill="none" stroke="#121212" stroke-width="5.7" stroke-linecap="butt" stroke-dasharray="2.8 1.8 1.8 2.3 4.0 2.5 2.1 2.2 2.3 2.5" stroke-dashoffset="2.2"/>
<path d="M969.1 896.0 L967.5 897.0 L965.1 898.4 L962.7 899.6 L960.1 900.8 L957.6 902.0 L955.3 903.6 L953.0 905.2 L950.7 906.8 L948.3 908.2 L945.9 909.6 L943.5 911.0 L942.0 911.9" fill="none" stroke="#626262" stroke-width="5.4" stroke-linecap="round"/>
<path d="M969.1 896.0 L967.5 897.0 L965.1 898.4 L962.7 899.6 L960.1 900.8 L957.6 902.0 L955.3 903.6 L953.0 905.2 L950.7 906.8 L948.3 908.2 L945.9 909.6 L943.5 911.0 L942.0 911.9" fill="none" stroke="#121212" stroke-width="5.7" stroke-linecap="butt" stroke-dasharray="4.3 2.6 2.1 1.8 4.3 2.0 3.0 2.0 3.9 2.9" stroke-dashoffset="2.7"/>
<path d="M870.5 908.2 L872.1 908.8 L874.6 909.6 L877.1 910.4 L879.6 911.3 L882.1 912.1 L884.6 912.9 L887.2 913.8 L889.7 914.6 L892.2 915.4 L894.7 916.1 L897.3 916.8 L899.8 917.5 L902.4 918.2 L904.9 919.0 L907.4 919.9 L909.8 920.9 L912.3 921.9 L914.7 922.9 L917.2 923.8 L919.7 924.6 L922.2 925.5 L924.7 926.3 L926.3 926.8" fill="none" stroke="#626262" stroke-width="5.9" stroke-linecap="round"/>
<path d="M870.5 908.2 L872.1 908.8 L874.6 909.6 L877.1 910.4 L879.6 911.3 L882.1 912.1 L884.6 912.9 L887.2 913.8 L889.7 914.6 L892.2 915.4 L894.7 916.1 L897.3 916.8 L899.8 917.5 L902.4 918.2 L904.9 919.0 L907.4 919.9 L909.8 920.9 L912.3 921.9 L914.7 922.9 L917.2 923.8 L919.7 924.6 L922.2 925.5 L924.7 926.3 L926.3 926.8" fill="none" stroke="#121212" stroke-width="6.1" stroke-linecap="butt" stroke-dasharray="3.4 1.4 4.0 2.0 1.9 3.0 1.9 2.2 3.1 2.8" stroke-dashoffset="2.0"/>
<path d="M872.1 903.6 L873.7 904.1 L876.2 904.9 L878.7 905.8 L881.2 906.6 L883.7 907.4 L886.2 908.3 L888.7 909.1 L891.2 909.9 L893.7 910.8 L896.2 911.8 L898.6 912.8 L901.1 913.8 L903.5 914.7 L906.0 915.6 L908.6 916.3 L911.1 917.0 L913.7 917.7 L916.2 918.4 L918.8 919.1 L921.3 920.0 L923.8 920.8 L926.3 921.6 L927.9 922.2" fill="none" stroke="#626262" stroke-width="5.9" stroke-linecap="round"/>
<path d="M872.1 903.6 L873.7 904.1 L876.2 904.9 L878.7 905.8 L881.2 906.6 L883.7 907.4 L886.2 908.3 L888.7 909.1 L891.2 909.9 L893.7 910.8 L896.2 911.8 L898.6 912.8 L901.1 913.8 L903.5 914.7 L906.0 915.6 L908.6 916.3 L911.1 917.0 L913.7 917.7 L916.2 918.4 L918.8 919.1 L921.3 920.0 L923.8 920.8 L926.3 921.6 L927.9 922.2" fill="none" stroke="#121212" stroke-width="6.1" stroke-linecap="butt" stroke-dasharray="2.4 1.7 2.3 2.2 2.8 2.6 2.5 1.8 2.5 3.0" stroke-dashoffset="4.2"/>
</g></g>
</svg>
<!--/CHROMO-->
<!-- footers -->
<div class="a" style="left:214.7px;top:519px;width:14px;height:14.8px;border-radius:2.5px;background:#fcc609"></div>
<div class="t" style="left:235.3px;top:512.9px;font-size:9.9px;color:#e8e4e0;-webkit-text-stroke:0.25px #e8e4e0">001</div>
<div class="t" style="left:235.3px;top:527.1px;font-size:9.9px;-webkit-text-stroke:0.2px #dedad6">46</div>
<div class="t" style="left:538px;top:513.6px;width:200px;text-align:right;font-size:9.2px">Second view needed</div>
<div class="t" style="left:538px;top:527.8px;width:200px;text-align:right;font-size:9.5px">ADM</div>
<div class="a" style="left:760px;top:519px;width:14.7px;height:14.8px;border-radius:2.5px;background:#21ad5c"></div>
<div class="t" style="left:781px;top:512.9px;font-size:9.6px;color:#e8e4e0;-webkit-text-stroke:0.25px #e8e4e0">(016)</div>
<div class="t" style="left:781px;top:527.1px;font-size:9.9px;-webkit-text-stroke:0.2px #dedad6">46</div>

<div class="a" style="left:214.8px;top:943px;width:14.2px;height:14.2px;border-radius:2.5px;background:#95a2a3"></div>
<div class="t" style="left:235.3px;top:936.4px;font-size:9.9px;color:#e8e4e0;-webkit-text-stroke:0.25px #e8e4e0">003</div>
<div class="t" style="left:235.3px;top:950.8px;font-size:9.9px;-webkit-text-stroke:0.2px #dedad6">45</div>
<div class="t" style="left:538px;top:937.1px;width:200px;text-align:right;font-size:9.2px">Meta: Correct segmentation</div>
<div class="t" style="left:538px;top:951.5px;width:200px;text-align:right;font-size:9.5px">[ADM]</div>
<div class="a" style="left:760px;top:943px;width:14.2px;height:14.2px;border-radius:2.5px;background:#95a2a3"></div>
<div class="t" style="left:781px;top:936.4px;font-size:9.9px;color:#e8e4e0;-webkit-text-stroke:0.25px #e8e4e0">004</div>
<div class="t" style="left:781px;top:950.8px;font-size:9.9px;-webkit-text-stroke:0.2px #dedad6">45</div>

<!-- status bar -->
<div class="a" style="left:200px;top:972.5px;width:800px;height:1px;background:#2c2a29"></div>
<div class="t" style="left:210.6px;top:982.1px;font-size:11.2px">14 / 14</div>
<div class="t" style="left:251.3px;top:982.1px;font-size:10.8px">(+1)</div>
<div class="t" style="left:296px;top:982.1px;font-size:11px">1</div>
<div class="t" style="left:328.8px;top:983.7px;font-size:9.3px;color:#6e6b69">Counted</div>
<div class="t" style="left:373.7px;top:982.1px;font-size:11px">13</div>
<div class="t" style="left:408px;top:983.6px;font-size:9.5px;color:#b4b0ad">Karyogram</div>
<div class="t" style="left:464.7px;top:982.1px;font-size:11px">1</div>

<!-- popup -->
<div class="a" style="left:265px;top:73px;width:531px;height:103px;background:#252423;border:1px solid #201f1e"></div>
<svg class="a" style="left:265px;top:73px" width="531" height="103">
<line x1="57.5" y1="30.2" x2="470.5" y2="30.2" stroke="#383736" stroke-width="5.2" stroke-linecap="round"/>
<line x1="57.5" y1="30.2" x2="264.4" y2="30.2" stroke="#fcc609" stroke-width="5.2" stroke-linecap="round"/>
<circle cx="58.2" cy="30.2" r="2" fill="#c9a520"/>
<circle cx="161.5" cy="30.2" r="2" fill="#c9a520"/>
<circle cx="264.4" cy="29.9" r="5.1" fill="#fcc609"/>
<circle cx="369" cy="30.2" r="2" fill="#444342"/>
<circle cx="471" cy="30.2" r="2" fill="#444342"/>
</svg>
<div class="a" style="left:223.3px;top:109.5px;width:200px;text-align:center;font-size:9.5px;line-height:12px;white-space:nowrap">Created<br>2023-06-25<br>[ADM]</div>
<div class="a" style="left:327.2px;top:109.5px;width:200px;text-align:center;font-size:9.5px;line-height:12px;white-space:nowrap">Captured<br>2025-06-25<br>ADM</div>
<div class="a" style="left:430.6px;top:109.5px;width:200px;text-align:center;font-size:9.5px;line-height:12px;white-space:nowrap">In Analysis<br>2025-06-25<br>ADM</div>
<div class="a" style="left:534.7px;top:109.5px;width:200px;text-align:center;font-size:9.5px;line-height:12px;white-space:nowrap">Analyzed</div>
<div class="a" style="left:638.3px;top:109.5px;width:200px;text-align:center;font-size:9.5px;line-height:12px;white-space:nowrap">Checked</div>
</body></html>
